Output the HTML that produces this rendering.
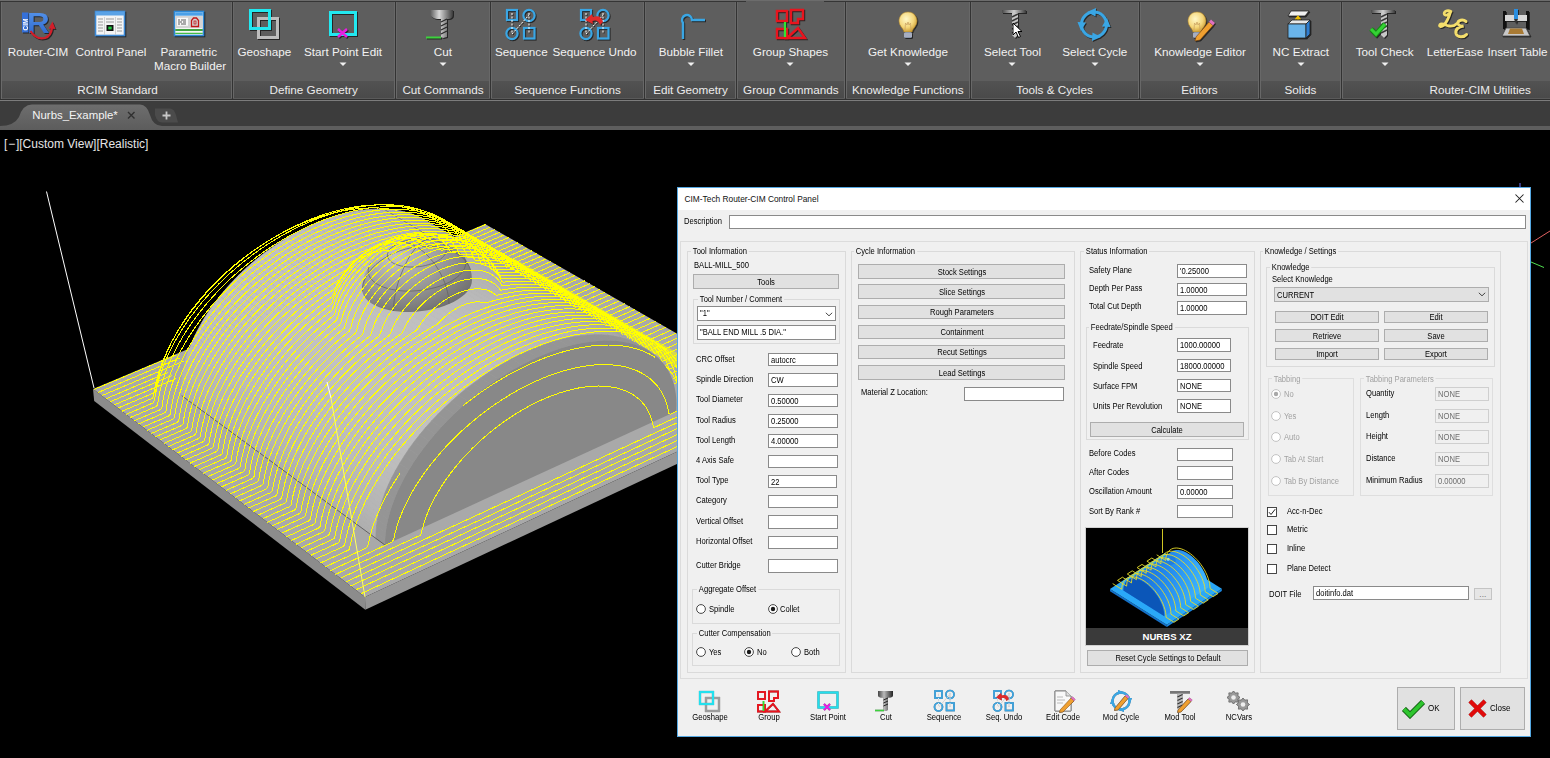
<!DOCTYPE html>
<html><head><meta charset="utf-8"><title>Router-CIM</title>
<style>
html,body{margin:0;padding:0;}
body{width:1550px;height:758px;overflow:hidden;position:relative;background:#000;font-family:"Liberation Sans", sans-serif;}
.a{position:absolute;}
.t{position:absolute;white-space:pre;line-height:1;font-family:"Liberation Sans", sans-serif;}
svg.a{overflow:visible;}
</style></head><body>
<div class="a" style="left:0px;top:0px;width:1550px;height:101px;background:#5e5e5e;"></div>
<div class="a" style="left:0px;top:0px;width:1550px;height:1px;background:#6c6c6c;"></div>
<div class="a" style="left:0px;top:1px;width:746px;height:1px;background:#353535;"></div>
<div class="a" style="left:824px;top:1px;width:726px;height:1px;background:#353535;"></div>
<div class="a" style="left:0px;top:81px;width:1550px;height:17px;background:#4e4e4e;background:linear-gradient(#525252,#4a4a4a);"></div>
<div class="a" style="left:0px;top:98px;width:1550px;height:1px;background:#5a5a5a;"></div>
<div class="a" style="left:0px;top:99px;width:1550px;height:1px;background:#303030;"></div>
<div class="a" style="left:0px;top:100px;width:1550px;height:1px;background:#7c7c7c;"></div>
<div class="a" style="left:0px;top:2px;width:1px;height:97px;background:#3a3a3a;"></div>
<div class="a" style="left:1px;top:2px;width:1px;height:97px;background:#6a6a6a;"></div>
<div class="a" style="left:231px;top:2px;width:1px;height:96px;background:#686868;"></div>
<div class="a" style="left:232px;top:2px;width:1px;height:97px;background:#333333;"></div>
<div class="a" style="left:233px;top:2px;width:1px;height:96px;background:#686868;"></div>
<div class="a" style="left:394px;top:2px;width:1px;height:96px;background:#686868;"></div>
<div class="a" style="left:395px;top:2px;width:1px;height:97px;background:#333333;"></div>
<div class="a" style="left:396px;top:2px;width:1px;height:96px;background:#686868;"></div>
<div class="a" style="left:489px;top:2px;width:1px;height:96px;background:#686868;"></div>
<div class="a" style="left:490px;top:2px;width:1px;height:97px;background:#333333;"></div>
<div class="a" style="left:491px;top:2px;width:1px;height:96px;background:#686868;"></div>
<div class="a" style="left:643px;top:2px;width:1px;height:96px;background:#686868;"></div>
<div class="a" style="left:644px;top:2px;width:1px;height:97px;background:#333333;"></div>
<div class="a" style="left:645px;top:2px;width:1px;height:96px;background:#686868;"></div>
<div class="a" style="left:735px;top:2px;width:1px;height:96px;background:#686868;"></div>
<div class="a" style="left:736px;top:2px;width:1px;height:97px;background:#333333;"></div>
<div class="a" style="left:737px;top:2px;width:1px;height:96px;background:#686868;"></div>
<div class="a" style="left:844px;top:2px;width:1px;height:96px;background:#686868;"></div>
<div class="a" style="left:845px;top:2px;width:1px;height:97px;background:#333333;"></div>
<div class="a" style="left:846px;top:2px;width:1px;height:96px;background:#686868;"></div>
<div class="a" style="left:969px;top:2px;width:1px;height:96px;background:#686868;"></div>
<div class="a" style="left:970px;top:2px;width:1px;height:97px;background:#333333;"></div>
<div class="a" style="left:971px;top:2px;width:1px;height:96px;background:#686868;"></div>
<div class="a" style="left:1138px;top:2px;width:1px;height:96px;background:#686868;"></div>
<div class="a" style="left:1139px;top:2px;width:1px;height:97px;background:#333333;"></div>
<div class="a" style="left:1140px;top:2px;width:1px;height:96px;background:#686868;"></div>
<div class="a" style="left:1258px;top:2px;width:1px;height:96px;background:#686868;"></div>
<div class="a" style="left:1259px;top:2px;width:1px;height:97px;background:#333333;"></div>
<div class="a" style="left:1260px;top:2px;width:1px;height:96px;background:#686868;"></div>
<div class="a" style="left:1340px;top:2px;width:1px;height:96px;background:#686868;"></div>
<div class="a" style="left:1341px;top:2px;width:1px;height:97px;background:#333333;"></div>
<div class="a" style="left:1342px;top:2px;width:1px;height:96px;background:#686868;"></div>
<div class="t" style="left:-112.0px;width:300px;text-align:center;top:46.1px;font-size:11.7px;color:#f2f2f2;font-weight:400;transform-origin:150px 0;">Router-CIM</div>
<div class="t" style="left:-39.0px;width:300px;text-align:center;top:46.1px;font-size:11.7px;color:#f2f2f2;font-weight:400;transform-origin:150px 0;">Control Panel</div>
<div class="t" style="left:38.8px;width:300px;text-align:center;top:46.1px;font-size:11.7px;color:#f2f2f2;font-weight:400;transform-origin:150px 0;">Parametric</div>
<div class="t" style="left:114.4px;width:300px;text-align:center;top:46.1px;font-size:11.7px;color:#f2f2f2;font-weight:400;transform-origin:150px 0;">Geoshape</div>
<div class="t" style="left:193.0px;width:300px;text-align:center;top:46.1px;font-size:11.7px;color:#f2f2f2;font-weight:400;transform-origin:150px 0;">Start Point Edit</div>
<div class="t" style="left:292.8px;width:300px;text-align:center;top:46.1px;font-size:11.7px;color:#f2f2f2;font-weight:400;transform-origin:150px 0;">Cut</div>
<div class="t" style="left:371.4px;width:300px;text-align:center;top:46.1px;font-size:11.7px;color:#f2f2f2;font-weight:400;transform-origin:150px 0;">Sequence</div>
<div class="t" style="left:444.5px;width:300px;text-align:center;top:46.1px;font-size:11.7px;color:#f2f2f2;font-weight:400;transform-origin:150px 0;">Sequence Undo</div>
<div class="t" style="left:540.8px;width:300px;text-align:center;top:46.1px;font-size:11.7px;color:#f2f2f2;font-weight:400;transform-origin:150px 0;">Bubble Fillet</div>
<div class="t" style="left:640.5px;width:300px;text-align:center;top:46.1px;font-size:11.7px;color:#f2f2f2;font-weight:400;transform-origin:150px 0;">Group Shapes</div>
<div class="t" style="left:758.0px;width:300px;text-align:center;top:46.1px;font-size:11.7px;color:#f2f2f2;font-weight:400;transform-origin:150px 0;">Get Knowledge</div>
<div class="t" style="left:862.5px;width:300px;text-align:center;top:46.1px;font-size:11.7px;color:#f2f2f2;font-weight:400;transform-origin:150px 0;">Select Tool</div>
<div class="t" style="left:944.8px;width:300px;text-align:center;top:46.1px;font-size:11.7px;color:#f2f2f2;font-weight:400;transform-origin:150px 0;">Select Cycle</div>
<div class="t" style="left:1050.0px;width:300px;text-align:center;top:46.1px;font-size:11.7px;color:#f2f2f2;font-weight:400;transform-origin:150px 0;">Knowledge Editor</div>
<div class="t" style="left:1150.8px;width:300px;text-align:center;top:46.1px;font-size:11.7px;color:#f2f2f2;font-weight:400;transform-origin:150px 0;">NC Extract</div>
<div class="t" style="left:1234.7px;width:300px;text-align:center;top:46.1px;font-size:11.7px;color:#f2f2f2;font-weight:400;transform-origin:150px 0;">Tool Check</div>
<div class="t" style="left:1304.9px;width:300px;text-align:center;top:46.1px;font-size:11.7px;color:#f2f2f2;font-weight:400;transform-origin:150px 0;">LetterEase</div>
<div class="t" style="left:1367.5px;width:300px;text-align:center;top:46.1px;font-size:11.7px;color:#f2f2f2;font-weight:400;transform-origin:150px 0;">Insert Table</div>
<div class="t" style="left:40.0px;width:300px;text-align:center;top:60.3px;font-size:11.7px;color:#f2f2f2;font-weight:400;transform-origin:150px 0;">Macro Builder</div>
<svg class="a" style="left:339px;top:62px;" width="8" height="4" viewBox="0 0 8 4"><path d="M0.5 0.5 L7.5 0.5 L4 4 Z" fill="#f0f0f0"/></svg>
<svg class="a" style="left:439px;top:62px;" width="8" height="4" viewBox="0 0 8 4"><path d="M0.5 0.5 L7.5 0.5 L4 4 Z" fill="#f0f0f0"/></svg>
<svg class="a" style="left:687px;top:62px;" width="8" height="4" viewBox="0 0 8 4"><path d="M0.5 0.5 L7.5 0.5 L4 4 Z" fill="#f0f0f0"/></svg>
<svg class="a" style="left:786px;top:62px;" width="8" height="4" viewBox="0 0 8 4"><path d="M0.5 0.5 L7.5 0.5 L4 4 Z" fill="#f0f0f0"/></svg>
<svg class="a" style="left:904px;top:62px;" width="8" height="4" viewBox="0 0 8 4"><path d="M0.5 0.5 L7.5 0.5 L4 4 Z" fill="#f0f0f0"/></svg>
<svg class="a" style="left:1008px;top:62px;" width="8" height="4" viewBox="0 0 8 4"><path d="M0.5 0.5 L7.5 0.5 L4 4 Z" fill="#f0f0f0"/></svg>
<svg class="a" style="left:1091px;top:62px;" width="8" height="4" viewBox="0 0 8 4"><path d="M0.5 0.5 L7.5 0.5 L4 4 Z" fill="#f0f0f0"/></svg>
<svg class="a" style="left:1196px;top:62px;" width="8" height="4" viewBox="0 0 8 4"><path d="M0.5 0.5 L7.5 0.5 L4 4 Z" fill="#f0f0f0"/></svg>
<svg class="a" style="left:1297px;top:62px;" width="8" height="4" viewBox="0 0 8 4"><path d="M0.5 0.5 L7.5 0.5 L4 4 Z" fill="#f0f0f0"/></svg>
<svg class="a" style="left:1381px;top:62px;" width="8" height="4" viewBox="0 0 8 4"><path d="M0.5 0.5 L7.5 0.5 L4 4 Z" fill="#f0f0f0"/></svg>
<div class="t" style="left:-32.4px;width:300px;text-align:center;top:83.7px;font-size:11.7px;color:#ececec;font-weight:400;transform-origin:150px 0;">RCIM Standard</div>
<div class="t" style="left:163.7px;width:300px;text-align:center;top:83.7px;font-size:11.7px;color:#ececec;font-weight:400;transform-origin:150px 0;">Define Geometry</div>
<div class="t" style="left:293.0px;width:300px;text-align:center;top:83.7px;font-size:11.7px;color:#ececec;font-weight:400;transform-origin:150px 0;">Cut Commands</div>
<div class="t" style="left:417.5px;width:300px;text-align:center;top:83.7px;font-size:11.7px;color:#ececec;font-weight:400;transform-origin:150px 0;">Sequence Functions</div>
<div class="t" style="left:540.5px;width:300px;text-align:center;top:83.7px;font-size:11.7px;color:#ececec;font-weight:400;transform-origin:150px 0;">Edit Geometry</div>
<div class="t" style="left:640.8px;width:300px;text-align:center;top:83.7px;font-size:11.7px;color:#ececec;font-weight:400;transform-origin:150px 0;">Group Commands</div>
<div class="t" style="left:757.8px;width:300px;text-align:center;top:83.7px;font-size:11.7px;color:#ececec;font-weight:400;transform-origin:150px 0;">Knowledge Functions</div>
<div class="t" style="left:904.5px;width:300px;text-align:center;top:83.7px;font-size:11.7px;color:#ececec;font-weight:400;transform-origin:150px 0;">Tools &amp; Cycles</div>
<div class="t" style="left:1049.5px;width:300px;text-align:center;top:83.7px;font-size:11.7px;color:#ececec;font-weight:400;transform-origin:150px 0;">Editors</div>
<div class="t" style="left:1150.5px;width:300px;text-align:center;top:83.7px;font-size:11.7px;color:#ececec;font-weight:400;transform-origin:150px 0;">Solids</div>
<div class="t" style="left:1330.2px;width:300px;text-align:center;top:83.7px;font-size:11.7px;color:#ececec;font-weight:400;transform-origin:150px 0;">Router-CIM Utilities</div>
<svg class="a" style="left:20px;top:9px;filter:drop-shadow(1px 1px 0.6px rgba(0,0,0,0.6));" width="36" height="30" viewBox="0 0 36 30">
<defs><linearGradient id="rg" x1="0" y1="0" x2="0" y2="1"><stop offset="0" stop-color="#5a9af0"/><stop offset="1" stop-color="#2a62c8"/></linearGradient></defs>
<text x="6.5" y="23.8" font-family="Liberation Sans" font-weight="700" font-size="29" fill="url(#rg)" transform="scale(1.08,1)">R</text>
<rect x="2" y="3.5" width="6.5" height="20" fill="#3570d8"/>
<text x="0" y="0" transform="translate(7.6,21.5) rotate(-90)" font-family="Liberation Sans" font-weight="700" font-size="6.6" fill="#fff">CIM</text>
<path d="M10.5 22 Q16 31 25 29 Q31 27 32 19" stroke="#d21e2a" stroke-width="2.2" fill="none"/>
<path d="M28.5 19.5 L32.5 12.5 L35.5 20 Z" fill="#d21e2a"/>
</svg>
<svg class="a" style="left:94px;top:10px;filter:drop-shadow(1px 1px 0.6px rgba(0,0,0,0.6));" width="33" height="28" viewBox="0 0 33 28">
<rect x="1.5" y="1.5" width="29" height="24" fill="#f4f4f4" stroke="#3e8ad6" stroke-width="1.6"/>
<rect x="1.5" y="1.5" width="29" height="4" fill="#5aa2e6"/>
<g stroke="#9a9a9a" stroke-width="1">
<path d="M4 9h5M4 12h5M4 15h5M4 18h5M4 21h5M23 9h5M23 12h5M23 15h5M23 18h5M23 21h5M12 9h8M12 12h8"/></g>
<path d="M10.5 7v18M21.5 7v18" stroke="#c8c8c8" stroke-width="0.8"/>
<rect x="12.5" y="15" width="7" height="6" fill="#111"/><rect x="14.3" y="16.6" width="3.4" height="2.8" fill="#1ec83c"/>
</svg>
<svg class="a" style="left:173px;top:10px;filter:drop-shadow(1px 1px 0.6px rgba(0,0,0,0.6));" width="33" height="28" viewBox="0 0 33 28">
<rect x="1.5" y="1.5" width="29" height="24" fill="#f6f6f6" stroke="#2e8ad8" stroke-width="1.6"/>
<rect x="2.3" y="2.3" width="27.4" height="3.4" fill="#4aa0e8"/>
<rect x="2.3" y="6" width="27.4" height="12" fill="#d4d4d4"/>
<rect x="4" y="7.8" width="11" height="8" fill="#fafafa"/>
<path d="M5 10h2M8 10h5M5 12h4M10 12h3M5 14h2M8 14h5" stroke="#333" stroke-width="0.8"/>
<path d="M18.5 16.5 V10.5 L20.5 8 H23.5 L25.5 10.5 V16.5 Z" fill="none" stroke="#c01818" stroke-width="1.3"/><rect x="21" y="11" width="2" height="3" fill="none" stroke="#c01818" stroke-width="0.8"/>
<path d="M2.3 20 h27.4" stroke="#138c13" stroke-width="1.6"/><path d="M2.3 23.3 h27.4" stroke="#18b018" stroke-width="1"/>
</svg>
<svg class="a" style="left:247px;top:7px;filter:drop-shadow(1px 1px 0.6px rgba(0,0,0,0.6));" width="34" height="34" viewBox="0 0 34 34">
<rect x="11.5" y="11.5" width="19" height="19" fill="none" stroke="#bdbdbd" stroke-width="3"/>
<rect x="3.5" y="3.5" width="19" height="18" fill="none" stroke="#22e8f0" stroke-width="3"/>
</svg>
<svg class="a" style="left:327px;top:9px;filter:drop-shadow(1px 1px 0.6px rgba(0,0,0,0.6));" width="33" height="32" viewBox="0 0 33 32">
<rect x="3.5" y="3.5" width="25" height="22" fill="none" stroke="#22e8f0" stroke-width="3"/>
<path d="M11 20 L20 28 M20 20 L11 28" stroke="#e81ee0" stroke-width="2.6"/>
</svg>
<svg class="a" style="left:424px;top:7px;filter:drop-shadow(1px 1px 0.6px rgba(0,0,0,0.6));" width="34" height="34" viewBox="0 0 34 34">
<defs><linearGradient id="cg" x1="0" x2="1"><stop offset="0" stop-color="#5a5a5a"/><stop offset="0.4" stop-color="#d8d8d8"/><stop offset="1" stop-color="#3a3a3a"/></linearGradient></defs>
<path d="M6 3 H29 V8 Q29 11 25 12 H23 V30 L19 31 L17 30 V12 H13 Q8 11 6 8 Z" fill="url(#cg)"/>
<path d="M17 15 L23 12 M17 19 L23 16 M17 23 L23 20 M17 27 L23 24" stroke="#2a2a2a" stroke-width="1.3"/>
<path d="M2 30.5 H17" stroke="#3cd23c" stroke-width="2"/>
</svg>
<svg class="a" style="left:505px;top:8px;filter:drop-shadow(1px 1px 0.6px rgba(0,0,0,0.6));" width="32" height="33" viewBox="0 0 32 33"><g fill="none" stroke="#3aa6e4" stroke-width="2.2">
<rect x="2" y="2" width="10" height="10"/><circle cx="24" cy="7.5" r="5.6"/><circle cx="7" cy="25.5" r="5.6"/><rect x="19" y="20" width="10.5" height="10.5"/></g>
<g stroke="#fff" stroke-width="1" stroke-dasharray="2 1.5"><path d="M7 5 V26 M24 5 V26 M7 26 L24 7"/></g></svg>
<svg class="a" style="left:579px;top:8px;filter:drop-shadow(1px 1px 0.6px rgba(0,0,0,0.6));" width="32" height="33" viewBox="0 0 32 33"><g fill="none" stroke="#3aa6e4" stroke-width="2.2">
<rect x="2" y="2" width="10" height="10"/><circle cx="24" cy="7.5" r="5.6"/><circle cx="7" cy="25.5" r="5.6"/><rect x="19" y="20" width="10.5" height="10.5"/></g>
<g stroke="#fff" stroke-width="1" stroke-dasharray="2 1.5"><path d="M7 5 V26 M24 5 V26 M7 26 L24 7"/></g><path d="M24 14 Q22 6 14 9 L13 6 L6 12 L14 16 L13.5 13 Q19 11 21 17 Z" fill="#e02a2a"/></svg>
<svg class="a" style="left:676px;top:12px;filter:drop-shadow(1px 1px 0.6px rgba(0,0,0,0.6));" width="32" height="30" viewBox="0 0 32 30"><path d="M7 27 V11 A5 5 0 1 1 16 8 H29" fill="none" stroke="#3aa6e4" stroke-width="2.4"/></svg>
<svg class="a" style="left:773px;top:7px;filter:drop-shadow(1px 1px 0.6px rgba(0,0,0,0.6));" width="34" height="34" viewBox="0 0 34 34"><g fill="none" stroke="#e8141e" stroke-width="2.4">
<rect x="4" y="4" width="10" height="10"/><path d="M18 3 H30 V12 H25 V16 H18 Z"/><path d="M4 22 H14 V31 H4 Z"/><path d="M14 31 L25 21 L32 31 Z M14 31 L32 31"/></g>
<path d="M12 15 V30" stroke="#2ee82e" stroke-width="2.2"/></svg>
<svg class="a" style="left:898px;top:10px;filter:drop-shadow(1px 1px 0.6px rgba(0,0,0,0.6));" width="30" height="33" viewBox="0 0 30 33"><defs><radialGradient id="bg898" cx="0.4" cy="0.35" r="0.7"><stop offset="0" stop-color="#fff8c8"/><stop offset="0.6" stop-color="#f4d67a"/><stop offset="1" stop-color="#c8962c"/></radialGradient></defs>
<path d="M10 2 C3 2 1 8 1 11 C1 16 5 18 6 22 H14 C15 18 19 16 19 11 C19 8 17 2 10 2 Z" fill="url(#bg898)" stroke="#b48a30" stroke-width="0.6"/>
<path d="M7 20 L7.5 13 L9 15 L10 12 L11 15 L12.5 13 L13 20" fill="none" stroke="#c8a060" stroke-width="0.7"/>
<rect x="6" y="22" width="8" height="6" rx="1.5" fill="#8a96aa"/><path d="M6 24h8M6 26h8" stroke="#dde" stroke-width="0.7"/></svg>
<svg class="a" style="left:1001px;top:8px;filter:drop-shadow(1px 1px 0.6px rgba(0,0,0,0.6));" width="28" height="33" viewBox="0 0 28 33"><defs><linearGradient id="tg1001" x1="0" x2="1"><stop offset="0" stop-color="#4a4a4a"/><stop offset="0.5" stop-color="#cfcfcf"/><stop offset="1" stop-color="#3a3a3a"/></linearGradient></defs>
<path d="M1 2 H25 V5 H1 Z" fill="url(#tg1001)"/>
<path d="M11 5 H17 V27 L14 30 L11 27 Z" fill="#c8c8c8"/>
<path d="M11 9 L17 6 M11 13 L17 10 M11 17 L17 14 M11 21 L17 18 M11 25 L17 22" stroke="#3a3a3a" stroke-width="1.5"/></svg>
<svg class="a" style="left:1012px;top:22px;" width="12" height="18" viewBox="0 0 12 18"><path d="M1 1 L1 13 L4 10 L6.5 15.5 L8.5 14.5 L6 9.5 L10 9.5 Z" fill="#fff" stroke="#000" stroke-width="1"/></svg>
<svg class="a" style="left:1076px;top:7px;filter:drop-shadow(1px 1px 0.6px rgba(0,0,0,0.6));" width="36" height="35" viewBox="0 0 36 35"><circle cx="18" cy="17.5" r="12.5" fill="none" stroke="#3aa6e4" stroke-width="3"/>
<path d="M11 5 L20 1 L19.5 9.5 Z M31 11 L34.5 20 L26 19.5 Z M25 30 L16 34 L16.5 25.5 Z M5 24 L1.5 15 L10 15.5 Z" fill="#3aa6e4"/></svg>
<svg class="a" style="left:1187px;top:10px;filter:drop-shadow(1px 1px 0.6px rgba(0,0,0,0.6));" width="30" height="33" viewBox="0 0 30 33"><defs><radialGradient id="bg1187" cx="0.4" cy="0.35" r="0.7"><stop offset="0" stop-color="#fff8c8"/><stop offset="0.6" stop-color="#f4d67a"/><stop offset="1" stop-color="#c8962c"/></radialGradient></defs>
<path d="M10 2 C3 2 1 8 1 11 C1 16 5 18 6 22 H14 C15 18 19 16 19 11 C19 8 17 2 10 2 Z" fill="url(#bg1187)" stroke="#b48a30" stroke-width="0.6"/>
<path d="M7 20 L7.5 13 L9 15 L10 12 L11 15 L12.5 13 L13 20" fill="none" stroke="#c8a060" stroke-width="0.7"/>
<rect x="6" y="22" width="8" height="6" rx="1.5" fill="#8a96aa"/><path d="M6 24h8M6 26h8" stroke="#dde" stroke-width="0.7"/><path d="M9 27 L22 12 L26 15.5 L13 30 L8 31 Z" fill="#f0a030" stroke="#704010" stroke-width="0.6"/><path d="M22 12 L24 9.5 L28 13 L26 15.5 Z" fill="#e070c0"/></svg>
<svg class="a" style="left:1286px;top:7px;filter:drop-shadow(1px 1px 0.6px rgba(0,0,0,0.6));" width="28" height="34" viewBox="0 0 28 34"><path d="M5 4 H23 L19 9 H2 Z" fill="#f0f0f0" stroke="#222" stroke-width="0.8"/>
<path d="M12 17 V10 M9.5 12.5 L12 9.5 L14.5 12.5" stroke="#f0c000" stroke-width="1.6" fill="none"/>
<path d="M2 17 L6 13 H24 L20 17 Z" fill="#e8e8e8" stroke="#222" stroke-width="0.8"/>
<rect x="2" y="17" width="18" height="14" fill="#6ab4ea" stroke="#222" stroke-width="0.8"/>
<path d="M20 17 L24 13 V27 L20 31 Z" fill="#2f7ed0" stroke="#222" stroke-width="0.8"/></svg>
<svg class="a" style="left:1370px;top:8px;filter:drop-shadow(1px 1px 0.6px rgba(0,0,0,0.6));" width="28" height="33" viewBox="0 0 28 33"><defs><linearGradient id="tg1370" x1="0" x2="1"><stop offset="0" stop-color="#4a4a4a"/><stop offset="0.5" stop-color="#cfcfcf"/><stop offset="1" stop-color="#3a3a3a"/></linearGradient></defs>
<path d="M1 2 H25 V5 H1 Z" fill="url(#tg1370)"/>
<path d="M11 5 H17 V27 L14 30 L11 27 Z" fill="#c8c8c8"/>
<path d="M11 9 L17 6 M11 13 L17 10 M11 17 L17 14 M11 21 L17 18 M11 25 L17 22" stroke="#3a3a3a" stroke-width="1.5"/><path d="M1 21 L6 26 L15 16" fill="none" stroke="#168a16" stroke-width="5"/><path d="M1 21 L6 26 L15 16" fill="none" stroke="#34d234" stroke-width="3"/></svg>
<svg class="a" style="left:1437px;top:8px;filter:drop-shadow(1px 1px 0.6px rgba(0,0,0,0.6));" width="34" height="34" viewBox="0 0 34 34"><g fill="none" stroke="#f4de6c" stroke-linecap="round">
<path d="M14 3.5 C10 1.5 6 4 7.5 6.5 C9 8.5 12 6 13.5 4 C12 9 10 14 6.5 17.5 C4 19.5 1.5 18.5 3 16.5 C5 14.5 9 17.5 12 18 C15 18.5 18 17.5 20 15.5" stroke-width="2.8"/>
<path d="M29 13.5 C26 11 20.5 12 21 15.5 C21.5 18 25 18.5 26.5 18 C22 18.5 18 21 19 25.5 C20 29.5 26.5 30 29.5 26.5" stroke-width="3"/>
</g></svg>
<svg class="a" style="left:1499px;top:8px;filter:drop-shadow(1px 1px 0.6px rgba(0,0,0,0.6));" width="36" height="32" viewBox="0 0 36 32"><rect x="4" y="3" width="3" height="18" fill="#111"/><rect x="27" y="3" width="3" height="18" fill="#111"/>
<rect x="6" y="7" width="22" height="6" fill="#d8d8d8"/>
<rect x="15" y="1" width="4" height="10" fill="#2a8ee0"/><path d="M15 11 L17 16 L19 11 Z" fill="#333"/>
<path d="M7 20 H27 L31 28 H3 Z" fill="#c8c8c8" stroke="#444" stroke-width="0.8"/>
<path d="M9 26 L11 20.5 H23 L25 26 Z" fill="#a87a34"/></svg>
<div class="a" style="left:0px;top:101px;width:1550px;height:29px;background:#3c3c3c;"></div>
<div class="a" style="left:0px;top:126px;width:1550px;height:4px;background:#5e5e5e;"></div>
<svg class="a" style="left:0px;top:103px;" width="200" height="27" viewBox="0 0 200 27"><defs><linearGradient id="tabg" x1="0" y1="0" x2="0" y2="1"><stop offset="0" stop-color="#6e6e6e"/><stop offset="1" stop-color="#5c5c5c"/></linearGradient></defs>
<path d="M0 23 Q14 23 19 14 Q23 1.5 32 1.5 H140 Q147 1.5 150 12 Q153 23 162 23 V27 H0 Z" fill="url(#tabg)"/>
<path d="M155 5.5 H170 Q174 5.5 176 12 L178 19.5 H162 Q157 19.5 155 12 Z" fill="#4b4b4b"/>
<path d="M166.5 8.5 V16.5 M162.5 12.5 H170.5" stroke="#c8c8c8" stroke-width="1.8"/>
<path d="M128 9 L134.5 15.5 M134.5 9 L128 15.5" stroke="#303030" stroke-width="1.4"/></svg>
<div class="t" style="left:32.3px;top:110.3px;font-size:11.4px;color:#f4f4f4;font-weight:400;transform-origin:0 0;">Nurbs_Example*</div>
<div class="a" style="left:0px;top:130px;width:1550px;height:628px;background:#000;"></div>
<svg class="a" style="left:0;top:0" width="1550" height="758" viewBox="0 0 1550 758"><defs><clipPath id="vpc"><rect x="0" y="130" width="1550" height="628"/></clipPath></defs><g clip-path="url(#vpc)"><polygon points="93.0,389.0 365.0,597.0 365.3,609.8 94.2,401.0" fill="#8c8c8c" />
<polygon points="365.0,597.0 791.0,398.6 789.6,411.3 365.3,609.8" fill="#979797" />
<polygon points="93.0,389.0 365.0,597.0 791.0,398.6 485.0,224.0" fill="#a9a9a9" />
<polygon points="181.8,395.7 385.0,545.1 385.1,541.1 181.6,391.8" fill="rgb(175,175,175)" stroke="rgb(175,175,175)" stroke-width="0.8"/>
<polygon points="181.6,391.8 385.1,541.1 385.3,536.9 181.6,387.9" fill="rgb(176,176,176)" stroke="rgb(176,176,176)" stroke-width="0.8"/>
<polygon points="181.6,387.9 385.3,536.9 385.7,532.7 181.7,383.8" fill="rgb(177,177,177)" stroke="rgb(177,177,177)" stroke-width="0.8"/>
<polygon points="181.7,383.8 385.7,532.7 386.3,528.3 182.1,379.7" fill="rgb(178,178,178)" stroke="rgb(178,178,178)" stroke-width="0.8"/>
<polygon points="182.1,379.7 386.3,528.3 387.0,523.9 182.5,375.6" fill="rgb(180,180,180)" stroke="rgb(180,180,180)" stroke-width="0.8"/>
<polygon points="182.5,375.6 387.0,523.9 388.0,519.5 183.2,371.4" fill="rgb(181,181,181)" stroke="rgb(181,181,181)" stroke-width="0.8"/>
<polygon points="183.2,371.4 388.0,519.5 389.1,514.9 184.1,367.1" fill="rgb(182,182,182)" stroke="rgb(182,182,182)" stroke-width="0.8"/>
<polygon points="184.1,367.1 389.1,514.9 390.5,510.4 185.1,362.8" fill="rgb(182,182,182)" stroke="rgb(182,182,182)" stroke-width="0.8"/>
<polygon points="185.1,362.8 390.5,510.4 392.0,505.7 186.2,358.4" fill="rgb(183,183,183)" stroke="rgb(183,183,183)" stroke-width="0.8"/>
<polygon points="186.2,358.4 392.0,505.7 393.7,501.0 187.6,354.0" fill="rgb(184,184,184)" stroke="rgb(184,184,184)" stroke-width="0.8"/>
<polygon points="187.6,354.0 393.7,501.0 395.5,496.3 189.1,349.6" fill="rgb(185,185,185)" stroke="rgb(185,185,185)" stroke-width="0.8"/>
<polygon points="189.1,349.6 395.5,496.3 397.6,491.5 190.8,345.1" fill="rgb(186,186,186)" stroke="rgb(186,186,186)" stroke-width="0.8"/>
<polygon points="190.8,345.1 397.6,491.5 399.8,486.8 192.7,340.7" fill="rgb(187,187,187)" stroke="rgb(187,187,187)" stroke-width="0.8"/>
<polygon points="192.7,340.7 399.8,486.8 402.2,482.0 194.7,336.2" fill="rgb(187,187,187)" stroke="rgb(187,187,187)" stroke-width="0.8"/>
<polygon points="194.7,336.2 402.2,482.0 404.8,477.1 196.9,331.7" fill="rgb(188,188,188)" stroke="rgb(188,188,188)" stroke-width="0.8"/>
<polygon points="196.9,331.7 404.8,477.1 407.5,472.3 199.3,327.2" fill="rgb(189,189,189)" stroke="rgb(189,189,189)" stroke-width="0.8"/>
<polygon points="199.3,327.2 407.5,472.3 410.4,467.5 201.8,322.7" fill="rgb(189,189,189)" stroke="rgb(189,189,189)" stroke-width="0.8"/>
<polygon points="201.8,322.7 410.4,467.5 413.5,462.6 204.4,318.2" fill="rgb(190,190,190)" stroke="rgb(190,190,190)" stroke-width="0.8"/>
<polygon points="204.4,318.2 413.5,462.6 416.7,457.8 207.2,313.8" fill="rgb(190,190,190)" stroke="rgb(190,190,190)" stroke-width="0.8"/>
<polygon points="207.2,313.8 416.7,457.8 420.0,453.0 210.2,309.3" fill="rgb(191,191,191)" stroke="rgb(191,191,191)" stroke-width="0.8"/>
<polygon points="210.2,309.3 420.0,453.0 423.6,448.3 213.3,304.9" fill="rgb(191,191,191)" stroke="rgb(191,191,191)" stroke-width="0.8"/>
<polygon points="213.3,304.9 423.6,448.3 427.2,443.5 216.5,300.6" fill="rgb(192,192,192)" stroke="rgb(192,192,192)" stroke-width="0.8"/>
<polygon points="216.5,300.6 427.2,443.5 431.0,438.8 219.9,296.2" fill="rgb(192,192,192)" stroke="rgb(192,192,192)" stroke-width="0.8"/>
<polygon points="219.9,296.2 431.0,438.8 434.9,434.2 223.4,292.0" fill="rgb(192,192,192)" stroke="rgb(192,192,192)" stroke-width="0.8"/>
<polygon points="223.4,292.0 434.9,434.2 439.0,429.6 227.0,287.7" fill="rgb(193,193,193)" stroke="rgb(193,193,193)" stroke-width="0.8"/>
<polygon points="227.0,287.7 439.0,429.6 443.2,425.0 230.8,283.6" fill="rgb(193,193,193)" stroke="rgb(193,193,193)" stroke-width="0.8"/>
<polygon points="230.8,283.6 443.2,425.0 447.5,420.6 234.7,279.5" fill="rgb(193,193,193)" stroke="rgb(193,193,193)" stroke-width="0.8"/>
<polygon points="234.7,279.5 447.5,420.6 451.9,416.1 238.6,275.4" fill="rgb(193,193,193)" stroke="rgb(193,193,193)" stroke-width="0.8"/>
<polygon points="238.6,275.4 451.9,416.1 456.4,411.8 242.7,271.5" fill="rgb(193,193,193)" stroke="rgb(193,193,193)" stroke-width="0.8"/>
<polygon points="242.7,271.5 456.4,411.8 461.0,407.6 246.9,267.6" fill="rgb(193,193,193)" stroke="rgb(193,193,193)" stroke-width="0.8"/>
<polygon points="246.9,267.6 461.0,407.6 465.7,403.4 251.2,263.8" fill="rgb(193,193,193)" stroke="rgb(193,193,193)" stroke-width="0.8"/>
<polygon points="251.2,263.8 465.7,403.4 470.5,399.3 255.6,260.1" fill="rgb(193,193,193)" stroke="rgb(193,193,193)" stroke-width="0.8"/>
<polygon points="255.6,260.1 470.5,399.3 475.3,395.3 260.0,256.5" fill="rgb(193,193,193)" stroke="rgb(193,193,193)" stroke-width="0.8"/>
<polygon points="260.0,256.5 475.3,395.3 480.3,391.5 264.6,253.0" fill="rgb(193,193,193)" stroke="rgb(193,193,193)" stroke-width="0.8"/>
<polygon points="264.6,253.0 480.3,391.5 485.3,387.7 269.2,249.7" fill="rgb(193,193,193)" stroke="rgb(193,193,193)" stroke-width="0.8"/>
<polygon points="269.2,249.7 485.3,387.7 490.3,384.1 273.8,246.4" fill="rgb(193,193,193)" stroke="rgb(193,193,193)" stroke-width="0.8"/>
<polygon points="273.8,246.4 490.3,384.1 495.5,380.6 278.5,243.2" fill="rgb(192,192,192)" stroke="rgb(192,192,192)" stroke-width="0.8"/>
<polygon points="278.5,243.2 495.5,380.6 500.6,377.2 283.3,240.2" fill="rgb(192,192,192)" stroke="rgb(192,192,192)" stroke-width="0.8"/>
<polygon points="283.3,240.2 500.6,377.2 505.8,373.9 288.1,237.3" fill="rgb(192,192,192)" stroke="rgb(192,192,192)" stroke-width="0.8"/>
<polygon points="288.1,237.3 505.8,373.9 511.0,370.8 293.0,234.5" fill="rgb(191,191,191)" stroke="rgb(191,191,191)" stroke-width="0.8"/>
<polygon points="293.0,234.5 511.0,370.8 516.3,367.8 297.9,231.8" fill="rgb(191,191,191)" stroke="rgb(191,191,191)" stroke-width="0.8"/>
<polygon points="297.9,231.8 516.3,367.8 521.6,364.9 302.8,229.3" fill="rgb(190,190,190)" stroke="rgb(190,190,190)" stroke-width="0.8"/>
<polygon points="302.8,229.3 521.6,364.9 526.8,362.2 307.7,226.9" fill="rgb(190,190,190)" stroke="rgb(190,190,190)" stroke-width="0.8"/>
<polygon points="307.7,226.9 526.8,362.2 532.1,359.6 312.6,224.6" fill="rgb(189,189,189)" stroke="rgb(189,189,189)" stroke-width="0.8"/>
<polygon points="312.6,224.6 532.1,359.6 537.4,357.2 317.6,222.5" fill="rgb(188,188,188)" stroke="rgb(188,188,188)" stroke-width="0.8"/>
<polygon points="317.6,222.5 537.4,357.2 542.6,355.0 322.5,220.6" fill="rgb(188,188,188)" stroke="rgb(188,188,188)" stroke-width="0.8"/>
<polygon points="322.5,220.6 542.6,355.0 547.9,352.9 327.5,218.8" fill="rgb(187,187,187)" stroke="rgb(187,187,187)" stroke-width="0.8"/>
<polygon points="327.5,218.8 547.9,352.9 553.1,350.9 332.4,217.1" fill="rgb(186,186,186)" stroke="rgb(186,186,186)" stroke-width="0.8"/>
<polygon points="332.4,217.1 553.1,350.9 558.3,349.2 337.3,215.6" fill="rgb(186,186,186)" stroke="rgb(186,186,186)" stroke-width="0.8"/>
<polygon points="337.3,215.6 558.3,349.2 563.4,347.5 342.1,214.3" fill="rgb(185,185,185)" stroke="rgb(185,185,185)" stroke-width="0.8"/>
<polygon points="342.1,214.3 563.4,347.5 568.5,346.1 347.0,213.1" fill="rgb(184,184,184)" stroke="rgb(184,184,184)" stroke-width="0.8"/>
<polygon points="347.0,213.1 568.5,346.1 573.5,344.8 351.8,212.0" fill="rgb(183,183,183)" stroke="rgb(183,183,183)" stroke-width="0.8"/>
<polygon points="351.8,212.0 573.5,344.8 578.5,343.7 356.5,211.1" fill="rgb(182,182,182)" stroke="rgb(182,182,182)" stroke-width="0.8"/>
<polygon points="356.5,211.1 578.5,343.7 583.4,342.8 361.2,210.4" fill="rgb(181,181,181)" stroke="rgb(181,181,181)" stroke-width="0.8"/>
<polygon points="361.2,210.4 583.4,342.8 588.3,342.0 365.8,209.8" fill="rgb(180,180,180)" stroke="rgb(180,180,180)" stroke-width="0.8"/>
<polygon points="365.8,209.8 588.3,342.0 593.0,341.4 370.4,209.4" fill="rgb(179,179,179)" stroke="rgb(179,179,179)" stroke-width="0.8"/>
<polygon points="370.4,209.4 593.0,341.4 597.7,340.9 374.9,209.2" fill="rgb(178,178,178)" stroke="rgb(178,178,178)" stroke-width="0.8"/>
<polygon points="374.9,209.2 597.7,340.9 602.3,340.7 379.3,209.1" fill="rgb(177,177,177)" stroke="rgb(177,177,177)" stroke-width="0.8"/>
<polygon points="379.3,209.1 602.3,340.7 606.8,340.6 383.7,209.1" fill="rgb(176,176,176)" stroke="rgb(176,176,176)" stroke-width="0.8"/>
<polygon points="383.7,209.1 606.8,340.6 611.1,340.7 387.9,209.4" fill="rgb(175,175,175)" stroke="rgb(175,175,175)" stroke-width="0.8"/>
<polygon points="387.9,209.4 611.1,340.7 615.4,340.9 392.1,209.7" fill="rgb(174,174,174)" stroke="rgb(174,174,174)" stroke-width="0.8"/>
<polygon points="392.1,209.7 615.4,340.9 619.6,341.3 396.1,210.3" fill="rgb(172,172,172)" stroke="rgb(172,172,172)" stroke-width="0.8"/>
<polygon points="396.1,210.3 619.6,341.3 623.6,341.9 400.1,211.0" fill="rgb(171,171,171)" stroke="rgb(171,171,171)" stroke-width="0.8"/>
<polygon points="400.1,211.0 623.6,341.9 627.5,342.7 403.9,211.8" fill="rgb(170,170,170)" stroke="rgb(170,170,170)" stroke-width="0.8"/>
<polygon points="403.9,211.8 627.5,342.7 631.3,343.6 407.7,212.8" fill="rgb(169,169,169)" stroke="rgb(169,169,169)" stroke-width="0.8"/>
<polygon points="407.7,212.8 631.3,343.6 635.0,344.7 411.3,214.0" fill="rgb(168,168,168)" stroke="rgb(168,168,168)" stroke-width="0.8"/>
<polygon points="411.3,214.0 635.0,344.7 638.5,345.9 414.8,215.3" fill="rgb(166,166,166)" stroke="rgb(166,166,166)" stroke-width="0.8"/>
<polygon points="414.8,215.3 638.5,345.9 641.9,347.3 418.2,216.7" fill="rgb(165,165,165)" stroke="rgb(165,165,165)" stroke-width="0.8"/>
<polygon points="418.2,216.7 641.9,347.3 645.2,348.8 421.4,218.3" fill="rgb(164,164,164)" stroke="rgb(164,164,164)" stroke-width="0.8"/>
<polygon points="421.4,218.3 645.2,348.8 648.3,350.5 424.6,220.0" fill="rgb(162,162,162)" stroke="rgb(162,162,162)" stroke-width="0.8"/>
<polygon points="375.9,538.4 385.0,545.1 385.1,539.0 376.0,532.3" fill="#959595" stroke="#959595" stroke-width="0.6"/>
<polygon points="376.0,532.3 385.1,539.0 385.7,532.7 376.5,526.0" fill="#959595" stroke="#959595" stroke-width="0.6"/>
<polygon points="376.5,526.0 385.7,532.7 386.6,526.2 377.5,519.5" fill="#959595" stroke="#959595" stroke-width="0.6"/>
<polygon points="377.5,519.5 386.6,526.2 388.0,519.5 378.8,512.8" fill="#959595" stroke="#959595" stroke-width="0.6"/>
<polygon points="378.8,512.8 388.0,519.5 389.8,512.7 380.6,506.0" fill="#959595" stroke="#959595" stroke-width="0.6"/>
<polygon points="380.6,506.0 389.8,512.7 392.0,505.7 382.8,499.1" fill="#959595" stroke="#959595" stroke-width="0.6"/>
<polygon points="382.8,499.1 392.0,505.7 394.6,498.7 385.3,492.1" fill="#959595" stroke="#959595" stroke-width="0.6"/>
<polygon points="385.3,492.1 394.6,498.7 397.6,491.5 388.3,485.0" fill="#959595" stroke="#959595" stroke-width="0.6"/>
<polygon points="388.3,485.0 397.6,491.5 401.0,484.4 391.7,477.8" fill="#959595" stroke="#959595" stroke-width="0.6"/>
<polygon points="391.7,477.8 401.0,484.4 404.8,477.1 395.5,470.6" fill="#959595" stroke="#959595" stroke-width="0.6"/>
<polygon points="395.5,470.6 404.8,477.1 408.9,469.9 399.6,463.4" fill="#959595" stroke="#959595" stroke-width="0.6"/>
<polygon points="399.6,463.4 408.9,469.9 413.5,462.6 404.1,456.2" fill="#959595" stroke="#959595" stroke-width="0.6"/>
<polygon points="404.1,456.2 413.5,462.6 418.3,455.4 408.9,449.0" fill="#959595" stroke="#959595" stroke-width="0.6"/>
<polygon points="408.9,449.0 418.3,455.4 423.6,448.3 414.1,441.8" fill="#959595" stroke="#959595" stroke-width="0.6"/>
<polygon points="414.1,441.8 423.6,448.3 429.1,441.2 419.6,434.8" fill="#959595" stroke="#959595" stroke-width="0.6"/>
<polygon points="419.6,434.8 429.1,441.2 434.9,434.2 425.4,427.8" fill="#959595" stroke="#959595" stroke-width="0.6"/>
<polygon points="425.4,427.8 434.9,434.2 441.1,427.3 431.5,420.9" fill="#959595" stroke="#959595" stroke-width="0.6"/>
<polygon points="431.5,420.9 441.1,427.3 447.5,420.6 437.9,414.2" fill="#959595" stroke="#959595" stroke-width="0.6"/>
<polygon points="437.9,414.2 447.5,420.6 454.1,414.0 444.5,407.7" fill="#959595" stroke="#959595" stroke-width="0.6"/>
<polygon points="444.5,407.7 454.1,414.0 461.0,407.6 451.4,401.3" fill="#959595" stroke="#959595" stroke-width="0.6"/>
<polygon points="451.4,401.3 461.0,407.6 468.1,401.3 458.4,395.1" fill="#959595" stroke="#959595" stroke-width="0.6"/>
<polygon points="458.4,395.1 468.1,401.3 475.3,395.3 465.7,389.1" fill="#959595" stroke="#959595" stroke-width="0.6"/>
<polygon points="465.7,389.1 475.3,395.3 482.8,389.6 473.1,383.4" fill="#959595" stroke="#959595" stroke-width="0.6"/>
<polygon points="473.1,383.4 482.8,389.6 490.3,384.1 480.6,377.9" fill="#959595" stroke="#959595" stroke-width="0.6"/>
<polygon points="480.6,377.9 490.3,384.1 498.0,378.8 488.3,372.7" fill="#959595" stroke="#959595" stroke-width="0.6"/>
<polygon points="488.3,372.7 498.0,378.8 505.8,373.9 496.0,367.8" fill="#959595" stroke="#959595" stroke-width="0.6"/>
<polygon points="496.0,367.8 505.8,373.9 513.7,369.2 503.9,363.1" fill="#959595" stroke="#959595" stroke-width="0.6"/>
<polygon points="503.9,363.1 513.7,369.2 521.6,364.9 511.7,358.8" fill="#959595" stroke="#959595" stroke-width="0.6"/>
<polygon points="511.7,358.8 521.6,364.9 529.5,360.9 519.6,354.8" fill="#959595" stroke="#959595" stroke-width="0.6"/>
<polygon points="519.6,354.8 529.5,360.9 537.4,357.2 527.5,351.2" fill="#959595" stroke="#959595" stroke-width="0.6"/>
<polygon points="527.5,351.2 537.4,357.2 545.3,353.9 535.4,347.9" fill="#959595" stroke="#959595" stroke-width="0.6"/>
<polygon points="535.4,347.9 545.3,353.9 553.1,350.9 543.2,344.9" fill="#959595" stroke="#959595" stroke-width="0.6"/>
<polygon points="543.2,344.9 553.1,350.9 560.9,348.3 550.9,342.3" fill="#959595" stroke="#959595" stroke-width="0.6"/>
<polygon points="550.9,342.3 560.9,348.3 568.5,346.1 558.6,340.1" fill="#959595" stroke="#959595" stroke-width="0.6"/>
<polygon points="558.6,340.1 568.5,346.1 576.0,344.2 566.1,338.3" fill="#959595" stroke="#959595" stroke-width="0.6"/>
<polygon points="566.1,338.3 576.0,344.2 583.4,342.8 573.5,336.8" fill="#959595" stroke="#959595" stroke-width="0.6"/>
<polygon points="573.5,336.8 583.4,342.8 590.7,341.7 580.7,335.7" fill="#959595" stroke="#959595" stroke-width="0.6"/>
<polygon points="580.7,335.7 590.7,341.7 597.7,340.9 587.7,335.0" fill="#959595" stroke="#959595" stroke-width="0.6"/>
<polygon points="587.7,335.0 597.7,340.9 604.5,340.6 594.5,334.7" fill="#959595" stroke="#959595" stroke-width="0.6"/>
<polygon points="594.5,334.7 604.5,340.6 611.1,340.7 601.1,334.8" fill="#959595" stroke="#959595" stroke-width="0.6"/>
<polygon points="601.1,334.8 611.1,340.7 617.5,341.1 607.5,335.2" fill="#959595" stroke="#959595" stroke-width="0.6"/>
<polygon points="607.5,335.2 617.5,341.1 623.6,341.9 613.6,336.1" fill="#959595" stroke="#959595" stroke-width="0.6"/>
<polygon points="613.6,336.1 623.6,341.9 629.5,343.1 619.4,337.2" fill="#959595" stroke="#959595" stroke-width="0.6"/>
<polygon points="619.4,337.2 629.5,343.1 635.0,344.7 625.0,338.8" fill="#959595" stroke="#959595" stroke-width="0.6"/>
<polygon points="625.0,338.8 635.0,344.7 640.2,346.6 630.2,340.7" fill="#959595" stroke="#959595" stroke-width="0.6"/>
<polygon points="630.2,340.7 640.2,346.6 645.2,348.8 635.1,343.0" fill="#959595" stroke="#959595" stroke-width="0.6"/>
<polygon points="635.1,343.0 645.2,348.8 649.8,351.4 639.7,345.6" fill="#959595" stroke="#959595" stroke-width="0.6"/>
<polygon points="385.0,545.1 385.1,539.0 385.7,532.7 386.6,526.2 388.0,519.5 389.8,512.7 392.0,505.7 394.6,498.7 397.6,491.5 401.0,484.4 404.8,477.1 408.9,469.9 413.5,462.6 418.3,455.4 423.6,448.3 429.1,441.2 434.9,434.2 441.1,427.3 447.5,420.6 454.1,414.0 461.0,407.6 468.1,401.3 475.3,395.3 482.8,389.6 490.3,384.1 498.0,378.8 505.8,373.9 513.7,369.2 521.6,364.9 529.5,360.9 537.4,357.2 545.3,353.9 553.1,350.9 560.9,348.3 568.5,346.1 576.0,344.2 583.4,342.8 590.7,341.7 597.7,340.9 604.5,340.6 611.1,340.7 617.5,341.1 623.6,341.9 629.5,343.1 635.0,344.7 640.2,346.6 645.2,348.8 649.8,351.4 654.0,354.4 657.9,357.6 661.5,361.2 664.6,365.1 667.5,369.2 669.9,373.7 671.9,378.4 673.6,383.3 674.9,388.5 675.8,393.9 676.3,399.5 676.4,405.3 676.2,411.2" fill="#888888" />
<path d="M181.8 395.7 385.0 545.1" stroke="#505050" stroke-width="0.8" fill="none"/>
<path d="M383.7 209.1 457.0 252.4" stroke="#6a6a6a" stroke-width="0.7" fill="none"/>
<defs><radialGradient id="dg" cx="0.3" cy="0.25" r="0.85"><stop offset="0" stop-color="#c4c4c4"/><stop offset="0.5" stop-color="#9c9c9c"/><stop offset="1" stop-color="#6c6c6c"/></radialGradient></defs>
<polygon points="472.0,280.3 471.7,283.1 470.8,286.0 469.3,288.9 467.2,291.7 464.5,294.4 461.3,297.0 457.7,299.5 453.5,301.9 449.0,304.0 444.0,306.0 438.8,307.7 433.3,309.1 427.7,310.3 421.9,311.1 416.1,311.7 410.2,312.0 404.5,311.9 398.9,311.6 393.5,311.0 388.4,310.0 383.6,308.8 379.2,307.3 375.2,305.6 371.7,303.6 368.7,301.5 366.2,299.1 364.3,296.6 363.0,294.0 362.3,291.3 362.2,288.5 362.4,284.6 362.9,281.8 363.7,277.9 365.1,274.1 366.1,271.4 368.0,267.9 369.5,265.3 371.9,262.0 373.8,259.6 376.5,256.8 378.8,254.6 381.8,252.2 384.2,250.3 387.0,248.5 389.9,246.8 392.6,245.3 395.7,243.9 398.9,242.6 401.1,241.9 404.1,240.9 407.3,240.1 410.6,239.4 413.9,238.9 417.3,238.5 420.7,238.4 424.0,238.4 427.3,238.5 430.4,238.9 433.4,239.4 435.7,239.8 438.9,240.6 441.9,241.5 444.6,242.6 447.6,243.9 450.3,245.3 453.2,247.1 455.7,248.7 458.5,251.1 460.7,253.1 463.1,255.9 464.9,258.1 466.9,261.3 468.3,263.7 469.7,267.3 470.6,269.9 471.5,273.7 471.7,276.4" fill="url(#dg)"/>
<path d="M445.2 284.1 449.3 282.2 452.9 280.1 456.2 277.9 459.0 275.6 461.4 273.2 463.3 270.7 464.6 268.2 465.4 265.7 465.7 263.2 465.5 260.8 464.7 258.4 463.4 256.1 M371.0 263.1 369.6 265.6 368.6 268.1 368.2 270.5 368.3 273.0 369.0 275.4 370.2 277.7 371.9 279.9 374.1 281.9 376.7 283.8 379.9 285.6 383.4 287.1 387.3 288.4 391.6 289.4 396.1 290.2 400.9 290.8 405.8 291.1 410.9 291.1 416.1 290.8 421.2 290.3 426.4 289.6 431.4 288.5 436.2 287.3 440.9 285.8 445.2 284.1 M433.8 262.8 436.2 261.7 438.4 260.5 440.4 259.2 442.1 257.8 443.5 256.4 444.7 254.9 445.5 253.4 446.0 251.9 446.2 250.4 446.1 248.9 445.6 247.5 444.8 246.1 443.8 244.8 442.4 243.6 440.7 242.5 438.8 241.6 436.7 240.7 434.3 239.9 431.8 239.3 429.1 238.9 426.2 238.6 423.3 238.4 420.3 238.4 417.2 238.6 414.2 238.9 411.2 239.4 408.2 240.0 405.3 240.7 402.6 241.6 400.0 242.6 397.6 243.7 395.4 244.9 393.4 246.2 391.7 247.5 390.3 248.9 389.1 250.4 388.2 251.9 387.7 253.4 387.4 254.9 387.5 256.3 387.9 257.7 388.7 259.1 389.7 260.4 391.0 261.7 392.7 262.8 394.5 263.8 396.7 264.7 399.0 265.4 401.6 266.1 404.3 266.5 407.2 266.9 410.2 267.0 413.2 267.0 416.3 266.9 419.4 266.6 422.5 266.1 425.5 265.5 428.4 264.7 431.2 263.8 433.8 262.8 M449.0 304.0 448.8 300.0 448.3 295.8 447.4 291.5 446.2 287.0 444.7 282.6 442.8 278.1 440.7 273.8 438.3 269.5 435.7 265.4 432.8 261.6 429.8 258.0 426.7 254.6 423.4 251.7 420.1 249.1 416.8 246.9 M470.6 269.9 469.1 266.3 467.1 262.9 464.5 259.7 461.4 256.8 457.8 254.2 453.7 251.9 449.3 250.0 444.4 248.5 439.3 247.3 433.8 246.6 428.3 246.2 422.5 246.3 416.8 246.9 M430.4 238.9 428.4 239.0 426.2 239.6 424.0 240.7 421.6 242.3 419.2 244.4 416.8 246.9 M398.2 242.9 400.9 242.5 403.9 242.4 406.9 242.9 410.1 243.7 413.4 245.1 416.8 246.9 M362.3 291.3 362.5 287.3 363.3 283.4 364.7 279.4 366.7 275.5 369.3 271.7 372.3 268.1 375.9 264.5 379.9 261.2 384.4 258.2 389.2 255.4 394.3 253.0 399.7 250.9 405.3 249.2 411.0 247.8 416.8 246.9 M393.5 311.0 393.6 306.9 393.9 302.6 394.5 298.1 395.4 293.4 396.5 288.6 397.8 283.8 399.3 279.0 401.1 274.2 403.0 269.6 405.0 265.1 407.2 260.8 409.5 256.8 411.9 253.1 414.3 249.8 416.8 246.9" stroke="#5e5e5e" stroke-width="0.7" fill="none"/>
<path d="M93.7 389.5 114.4 380.9 134.9 372.2 155.3 363.6 175.6 355.1 M467.2 232.3 485.8 224.5 M97.7 392.6 118.4 383.9 138.9 375.2 159.4 366.6 179.7 358.0 M471.7 234.9 490.3 227.1 M101.7 395.7 122.4 386.9 143.0 378.2 163.5 369.6 183.8 361.0 M476.2 237.5 494.9 229.6 M105.8 398.8 126.5 390.0 147.1 381.3 167.6 372.6 M480.8 240.2 499.5 232.3 M109.8 401.9 130.6 393.1 151.2 384.3 171.7 375.6 M485.3 242.8 504.1 234.9 M113.9 405.0 134.7 396.2 155.3 387.4 175.9 378.7 M489.9 245.4 508.7 237.5 M118.0 408.1 119.6 407.4 121.2 406.7 122.8 406.0 124.4 405.4 126.0 404.7 127.6 404.0 129.2 403.3 130.8 402.6 132.4 402.0 134.0 401.3 135.6 400.6 137.2 399.9 138.8 399.2 140.4 398.6 142.0 397.9 143.6 397.2 145.2 396.5 146.8 395.9 148.4 395.2 149.9 394.5 151.5 393.8 153.1 393.2 154.7 392.5 156.1 388.8 157.2 382.5 158.4 377.1 159.6 372.4 160.9 368.1 162.3 364.1 163.6 360.3 165.0 356.8 166.4 353.5 167.8 350.3 169.2 347.2 170.6 344.2 172.0 341.4 173.5 338.6 174.9 336.0 176.4 333.4 177.8 330.9 179.3 328.4 180.8 326.0 182.2 323.7 183.7 321.4 185.2 319.2 186.7 317.0 188.2 314.9 189.7 312.8 191.2 310.7 192.7 308.7 194.2 306.8 195.7 304.8 197.3 302.9 198.8 301.1 200.3 299.2 201.8 297.4 203.4 295.7 204.9 293.9 206.4 292.2 208.0 290.5 209.5 288.8 211.0 287.2 212.6 285.6 214.1 284.0 215.7 282.4 217.2 280.9 218.7 279.4 220.3 277.9 221.8 276.4 223.4 275.0 224.9 273.5 226.5 272.1 228.1 270.7 229.6 269.3 231.2 268.0 232.7 266.7 234.3 265.3 235.8 264.0 237.4 262.8 239.0 261.5 240.5 260.3 242.1 259.0 243.7 257.8 245.2 256.6 246.8 255.5 248.4 254.3 249.9 253.2 251.5 252.0 253.1 250.9 254.6 249.8 256.2 248.7 257.8 247.7 259.3 246.6 260.9 245.6 262.5 244.6 264.1 243.6 265.6 242.6 267.2 241.6 268.8 240.6 270.3 239.7 271.9 238.7 273.5 237.8 275.1 236.9 276.6 236.0 278.2 235.2 279.8 234.3 281.4 233.4 282.9 232.6 284.5 231.8 286.1 231.0 287.7 230.2 289.2 229.4 290.8 228.6 292.4 227.9 294.0 227.2 295.5 226.4 297.1 225.7 298.7 225.0 300.2 224.3 301.8 223.7 303.4 223.0 305.0 222.4 306.5 221.7 308.1 221.1 309.7 220.5 311.3 219.9 312.8 219.3 314.4 218.8 316.0 218.2 317.5 217.7 319.1 217.2 320.7 216.6 322.3 216.1 323.8 215.7 325.4 215.2 327.0 214.7 328.5 214.3 330.1 213.9 331.7 213.5 333.2 213.1 334.8 212.7 336.4 212.3 337.9 211.9 339.5 211.6 341.1 211.3 342.6 210.9 344.2 210.6 345.8 210.4 347.3 210.1 348.9 209.8 350.4 209.6 352.0 209.4 353.6 209.2 355.1 209.0 356.7 208.8 358.2 208.6 359.8 208.5 361.3 208.3 362.9 208.2 364.5 208.1 366.0 208.0 367.6 208.0 369.1 207.9 370.7 207.9 372.2 207.9 373.8 207.9 375.3 207.9 376.9 208.0 378.4 208.0 379.9 208.1 381.5 208.2 383.0 208.3 384.6 208.5 386.1 208.6 387.7 208.8 389.2 209.0 390.7 209.2 392.3 209.5 393.8 209.7 395.3 210.0 396.9 210.3 M482.9 253.0 484.4 252.4 485.8 251.8 487.3 251.2 488.7 250.6 490.2 249.9 491.6 249.3 493.1 248.7 494.5 248.1 496.0 247.5 497.4 246.9 498.8 246.3 500.3 245.6 501.7 245.0 503.2 244.4 504.6 243.8 506.1 243.2 507.5 242.6 509.0 242.0 510.4 241.4 511.8 240.7 513.3 240.1 M122.1 411.2 123.7 410.5 125.3 409.9 126.9 409.2 128.5 408.5 130.1 407.8 131.7 407.1 133.3 406.4 134.9 405.8 136.5 405.1 138.1 404.4 139.7 403.7 141.3 403.0 142.9 402.4 144.5 401.7 146.1 401.0 147.7 400.3 149.3 399.6 150.9 399.0 152.5 398.3 153.8 394.1 154.9 387.6 156.1 382.2 157.4 377.4 158.6 373.0 160.0 368.9 161.3 365.1 162.7 361.5 164.1 358.1 165.5 354.8 166.9 351.7 168.3 348.6 169.7 345.7 171.2 342.9 172.6 340.2 174.1 337.6 175.5 335.0 177.0 332.5 178.5 330.0 179.9 327.6 181.4 325.3 182.9 323.0 184.4 320.8 185.9 318.6 187.4 316.5 188.9 314.4 190.4 312.3 191.9 310.3 193.5 308.3 195.0 306.4 196.5 304.5 198.0 302.6 199.6 300.7 201.1 298.9 202.6 297.1 204.2 295.4 205.7 293.6 207.2 291.9 208.8 290.2 210.3 288.6 211.9 286.9 213.4 285.3 215.0 283.7 216.5 282.2 218.1 280.6 219.6 279.1 221.2 277.6 222.7 276.1 224.3 274.7 225.8 273.3 227.4 271.8 229.0 270.4 230.5 269.1 232.1 267.7 233.6 266.4 235.2 265.0 236.8 263.7 238.3 262.4 239.9 261.2 241.5 259.9 243.0 258.7 244.6 257.5 246.2 256.2 247.8 255.1 249.3 253.9 250.9 252.7 252.5 251.6 254.0 250.5 255.6 249.3 257.2 248.3 258.8 247.2 260.3 246.1 261.9 245.1 263.5 244.0 265.1 243.0 266.7 242.0 268.2 241.0 269.8 240.0 271.4 239.0 273.0 238.1 274.5 237.2 276.1 236.2 277.7 235.3 279.3 234.4 280.9 233.5 282.4 232.7 284.0 231.8 285.6 231.0 287.2 230.1 288.8 229.3 290.3 228.5 291.9 227.7 293.5 227.0 295.1 226.2 296.7 225.4 298.2 224.7 299.8 224.0 301.4 223.3 303.0 222.6 304.5 221.9 306.1 221.2 307.7 220.5 309.3 219.9 310.9 219.3 312.4 218.6 314.0 218.0 315.6 217.4 317.2 216.9 318.7 216.3 320.3 215.7 321.9 215.2 323.5 214.7 325.0 214.1 326.6 213.6 328.2 213.2 329.8 212.7 331.3 212.2 332.9 211.8 334.5 211.3 336.1 210.9 337.6 210.5 339.2 210.1 340.8 209.7 342.3 209.3 343.9 209.0 345.5 208.6 347.0 208.3 348.6 208.0 350.2 207.7 351.7 207.4 353.3 207.1 354.9 206.9 356.4 206.6 358.0 206.4 359.6 206.2 361.1 206.0 362.7 205.8 364.2 205.6 365.8 205.5 367.4 205.3 368.9 205.2 370.5 205.1 372.0 205.0 373.6 205.0 375.1 204.9 376.7 204.9 378.2 204.8 379.8 204.8 381.3 204.8 382.9 204.9 384.4 204.9 386.0 205.0 387.5 205.1 389.1 205.2 390.6 205.3 392.2 205.4 393.7 205.6 395.2 205.7 396.8 205.9 398.3 206.2 399.9 206.4 401.4 206.7 402.9 207.0 404.5 207.3 406.0 207.6 407.5 208.0 409.1 208.4 410.6 208.8 412.1 209.2 413.6 209.7 415.2 210.2 416.7 210.7 418.2 211.2 419.7 211.8 421.2 212.4 422.8 213.1 424.3 213.7 425.8 214.5 427.3 215.2 428.8 216.0 430.3 216.9 431.8 217.7 433.3 218.7 434.8 219.6 436.3 220.7 437.8 221.7 439.3 222.9 440.8 224.1 442.3 225.4 443.8 226.7 445.3 228.1 446.7 229.6 448.2 231.2 449.7 233.0 451.2 234.8 M487.5 255.7 489.0 255.1 490.4 254.5 491.9 253.9 493.3 253.2 494.8 252.6 496.2 252.0 497.7 251.4 499.1 250.8 500.6 250.2 502.0 249.5 503.5 248.9 504.9 248.3 506.4 247.7 507.8 247.1 509.3 246.5 510.7 245.8 512.1 245.2 513.6 244.6 515.0 244.0 516.5 243.4 517.9 242.8 M126.2 414.4 127.8 413.7 129.4 413.0 131.0 412.3 132.6 411.6 134.2 410.9 135.8 410.3 137.4 409.6 139.0 408.9 140.7 408.2 142.3 407.5 143.9 406.8 145.5 406.2 147.1 405.5 148.7 404.8 150.3 404.1 151.9 403.4 153.5 402.7 154.8 398.7 155.9 392.1 157.1 386.6 158.3 381.7 159.6 377.2 160.9 373.1 162.3 369.2 163.6 365.6 165.0 362.1 166.4 358.8 167.8 355.6 169.3 352.6 170.7 349.6 172.1 346.8 173.6 344.0 175.0 341.3 176.5 338.7 178.0 336.2 179.5 333.7 180.9 331.3 182.4 328.9 183.9 326.6 185.4 324.3 186.9 322.1 188.4 320.0 189.9 317.8 191.4 315.8 193.0 313.7 194.5 311.7 196.0 309.7 197.5 307.8 199.0 305.9 200.6 304.0 202.1 302.2 203.6 300.3 205.2 298.6 206.7 296.8 208.3 295.1 209.8 293.4 211.4 291.7 212.9 290.0 214.5 288.4 216.0 286.8 217.6 285.2 219.1 283.6 220.7 282.1 222.2 280.5 223.8 279.0 225.3 277.6 226.9 276.1 228.5 274.7 230.0 273.2 231.6 271.8 233.2 270.5 234.7 269.1 236.3 267.7 237.9 266.4 239.4 265.1 241.0 263.8 242.6 262.5 244.2 261.3 245.7 260.0 247.3 258.8 248.9 257.6 250.5 256.4 252.0 255.2 253.6 254.0 255.2 252.9 256.8 251.7 258.3 250.6 259.9 249.5 261.5 248.4 263.1 247.4 264.7 246.3 266.2 245.3 267.8 244.2 269.4 243.2 271.0 242.2 272.6 241.2 274.2 240.2 275.7 239.3 277.3 238.3 278.9 237.4 280.5 236.5 282.1 235.6 283.6 234.7 285.2 233.8 286.8 232.9 288.4 232.1 290.0 231.2 291.6 230.4 293.1 229.6 294.7 228.8 296.3 228.0 297.9 227.2 299.5 226.4 301.1 225.7 302.6 224.9 304.2 224.2 305.8 223.5 307.4 222.8 309.0 222.1 310.6 221.4 312.1 220.8 313.7 220.1 315.3 219.5 316.9 218.9 318.5 218.3 320.0 217.7 321.6 217.1 323.2 216.5 324.8 216.0 326.4 215.4 327.9 214.9 329.5 214.4 331.1 213.8 332.7 213.3 334.2 212.9 335.8 212.4 337.4 211.9 339.0 211.5 340.5 211.1 342.1 210.7 343.7 210.2 345.3 209.9 346.8 209.5 348.4 209.1 350.0 208.8 351.6 208.4 353.1 208.1 354.7 207.8 356.3 207.5 357.8 207.2 359.4 207.0 361.0 206.7 362.5 206.5 364.1 206.3 365.7 206.0 367.2 205.8 368.8 205.7 370.3 205.5 371.9 205.4 373.5 205.2 375.0 205.1 376.6 205.0 378.1 204.9 379.7 204.8 381.2 204.8 382.8 204.8 384.4 204.7 385.9 204.7 387.5 204.7 389.0 204.8 390.6 204.8 392.1 204.9 393.7 205.0 395.2 205.1 396.7 205.2 398.3 205.3 399.8 205.5 401.4 205.7 402.9 205.9 404.5 206.1 406.0 206.3 407.5 206.6 409.1 206.9 410.6 207.2 412.1 207.5 413.7 207.9 415.2 208.2 416.7 208.7 418.2 209.1 419.8 209.5 421.3 210.0 422.8 210.5 424.3 211.1 425.9 211.7 427.4 212.3 428.9 212.9 430.4 213.6 431.9 214.3 433.4 215.0 434.9 215.8 436.4 216.6 438.0 217.5 439.5 218.4 441.0 219.3 442.5 220.3 444.0 221.4 445.4 222.5 446.9 223.7 448.4 224.9 449.9 226.2 451.4 227.6 452.9 229.0 454.4 230.6 455.8 232.2 457.3 233.9 458.8 235.8 460.2 237.8 461.7 240.0 463.1 242.3 M492.1 258.4 493.6 257.8 495.0 257.2 496.5 256.5 497.9 255.9 499.4 255.3 500.9 254.7 502.3 254.1 503.8 253.4 505.2 252.8 506.7 252.2 508.1 251.6 509.6 251.0 511.0 250.4 512.5 249.7 513.9 249.1 515.3 248.5 516.8 247.9 518.2 247.3 519.7 246.7 521.1 246.0 522.6 245.4 M130.3 417.5 131.9 416.8 133.5 416.2 135.2 415.5 136.8 414.8 138.4 414.1 140.0 413.4 141.6 412.7 143.2 412.0 144.8 411.4 146.4 410.7 148.0 410.0 149.6 409.3 151.2 408.6 152.8 407.9 154.4 407.2 156.0 406.6 157.6 405.1 158.6 397.9 159.8 392.0 161.0 386.9 162.3 382.2 163.6 378.0 165.0 374.0 166.3 370.2 167.7 366.7 169.1 363.3 170.5 360.1 171.9 357.0 173.4 354.0 174.8 351.1 176.3 348.3 177.7 345.5 179.2 342.9 180.7 340.3 182.1 337.8 183.6 335.4 185.1 333.0 186.6 330.6 188.1 328.3 189.6 326.1 191.1 323.9 192.6 321.8 194.1 319.6 195.7 317.6 197.2 315.5 198.7 313.5 200.2 311.6 201.8 309.6 203.3 307.8 204.8 305.9 206.4 304.0 207.9 302.2 209.5 300.5 211.0 298.7 212.6 297.0 214.1 295.3 215.7 293.6 217.2 291.9 218.8 290.3 220.3 288.7 221.9 287.1 223.4 285.6 225.0 284.0 226.6 282.5 228.1 281.0 229.7 279.5 231.2 278.1 232.8 276.6 234.4 275.2 236.0 273.8 237.5 272.4 239.1 271.1 240.7 269.7 242.2 268.4 243.8 267.1 245.4 265.8 247.0 264.5 248.5 263.3 250.1 262.0 251.7 260.8 253.3 259.6 254.9 258.4 256.4 257.2 258.0 256.0 259.6 254.9 261.2 253.7 262.8 252.6 264.3 251.5 265.9 250.4 267.5 249.4 269.1 248.3 270.7 247.2 272.3 246.2 273.8 245.2 275.4 244.2 277.0 243.2 278.6 242.2 280.2 241.3 281.8 240.3 283.4 239.4 284.9 238.5 286.5 237.5 288.1 236.7 289.7 235.8 291.3 234.9 292.9 234.0 294.5 233.2 296.0 232.4 297.6 231.6 299.2 230.7 300.8 230.0 302.4 229.2 304.0 228.4 305.6 227.7 307.1 226.9 308.7 226.2 310.3 225.5 311.9 224.8 313.5 224.1 315.1 223.4 316.7 222.8 318.2 222.1 319.8 221.5 321.4 220.8 323.0 220.2 324.6 219.6 326.2 219.0 327.7 218.5 329.3 217.9 330.9 217.4 332.5 216.8 334.1 216.3 335.6 215.8 337.2 215.3 338.8 214.8 340.4 214.3 342.0 213.9 343.5 213.4 345.1 213.0 346.7 212.6 348.3 212.2 349.8 211.8 351.4 211.4 353.0 211.0 354.6 210.7 356.1 210.3 357.7 210.0 359.3 209.7 360.8 209.4 362.4 209.1 364.0 208.9 365.5 208.6 367.1 208.4 368.7 208.1 370.2 207.9 371.8 207.7 373.4 207.5 374.9 207.4 376.5 207.2 378.1 207.1 379.6 207.0 381.2 206.8 382.7 206.8 384.3 206.7 385.9 206.6 387.4 206.6 389.0 206.5 390.5 206.5 392.1 206.5 393.6 206.6 395.2 206.6 396.7 206.7 398.3 206.7 399.8 206.8 401.4 207.0 402.9 207.1 404.5 207.2 406.0 207.4 407.5 207.6 409.1 207.8 410.6 208.1 412.2 208.3 413.7 208.6 415.2 208.9 416.8 209.2 418.3 209.6 419.8 209.9 421.4 210.3 422.9 210.7 424.4 211.2 425.9 211.7 427.5 212.2 429.0 212.7 430.5 213.2 432.0 213.8 433.5 214.5 435.1 215.1 436.6 215.8 438.1 216.5 439.6 217.3 441.1 218.1 442.6 218.9 444.1 219.8 445.6 220.7 447.1 221.7 448.6 222.8 450.1 223.8 451.6 225.0 453.1 226.2 454.6 227.4 456.1 228.8 457.5 230.2 459.0 231.7 460.5 233.3 462.0 235.0 463.4 236.8 464.9 238.7 466.4 240.7 467.8 243.0 469.3 245.4 M496.8 261.1 498.2 260.5 499.7 259.9 501.1 259.2 502.6 258.6 504.0 258.0 505.5 257.4 507.0 256.8 508.4 256.1 509.9 255.5 511.3 254.9 512.8 254.3 514.2 253.7 515.7 253.0 517.1 252.4 518.6 251.8 520.0 251.2 521.5 250.6 522.9 249.9 524.4 249.3 525.8 248.7 527.2 248.1 M134.5 420.7 136.1 420.0 137.7 419.3 139.3 418.6 140.9 418.0 142.5 417.3 144.1 416.6 145.8 415.9 147.4 415.2 149.0 414.5 150.6 413.8 152.2 413.1 153.8 412.4 155.4 411.8 157.0 411.1 158.6 410.4 160.2 409.7 161.8 408.2 162.8 401.0 164.0 395.1 165.3 390.0 166.5 385.3 167.9 381.1 169.2 377.1 170.6 373.3 172.0 369.8 173.4 366.4 174.8 363.2 176.2 360.0 177.6 357.0 179.1 354.1 180.5 351.3 182.0 348.6 183.5 345.9 185.0 343.4 186.4 340.8 187.9 338.4 189.4 336.0 190.9 333.7 192.4 331.4 193.9 329.1 195.4 326.9 197.0 324.8 198.5 322.7 200.0 320.6 201.5 318.5 203.1 316.5 204.6 314.6 206.1 312.6 207.7 310.7 209.2 308.9 210.7 307.0 212.3 305.2 213.8 303.4 215.4 301.7 216.9 299.9 218.5 298.2 220.0 296.6 221.6 294.9 223.1 293.3 224.7 291.7 226.3 290.1 227.8 288.5 229.4 287.0 231.0 285.4 232.5 283.9 234.1 282.5 235.7 281.0 237.2 279.6 238.8 278.1 240.4 276.7 242.0 275.4 243.5 274.0 245.1 272.6 246.7 271.3 248.3 270.0 249.8 268.7 251.4 267.4 253.0 266.2 254.6 264.9 256.2 263.7 257.7 262.5 259.3 261.3 260.9 260.1 262.5 258.9 264.1 257.8 265.6 256.6 267.2 255.5 268.8 254.4 270.4 253.3 272.0 252.2 273.6 251.2 275.2 250.1 276.8 249.1 278.3 248.1 279.9 247.0 281.5 246.1 283.1 245.1 284.7 244.1 286.3 243.2 287.9 242.2 289.5 241.3 291.0 240.4 292.6 239.5 294.2 238.6 295.8 237.7 297.4 236.9 299.0 236.0 300.6 235.2 302.2 234.4 303.8 233.6 305.3 232.8 306.9 232.0 308.5 231.2 310.1 230.5 311.7 229.7 313.3 229.0 314.9 228.3 316.5 227.6 318.0 226.9 319.6 226.2 321.2 225.5 322.8 224.9 324.4 224.3 326.0 223.6 327.6 223.0 329.1 222.4 330.7 221.8 332.3 221.2 333.9 220.7 335.5 220.1 337.1 219.6 338.6 219.1 340.2 218.6 341.8 218.1 343.4 217.6 345.0 217.1 346.5 216.6 348.1 216.2 349.7 215.8 351.3 215.3 352.9 214.9 354.4 214.5 356.0 214.2 357.6 213.8 359.2 213.4 360.7 213.1 362.3 212.8 363.9 212.5 365.5 212.2 367.0 211.9 368.6 211.6 370.2 211.3 371.7 211.1 373.3 210.9 374.9 210.7 376.4 210.5 378.0 210.3 379.6 210.1 381.1 209.9 382.7 209.8 384.3 209.7 385.8 209.6 387.4 209.5 388.9 209.4 390.5 209.3 392.1 209.3 393.6 209.3 395.2 209.3 396.7 209.3 398.3 209.3 399.8 209.3 401.4 209.4 402.9 209.5 404.5 209.6 406.0 209.7 407.6 209.8 409.1 210.0 410.7 210.1 412.2 210.3 413.8 210.5 415.3 210.8 416.8 211.0 418.4 211.3 419.9 211.6 421.4 211.9 423.0 212.3 424.5 212.6 426.0 213.0 427.6 213.4 429.1 213.9 430.6 214.4 432.1 214.9 433.7 215.4 435.2 215.9 436.7 216.5 438.2 217.2 439.7 217.8 441.2 218.5 442.8 219.2 444.3 220.0 445.8 220.8 447.3 221.6 448.8 222.5 450.3 223.4 451.8 224.4 453.3 225.5 454.8 226.5 456.3 227.7 457.8 228.9 459.2 230.1 460.7 231.5 462.2 232.9 463.7 234.4 465.2 236.0 466.6 237.7 468.1 239.5 469.6 241.4 471.0 243.5 472.5 245.7 473.9 248.1 M501.4 263.8 502.9 263.2 504.3 262.6 505.8 261.9 507.3 261.3 508.7 260.7 510.2 260.1 511.6 259.5 513.1 258.8 514.5 258.2 516.0 257.6 517.4 257.0 518.9 256.3 520.3 255.7 521.8 255.1 523.2 254.5 524.7 253.9 526.1 253.2 527.6 252.6 529.0 252.0 530.5 251.4 531.9 250.8 M138.6 423.9 140.3 423.2 141.9 422.5 143.5 421.8 145.1 421.1 146.7 420.4 148.3 419.7 149.9 419.1 151.6 418.4 153.2 417.7 154.8 417.0 156.4 416.3 158.0 415.6 159.6 414.9 161.2 414.2 162.8 413.5 164.4 412.9 166.0 411.4 167.0 404.2 168.2 398.3 169.5 393.1 170.8 388.5 172.1 384.2 173.5 380.2 174.8 376.4 176.2 372.9 177.6 369.5 179.1 366.2 180.5 363.1 181.9 360.1 183.4 357.2 184.8 354.4 186.3 351.7 187.8 349.0 189.3 346.4 190.8 343.9 192.2 341.4 193.7 339.0 195.2 336.7 196.8 334.4 198.3 332.2 199.8 329.9 201.3 327.8 202.8 325.7 204.4 323.6 205.9 321.6 207.4 319.5 208.9 317.6 210.5 315.6 212.0 313.7 213.6 311.9 215.1 310.0 216.7 308.2 218.2 306.4 219.8 304.7 221.3 302.9 222.9 301.2 224.4 299.5 226.0 297.9 227.6 296.2 229.1 294.6 230.7 293.0 232.2 291.5 233.8 289.9 235.4 288.4 237.0 286.9 238.5 285.4 240.1 283.9 241.7 282.5 243.2 281.1 244.8 279.7 246.4 278.3 248.0 276.9 249.6 275.6 251.1 274.2 252.7 272.9 254.3 271.6 255.9 270.3 257.5 269.1 259.0 267.8 260.6 266.6 262.2 265.4 263.8 264.2 265.4 263.0 267.0 261.8 268.6 260.7 270.1 259.5 271.7 258.4 273.3 257.3 274.9 256.2 276.5 255.1 278.1 254.0 279.7 253.0 281.3 251.9 282.9 250.9 284.4 249.9 286.0 248.9 287.6 247.9 289.2 247.0 290.8 246.0 292.4 245.1 294.0 244.1 295.6 243.2 297.2 242.3 298.8 241.4 300.4 240.6 301.9 239.7 303.5 238.9 305.1 238.0 306.7 237.2 308.3 236.4 309.9 235.6 311.5 234.8 313.1 234.1 314.7 233.3 316.3 232.6 317.9 231.8 319.4 231.1 321.0 230.4 322.6 229.7 324.2 229.0 325.8 228.4 327.4 227.7 329.0 227.1 330.6 226.4 332.1 225.8 333.7 225.2 335.3 224.6 336.9 224.0 338.5 223.5 340.1 222.9 341.7 222.4 343.2 221.9 344.8 221.3 346.4 220.8 348.0 220.4 349.6 219.9 351.2 219.4 352.7 219.0 354.3 218.5 355.9 218.1 357.5 217.7 359.1 217.3 360.6 216.9 362.2 216.6 363.8 216.2 365.4 215.9 366.9 215.5 368.5 215.2 370.1 214.9 371.7 214.6 373.2 214.4 374.8 214.1 376.4 213.9 378.0 213.6 379.5 213.4 381.1 213.2 382.7 213.0 384.2 212.8 385.8 212.7 387.4 212.6 388.9 212.4 390.5 212.3 392.0 212.2 393.6 212.1 395.2 212.1 396.7 212.0 398.3 212.0 399.8 212.0 401.4 212.0 403.0 212.0 404.5 212.1 406.1 212.1 407.6 212.2 409.2 212.3 410.7 212.4 412.3 212.5 413.8 212.7 415.3 212.9 416.9 213.0 418.4 213.3 420.0 213.5 421.5 213.7 423.0 214.0 424.6 214.3 426.1 214.6 427.7 215.0 429.2 215.3 430.7 215.7 432.2 216.2 433.8 216.6 435.3 217.1 436.8 217.6 438.3 218.1 439.9 218.7 441.4 219.3 442.9 219.9 444.4 220.5 445.9 221.2 447.4 221.9 449.0 222.7 450.5 223.5 452.0 224.3 453.5 225.2 455.0 226.2 456.5 227.1 458.0 228.2 459.5 229.3 461.0 230.4 462.4 231.6 463.9 232.9 465.4 234.2 466.9 235.6 468.4 237.1 469.8 238.7 471.3 240.4 472.8 242.2 474.2 244.1 475.7 246.2 477.1 248.4 478.6 250.9 M506.1 266.5 507.6 265.9 509.0 265.3 510.5 264.7 511.9 264.0 513.4 263.4 514.8 262.8 516.3 262.2 517.8 261.5 519.2 260.9 520.7 260.3 522.1 259.7 523.6 259.1 525.0 258.4 526.5 257.8 527.9 257.2 529.4 256.6 530.8 255.9 532.3 255.3 533.7 254.7 535.2 254.1 536.6 253.5 M142.8 427.1 144.4 426.4 146.1 425.7 147.7 425.0 149.3 424.3 150.9 423.6 152.5 422.9 154.1 422.2 155.8 421.5 157.4 420.9 159.0 420.2 160.6 419.5 162.2 418.8 163.8 418.1 165.4 417.4 167.0 416.7 168.6 416.0 170.2 414.5 171.3 407.3 172.5 401.4 173.7 396.3 175.0 391.6 176.4 387.3 177.7 383.3 179.1 379.6 180.5 376.0 181.9 372.6 183.3 369.3 184.8 366.2 186.2 363.2 187.7 360.3 189.2 357.5 190.6 354.7 192.1 352.1 193.6 349.5 195.1 347.0 196.6 344.5 198.1 342.1 199.6 339.7 201.1 337.4 202.6 335.2 204.1 333.0 205.7 330.8 207.2 328.7 208.7 326.6 210.3 324.6 211.8 322.6 213.3 320.6 214.9 318.7 216.4 316.7 218.0 314.9 219.5 313.0 221.1 311.2 222.6 309.4 224.2 307.6 225.7 305.9 227.3 304.2 228.9 302.5 230.4 300.9 232.0 299.2 233.5 297.6 235.1 296.0 236.7 294.4 238.3 292.9 239.8 291.4 241.4 289.9 243.0 288.4 244.5 286.9 246.1 285.5 247.7 284.0 249.3 282.6 250.9 281.2 252.4 279.9 254.0 278.5 255.6 277.2 257.2 275.8 258.8 274.5 260.4 273.3 261.9 272.0 263.5 270.7 265.1 269.5 266.7 268.3 268.3 267.1 269.9 265.9 271.5 264.7 273.1 263.6 274.7 262.4 276.2 261.3 277.8 260.2 279.4 259.1 281.0 258.0 282.6 256.9 284.2 255.9 285.8 254.8 287.4 253.8 289.0 252.8 290.6 251.8 292.2 250.8 293.8 249.8 295.4 248.9 296.9 247.9 298.5 247.0 300.1 246.1 301.7 245.2 303.3 244.3 304.9 243.4 306.5 242.6 308.1 241.7 309.7 240.9 311.3 240.1 312.9 239.2 314.5 238.4 316.1 237.7 317.7 236.9 319.3 236.1 320.8 235.4 322.4 234.7 324.0 233.9 325.6 233.2 327.2 232.5 328.8 231.8 330.4 231.2 332.0 230.5 333.6 229.9 335.2 229.2 336.8 228.6 338.3 228.0 339.9 227.4 341.5 226.9 343.1 226.3 344.7 225.7 346.3 225.2 347.9 224.7 349.5 224.1 351.0 223.6 352.6 223.2 354.2 222.7 355.8 222.2 357.4 221.8 359.0 221.3 360.5 220.9 362.1 220.5 363.7 220.1 365.3 219.7 366.9 219.3 368.4 219.0 370.0 218.6 371.6 218.3 373.2 218.0 374.8 217.7 376.3 217.4 377.9 217.1 379.5 216.9 381.0 216.6 382.6 216.4 384.2 216.2 385.8 216.0 387.3 215.8 388.9 215.6 390.5 215.4 392.0 215.3 393.6 215.2 395.2 215.1 396.7 215.0 398.3 214.9 399.8 214.8 401.4 214.8 403.0 214.8 404.5 214.7 406.1 214.7 407.6 214.8 409.2 214.8 410.7 214.9 412.3 214.9 413.9 215.0 415.4 215.1 416.9 215.3 418.5 215.4 420.0 215.6 421.6 215.8 423.1 216.0 424.7 216.2 426.2 216.5 427.8 216.7 429.3 217.0 430.8 217.4 432.4 217.7 433.9 218.1 435.4 218.5 437.0 218.9 438.5 219.3 440.0 219.8 441.5 220.3 443.1 220.8 444.6 221.4 446.1 222.0 447.6 222.6 449.1 223.3 450.6 223.9 452.2 224.7 453.7 225.4 455.2 226.2 456.7 227.1 458.2 228.0 459.7 228.9 461.2 229.9 462.7 230.9 464.2 232.0 465.7 233.1 467.1 234.3 468.6 235.6 470.1 236.9 471.6 238.3 473.1 239.8 474.5 241.4 476.0 243.1 477.5 244.9 478.9 246.8 480.4 248.9 481.8 251.2 483.3 253.6 M510.8 269.3 512.2 268.6 513.7 268.0 515.2 267.4 516.6 266.8 518.1 266.1 519.5 265.5 521.0 264.9 522.5 264.3 523.9 263.6 525.4 263.0 526.8 262.4 528.3 261.8 529.7 261.1 531.2 260.5 532.7 259.9 534.1 259.3 535.6 258.6 537.0 258.0 538.5 257.4 539.9 256.8 541.4 256.2 M147.0 430.3 148.6 429.6 150.3 428.9 151.9 428.2 153.5 427.5 155.1 426.8 156.7 426.1 158.4 425.4 160.0 424.7 161.6 424.0 163.2 423.4 164.8 422.7 166.4 422.0 168.1 421.3 169.7 420.6 171.3 419.9 172.9 419.2 174.4 417.7 175.5 410.5 176.7 404.6 178.0 399.4 179.3 394.7 180.7 390.4 182.0 386.4 183.4 382.7 184.8 379.1 186.2 375.7 187.7 372.5 189.1 369.3 190.6 366.3 192.0 363.4 193.5 360.6 195.0 357.8 196.4 355.2 197.9 352.6 199.4 350.0 200.9 347.6 202.4 345.2 204.0 342.8 205.5 340.5 207.0 338.3 208.5 336.0 210.0 333.9 211.6 331.8 213.1 329.7 214.6 327.6 216.2 325.6 217.7 323.6 219.3 321.7 220.8 319.8 222.4 317.9 223.9 316.0 225.5 314.2 227.0 312.4 228.6 310.7 230.2 308.9 231.7 307.2 233.3 305.5 234.9 303.8 236.4 302.2 238.0 300.6 239.6 299.0 241.1 297.4 242.7 295.9 244.3 294.3 245.9 292.8 247.4 291.3 249.0 289.9 250.6 288.4 252.2 287.0 253.8 285.6 255.3 284.2 256.9 282.8 258.5 281.4 260.1 280.1 261.7 278.8 263.3 277.5 264.9 276.2 266.5 274.9 268.0 273.7 269.6 272.4 271.2 271.2 272.8 270.0 274.4 268.8 276.0 267.6 277.6 266.5 279.2 265.3 280.8 264.2 282.4 263.1 284.0 262.0 285.6 260.9 287.2 259.8 288.7 258.8 290.3 257.7 291.9 256.7 293.5 255.7 295.1 254.7 296.7 253.7 298.3 252.7 299.9 251.8 301.5 250.8 303.1 249.9 304.7 249.0 306.3 248.1 307.9 247.2 309.5 246.3 311.1 245.4 312.7 244.6 314.3 243.7 315.9 242.9 317.5 242.1 319.1 241.3 320.7 240.5 322.3 239.7 323.9 239.0 325.5 238.2 327.0 237.5 328.6 236.8 330.2 236.1 331.8 235.4 333.4 234.7 335.0 234.0 336.6 233.4 338.2 232.7 339.8 232.1 341.4 231.5 343.0 230.8 344.6 230.3 346.2 229.7 347.8 229.1 349.3 228.5 350.9 228.0 352.5 227.5 354.1 227.0 355.7 226.4 357.3 226.0 358.9 225.5 360.5 225.0 362.0 224.6 363.6 224.1 365.2 223.7 366.8 223.3 368.4 222.9 370.0 222.5 371.5 222.1 373.1 221.8 374.7 221.4 376.3 221.1 377.9 220.8 379.4 220.5 381.0 220.2 382.6 219.9 384.2 219.6 385.7 219.4 387.3 219.2 388.9 218.9 390.4 218.7 392.0 218.6 393.6 218.4 395.2 218.2 396.7 218.1 398.3 217.9 399.9 217.8 401.4 217.7 403.0 217.7 404.5 217.6 406.1 217.5 407.7 217.5 409.2 217.5 410.8 217.5 412.3 217.5 413.9 217.6 415.5 217.6 417.0 217.7 418.6 217.8 420.1 217.9 421.7 218.0 423.2 218.2 424.8 218.3 426.3 218.5 427.8 218.7 429.4 219.0 430.9 219.2 432.5 219.5 434.0 219.8 435.5 220.1 437.1 220.5 438.6 220.8 440.1 221.2 441.7 221.6 443.2 222.1 444.7 222.5 446.3 223.0 447.8 223.6 449.3 224.1 450.8 224.7 452.3 225.3 453.9 226.0 455.4 226.7 456.9 227.4 458.4 228.2 459.9 229.0 461.4 229.8 462.9 230.7 464.4 231.6 465.9 232.6 467.4 233.6 468.9 234.7 470.4 235.9 471.9 237.1 473.4 238.3 474.8 239.7 476.3 241.1 477.8 242.6 479.3 244.2 480.7 245.8 482.2 247.7 483.6 249.6 485.1 251.7 486.5 253.9 488.0 256.3 M515.5 272.0 517.0 271.4 518.4 270.8 519.9 270.1 521.3 269.5 522.8 268.9 524.3 268.3 525.7 267.6 527.2 267.0 528.6 266.4 530.1 265.7 531.6 265.1 533.0 264.5 534.5 263.9 535.9 263.2 537.4 262.6 538.8 262.0 540.3 261.4 541.8 260.7 543.2 260.1 544.7 259.5 546.1 258.9 M151.2 433.5 152.9 432.8 154.5 432.1 156.1 431.4 157.7 430.7 159.4 430.0 161.0 429.3 162.6 428.6 164.2 427.9 165.8 427.3 167.4 426.6 169.1 425.9 170.7 425.2 172.3 424.5 173.9 423.8 175.5 423.1 177.1 422.4 178.7 420.9 179.8 413.7 181.0 407.7 182.3 402.6 183.6 397.9 184.9 393.6 186.3 389.6 187.7 385.8 189.1 382.2 190.5 378.8 192.0 375.6 193.4 372.4 194.9 369.4 196.4 366.5 197.8 363.7 199.3 360.9 200.8 358.3 202.3 355.7 203.8 353.1 205.3 350.7 206.8 348.2 208.3 345.9 209.9 343.6 211.4 341.3 212.9 339.1 214.4 336.9 216.0 334.8 217.5 332.7 219.1 330.7 220.6 328.6 222.1 326.7 223.7 324.7 225.2 322.8 226.8 320.9 228.4 319.1 229.9 317.2 231.5 315.4 233.0 313.7 234.6 311.9 236.2 310.2 237.7 308.5 239.3 306.8 240.9 305.2 242.5 303.6 244.0 302.0 245.6 300.4 247.2 298.9 248.8 297.3 250.3 295.8 251.9 294.3 253.5 292.8 255.1 291.4 256.7 290.0 258.3 288.5 259.8 287.1 261.4 285.8 263.0 284.4 264.6 283.1 266.2 281.7 267.8 280.4 269.4 279.1 271.0 277.9 272.6 276.6 274.2 275.4 275.8 274.1 277.3 272.9 278.9 271.7 280.5 270.6 282.1 269.4 283.7 268.2 285.3 267.1 286.9 266.0 288.5 264.9 290.1 263.8 291.7 262.7 293.3 261.7 294.9 260.6 296.5 259.6 298.1 258.6 299.7 257.6 301.3 256.6 302.9 255.6 304.5 254.7 306.1 253.7 307.7 252.8 309.3 251.9 310.9 250.9 312.5 250.1 314.1 249.2 315.7 248.3 317.3 247.4 318.9 246.6 320.5 245.8 322.1 245.0 323.7 244.2 325.3 243.4 326.9 242.6 328.5 241.8 330.1 241.1 331.7 240.3 333.3 239.6 334.9 238.9 336.5 238.2 338.1 237.5 339.7 236.9 341.3 236.2 342.8 235.5 344.4 234.9 346.0 234.3 347.6 233.7 349.2 233.1 350.8 232.5 352.4 231.9 354.0 231.4 355.6 230.8 357.2 230.3 358.8 229.8 360.4 229.3 361.9 228.8 363.5 228.3 365.1 227.8 366.7 227.4 368.3 226.9 369.9 226.5 371.5 226.1 373.1 225.7 374.6 225.3 376.2 224.9 377.8 224.6 379.4 224.2 381.0 223.9 382.5 223.6 384.1 223.3 385.7 223.0 387.3 222.7 388.9 222.4 390.4 222.2 392.0 221.9 393.6 221.7 395.2 221.5 396.7 221.3 398.3 221.2 399.9 221.0 401.4 220.9 403.0 220.7 404.6 220.6 406.1 220.5 407.7 220.4 409.3 220.4 410.8 220.3 412.4 220.3 414.0 220.3 415.5 220.3 417.1 220.3 418.6 220.3 420.2 220.4 421.7 220.5 423.3 220.5 424.8 220.7 426.4 220.8 427.9 220.9 429.5 221.1 431.0 221.3 432.6 221.5 434.1 221.7 435.7 222.0 437.2 222.2 438.7 222.5 440.3 222.9 441.8 223.2 443.4 223.6 444.9 224.0 446.4 224.4 448.0 224.8 449.5 225.3 451.0 225.8 452.5 226.3 454.1 226.9 455.6 227.5 457.1 228.1 458.6 228.7 460.1 229.4 461.6 230.2 463.1 230.9 464.6 231.7 466.2 232.6 467.7 233.4 469.2 234.4 470.7 235.3 472.2 236.4 473.6 237.5 475.1 238.6 476.6 239.8 478.1 241.1 479.6 242.4 481.1 243.8 482.5 245.3 484.0 246.9 485.5 248.6 486.9 250.4 488.4 252.3 489.8 254.4 491.3 256.7 492.7 259.1 M520.2 274.8 521.7 274.1 523.1 273.5 524.6 272.9 526.1 272.3 527.5 271.6 529.0 271.0 530.5 270.4 531.9 269.7 533.4 269.1 534.9 268.5 536.3 267.9 537.8 267.2 539.2 266.6 540.7 266.0 542.1 265.3 543.6 264.7 545.1 264.1 546.5 263.5 548.0 262.8 549.4 262.2 550.9 261.6 M155.5 436.8 157.1 436.1 158.7 435.4 160.3 434.7 162.0 434.0 163.6 433.3 165.2 432.6 166.8 431.9 168.5 431.2 170.1 430.5 171.7 429.8 173.3 429.1 174.9 428.4 176.6 427.7 178.2 427.0 179.8 426.3 181.4 425.6 183.0 424.1 184.1 416.9 185.3 410.9 186.6 405.7 187.9 401.1 189.3 396.8 190.6 392.8 192.0 389.0 193.5 385.4 194.9 382.0 196.3 378.7 197.8 375.6 199.2 372.6 200.7 369.6 202.2 366.8 203.7 364.0 205.2 361.4 206.7 358.8 208.2 356.2 209.7 353.8 211.2 351.3 212.7 349.0 214.3 346.7 215.8 344.4 217.3 342.2 218.9 340.0 220.4 337.9 221.9 335.8 223.5 333.7 225.0 331.7 226.6 329.7 228.1 327.8 229.7 325.9 231.2 324.0 232.8 322.1 234.4 320.3 235.9 318.5 237.5 316.7 239.1 315.0 240.6 313.2 242.2 311.5 243.8 309.9 245.4 308.2 246.9 306.6 248.5 305.0 250.1 303.4 251.7 301.9 253.3 300.3 254.8 298.8 256.4 297.3 258.0 295.8 259.6 294.4 261.2 292.9 262.8 291.5 264.4 290.1 266.0 288.7 267.5 287.4 269.1 286.0 270.7 284.7 272.3 283.4 273.9 282.1 275.5 280.8 277.1 279.6 278.7 278.3 280.3 277.1 281.9 275.9 283.5 274.7 285.1 273.5 286.7 272.3 288.3 271.2 289.9 270.0 291.5 268.9 293.1 267.8 294.7 266.7 296.3 265.7 297.9 264.6 299.5 263.5 301.1 262.5 302.7 261.5 304.3 260.5 305.9 259.5 307.5 258.5 309.1 257.6 310.7 256.6 312.3 255.7 313.9 254.7 315.5 253.8 317.1 252.9 318.7 252.1 320.3 251.2 321.9 250.3 323.5 249.5 325.1 248.7 326.7 247.8 328.3 247.0 329.9 246.2 331.5 245.5 333.1 244.7 334.7 244.0 336.3 243.2 337.9 242.5 339.5 241.8 341.1 241.1 342.7 240.4 344.3 239.7 345.9 239.0 347.5 238.4 349.1 237.8 350.7 237.1 352.3 236.5 353.9 235.9 355.5 235.3 357.1 234.8 358.7 234.2 360.3 233.7 361.9 233.1 363.5 232.6 365.0 232.1 366.6 231.6 368.2 231.1 369.8 230.7 371.4 230.2 373.0 229.8 374.6 229.3 376.2 228.9 377.8 228.5 379.3 228.1 380.9 227.7 382.5 227.4 384.1 227.0 385.7 226.7 387.3 226.4 388.8 226.1 390.4 225.8 392.0 225.5 393.6 225.2 395.2 225.0 396.7 224.7 398.3 224.5 399.9 224.3 401.5 224.1 403.0 224.0 404.6 223.8 406.2 223.6 407.7 223.5 409.3 223.4 410.9 223.3 412.4 223.2 414.0 223.2 415.6 223.1 417.1 223.1 418.7 223.1 420.3 223.1 421.8 223.1 423.4 223.1 424.9 223.2 426.5 223.2 428.0 223.3 429.6 223.4 431.1 223.6 432.7 223.7 434.2 223.9 435.8 224.1 437.3 224.3 438.9 224.5 440.4 224.7 442.0 225.0 443.5 225.3 445.0 225.6 446.6 226.0 448.1 226.3 449.7 226.7 451.2 227.1 452.7 227.6 454.2 228.1 455.8 228.6 457.3 229.1 458.8 229.6 460.3 230.2 461.9 230.8 463.4 231.5 464.9 232.2 466.4 232.9 467.9 233.7 469.4 234.5 470.9 235.3 472.4 236.2 473.9 237.1 475.4 238.1 476.9 239.1 478.4 240.2 479.9 241.4 481.4 242.6 482.9 243.8 484.3 245.2 485.8 246.6 487.3 248.1 488.8 249.7 490.2 251.4 491.7 253.2 493.1 255.1 494.6 257.2 496.0 259.4 497.5 261.9 M525.0 277.5 526.4 276.9 527.9 276.3 529.4 275.6 530.8 275.0 532.3 274.4 533.8 273.8 535.2 273.1 536.7 272.5 538.2 271.9 539.6 271.2 541.1 270.6 542.5 270.0 544.0 269.3 545.5 268.7 546.9 268.1 548.4 267.5 549.8 266.8 551.3 266.2 552.8 265.6 554.2 264.9 555.7 264.3 M159.7 440.0 161.4 439.3 163.0 438.6 164.6 437.9 166.2 437.2 167.9 436.5 169.5 435.8 171.1 435.1 172.7 434.4 174.4 433.7 176.0 433.0 177.6 432.3 179.2 431.6 180.8 430.9 182.5 430.2 184.1 429.5 185.7 428.8 187.3 427.3 188.4 420.1 189.6 414.1 190.9 408.9 192.2 404.3 193.6 399.9 195.0 395.9 196.4 392.1 197.8 388.6 199.2 385.1 200.7 381.9 202.2 378.7 203.6 375.7 205.1 372.8 206.6 369.9 208.1 367.2 209.6 364.5 211.1 361.9 212.6 359.3 214.1 356.9 215.6 354.4 217.1 352.1 218.7 349.8 220.2 347.5 221.7 345.3 223.3 343.1 224.8 341.0 226.4 338.9 227.9 336.8 229.5 334.8 231.0 332.8 232.6 330.8 234.1 328.9 235.7 327.0 237.3 325.2 238.8 323.3 240.4 321.5 242.0 319.7 243.6 318.0 245.1 316.3 246.7 314.6 248.3 312.9 249.9 311.2 251.4 309.6 253.0 308.0 254.6 306.4 256.2 304.9 257.8 303.3 259.4 301.8 261.0 300.3 262.5 298.8 264.1 297.4 265.7 295.9 267.3 294.5 268.9 293.1 270.5 291.7 272.1 290.4 273.7 289.0 275.3 287.7 276.9 286.4 278.5 285.1 280.1 283.8 281.7 282.5 283.3 281.3 284.9 280.1 286.5 278.8 288.1 277.6 289.7 276.5 291.3 275.3 292.9 274.1 294.5 273.0 296.1 271.9 297.7 270.8 299.3 269.7 300.9 268.6 302.5 267.5 304.1 266.5 305.7 265.4 307.3 264.4 308.9 263.4 310.5 262.4 312.1 261.4 313.7 260.5 315.3 259.5 316.9 258.6 318.5 257.7 320.1 256.7 321.7 255.8 323.4 255.0 325.0 254.1 326.6 253.2 328.2 252.4 329.8 251.6 331.4 250.7 333.0 249.9 334.6 249.1 336.2 248.4 337.8 247.6 339.4 246.8 341.0 246.1 342.6 245.4 344.2 244.6 345.8 243.9 347.4 243.3 349.0 242.6 350.6 241.9 352.2 241.3 353.8 240.6 355.4 240.0 357.0 239.4 358.6 238.8 360.2 238.2 361.8 237.6 363.4 237.1 365.0 236.5 366.6 236.0 368.2 235.5 369.8 234.9 371.3 234.4 372.9 234.0 374.5 233.5 376.1 233.0 377.7 232.6 379.3 232.2 380.9 231.7 382.5 231.3 384.1 230.9 385.7 230.6 387.2 230.2 388.8 229.9 390.4 229.5 392.0 229.2 393.6 228.9 395.2 228.6 396.7 228.3 398.3 228.0 399.9 227.8 401.5 227.6 403.1 227.3 404.6 227.1 406.2 226.9 407.8 226.8 409.3 226.6 410.9 226.4 412.5 226.3 414.1 226.2 415.6 226.1 417.2 226.0 418.8 225.9 420.3 225.9 421.9 225.9 423.5 225.8 425.0 225.8 426.6 225.9 428.1 225.9 429.7 225.9 431.3 226.0 432.8 226.1 434.4 226.2 435.9 226.3 437.5 226.5 439.0 226.6 440.6 226.8 442.1 227.0 443.7 227.3 445.2 227.5 446.7 227.8 448.3 228.1 449.8 228.4 451.4 228.7 452.9 229.1 454.4 229.5 456.0 229.9 457.5 230.4 459.0 230.8 460.6 231.3 462.1 231.9 463.6 232.4 465.1 233.0 466.6 233.6 468.2 234.3 469.7 235.0 471.2 235.7 472.7 236.4 474.2 237.2 475.7 238.1 477.2 239.0 478.7 239.9 480.2 240.9 481.7 241.9 483.2 243.0 484.7 244.1 486.2 245.3 487.6 246.6 489.1 247.9 490.6 249.4 492.1 250.9 493.5 252.4 495.0 254.1 496.5 255.9 497.9 257.9 499.4 260.0 500.8 262.2 502.2 264.6 M529.7 280.3 531.2 279.7 532.7 279.1 534.1 278.4 535.6 277.8 537.1 277.1 538.5 276.5 540.0 275.9 541.5 275.3 542.9 274.6 544.4 274.0 545.9 273.4 547.3 272.7 548.8 272.1 550.2 271.5 551.7 270.8 553.2 270.2 554.6 269.6 556.1 268.9 557.6 268.3 559.0 267.7 560.5 267.0 M164.0 443.3 165.6 442.6 167.3 441.9 168.9 441.2 170.5 440.5 172.1 439.8 173.8 439.1 175.4 438.4 177.0 437.7 178.7 437.0 180.3 436.2 181.9 435.5 183.5 434.8 185.2 434.1 186.8 433.4 188.4 432.7 190.0 432.0 191.6 430.5 192.7 423.3 194.0 417.3 195.2 412.1 196.6 407.4 198.0 403.1 199.3 399.1 200.8 395.3 202.2 391.7 203.6 388.3 205.1 385.0 206.5 381.9 208.0 378.8 209.5 375.9 211.0 373.1 212.5 370.3 214.0 367.6 215.5 365.0 217.0 362.5 218.5 360.0 220.1 357.6 221.6 355.2 223.1 352.9 224.7 350.6 226.2 348.4 227.7 346.2 229.3 344.1 230.8 342.0 232.4 339.9 233.9 337.9 235.5 335.9 237.1 333.9 238.6 332.0 240.2 330.1 241.8 328.2 243.3 326.4 244.9 324.6 246.5 322.8 248.1 321.1 249.6 319.3 251.2 317.6 252.8 315.9 254.4 314.3 256.0 312.7 257.5 311.0 259.1 309.5 260.7 307.9 262.3 306.4 263.9 304.8 265.5 303.3 267.1 301.8 268.7 300.4 270.3 298.9 271.9 297.5 273.5 296.1 275.1 294.7 276.7 293.4 278.3 292.0 279.9 290.7 281.5 289.4 283.1 288.1 284.7 286.8 286.3 285.5 287.9 284.3 289.5 283.0 291.1 281.8 292.7 280.6 294.3 279.4 295.9 278.2 297.5 277.1 299.1 276.0 300.7 274.8 302.3 273.7 303.9 272.6 305.5 271.5 307.1 270.5 308.7 269.4 310.3 268.4 311.9 267.4 313.5 266.3 315.2 265.4 316.8 264.4 318.4 263.4 320.0 262.4 321.6 261.5 323.2 260.6 324.8 259.7 326.4 258.8 328.0 257.9 329.6 257.0 331.2 256.1 332.8 255.3 334.4 254.5 336.0 253.6 337.6 252.8 339.3 252.0 340.9 251.3 342.5 250.5 344.1 249.7 345.7 249.0 347.3 248.3 348.9 247.5 350.5 246.8 352.1 246.1 353.7 245.5 355.3 244.8 356.9 244.1 358.5 243.5 360.1 242.9 361.7 242.3 363.3 241.6 364.9 241.1 366.5 240.5 368.1 239.9 369.7 239.4 371.3 238.8 372.9 238.3 374.5 237.8 376.1 237.3 377.7 236.8 379.3 236.3 380.9 235.9 382.4 235.4 384.0 235.0 385.6 234.6 387.2 234.2 388.8 233.8 390.4 233.4 392.0 233.0 393.6 232.7 395.2 232.3 396.7 232.0 398.3 231.7 399.9 231.4 401.5 231.1 403.1 230.9 404.7 230.6 406.2 230.4 407.8 230.2 409.4 229.9 411.0 229.8 412.5 229.6 414.1 229.4 415.7 229.3 417.3 229.1 418.8 229.0 420.4 228.9 422.0 228.8 423.5 228.8 425.1 228.7 426.7 228.7 428.2 228.6 429.8 228.6 431.4 228.7 432.9 228.7 434.5 228.7 436.0 228.8 437.6 228.9 439.2 229.0 440.7 229.1 442.3 229.3 443.8 229.4 445.4 229.6 446.9 229.8 448.5 230.1 450.0 230.3 451.5 230.6 453.1 230.9 454.6 231.2 456.2 231.5 457.7 231.9 459.2 232.3 460.8 232.7 462.3 233.1 463.8 233.6 465.4 234.1 466.9 234.6 468.4 235.2 469.9 235.8 471.4 236.4 473.0 237.0 474.5 237.7 476.0 238.5 477.5 239.2 479.0 240.0 480.5 240.9 482.0 241.7 483.5 242.7 485.0 243.7 486.5 244.7 488.0 245.8 489.5 246.9 491.0 248.1 492.5 249.4 493.9 250.7 495.4 252.1 496.9 253.6 498.3 255.2 499.8 256.9 501.3 258.7 502.7 260.7 504.2 262.7 505.6 265.0 507.0 267.4 M534.5 283.1 536.0 282.5 537.4 281.8 538.9 281.2 540.4 280.6 541.9 279.9 543.3 279.3 544.8 278.7 546.3 278.0 547.7 277.4 549.2 276.8 550.7 276.1 552.1 275.5 553.6 274.9 555.1 274.2 556.5 273.6 558.0 273.0 559.4 272.3 560.9 271.7 562.4 271.1 563.8 270.4 565.3 269.8 M168.3 446.6 169.9 445.9 171.5 445.2 173.2 444.4 174.8 443.7 176.4 443.0 178.1 442.3 179.7 441.6 181.3 440.9 183.0 440.2 184.6 439.5 186.2 438.8 187.8 438.1 189.5 437.4 191.1 436.7 192.7 436.0 194.3 435.3 195.9 433.8 197.1 426.5 198.3 420.6 199.6 415.4 200.9 410.7 202.3 406.3 203.7 402.3 205.1 398.5 206.6 394.9 208.0 391.5 209.5 388.2 210.9 385.1 212.4 382.0 213.9 379.1 215.4 376.2 216.9 373.5 218.4 370.8 219.9 368.2 221.4 365.6 223.0 363.1 224.5 360.7 226.0 358.3 227.6 356.0 229.1 353.7 230.7 351.5 232.2 349.3 233.8 347.2 235.3 345.1 236.9 343.0 238.4 341.0 240.0 339.0 241.6 337.0 243.1 335.1 244.7 333.2 246.3 331.3 247.8 329.5 249.4 327.7 251.0 325.9 252.6 324.1 254.2 322.4 255.7 320.7 257.3 319.0 258.9 317.3 260.5 315.7 262.1 314.1 263.7 312.5 265.3 310.9 266.9 309.4 268.5 307.9 270.1 306.4 271.6 304.9 273.2 303.4 274.8 302.0 276.4 300.5 278.0 299.1 279.6 297.7 281.2 296.4 282.8 295.0 284.4 293.7 286.1 292.4 287.7 291.1 289.3 289.8 290.9 288.5 292.5 287.2 294.1 286.0 295.7 284.8 297.3 283.6 298.9 282.4 300.5 281.2 302.1 280.1 303.7 278.9 305.3 277.8 306.9 276.7 308.5 275.6 310.2 274.5 311.8 273.4 313.4 272.4 315.0 271.3 316.6 270.3 318.2 269.3 319.8 268.3 321.4 267.3 323.0 266.3 324.6 265.4 326.2 264.4 327.9 263.5 329.5 262.6 331.1 261.7 332.7 260.8 334.3 259.9 335.9 259.1 337.5 258.2 339.1 257.4 340.7 256.6 342.3 255.7 343.9 254.9 345.6 254.2 347.2 253.4 348.8 252.6 350.4 251.9 352.0 251.2 353.6 250.4 355.2 249.7 356.8 249.0 358.4 248.3 360.0 247.7 361.6 247.0 363.2 246.4 364.8 245.8 366.4 245.1 368.0 244.5 369.6 243.9 371.2 243.4 372.8 242.8 374.4 242.2 376.0 241.7 377.6 241.2 379.2 240.7 380.8 240.2 382.4 239.7 384.0 239.2 385.6 238.7 387.2 238.3 388.8 237.9 390.4 237.4 392.0 237.0 393.6 236.6 395.2 236.3 396.7 235.9 398.3 235.5 399.9 235.2 401.5 234.9 403.1 234.6 404.7 234.3 406.3 234.0 407.9 233.7 409.4 233.5 411.0 233.2 412.6 233.0 414.2 232.8 415.8 232.6 417.3 232.4 418.9 232.2 420.5 232.1 422.1 232.0 423.6 231.8 425.2 231.7 426.8 231.6 428.3 231.6 429.9 231.5 431.5 231.5 433.0 231.5 434.6 231.5 436.2 231.5 437.7 231.5 439.3 231.6 440.9 231.6 442.4 231.7 444.0 231.8 445.5 231.9 447.1 232.1 448.6 232.2 450.2 232.4 451.7 232.6 453.3 232.9 454.8 233.1 456.4 233.4 457.9 233.7 459.4 234.0 461.0 234.3 462.5 234.7 464.1 235.1 465.6 235.5 467.1 235.9 468.7 236.4 470.2 236.9 471.7 237.4 473.2 238.0 474.7 238.6 476.3 239.2 477.8 239.8 479.3 240.5 480.8 241.2 482.3 242.0 483.8 242.8 485.3 243.7 486.8 244.5 488.3 245.5 489.8 246.4 491.3 247.5 492.8 248.6 494.3 249.7 495.8 250.9 497.3 252.2 498.7 253.5 500.2 254.9 501.7 256.4 503.2 258.0 504.6 259.7 506.1 261.5 507.5 263.5 509.0 265.5 510.4 267.8 511.8 270.2 M539.3 285.9 540.8 285.3 542.3 284.6 543.7 284.0 545.2 283.4 546.7 282.7 548.1 282.1 549.6 281.4 551.1 280.8 552.5 280.2 554.0 279.5 555.5 278.9 557.0 278.3 558.4 277.6 559.9 277.0 561.3 276.4 562.8 275.7 564.3 275.1 565.7 274.5 567.2 273.8 568.7 273.2 570.1 272.6 M172.6 449.9 174.2 449.2 175.9 448.4 177.5 447.7 179.1 447.0 180.8 446.3 182.4 445.6 184.0 444.9 185.7 444.2 187.3 443.5 188.9 442.8 190.6 442.1 192.2 441.4 193.8 440.7 195.4 440.0 197.1 439.2 198.7 438.5 200.3 437.0 201.4 429.8 202.7 423.8 204.0 418.6 205.3 413.9 206.7 409.6 208.1 405.5 209.5 401.7 211.0 398.1 212.4 394.7 213.9 391.4 215.4 388.2 216.9 385.2 218.3 382.3 219.8 379.4 221.3 376.6 222.9 373.9 224.4 371.3 225.9 368.8 227.4 366.3 229.0 363.8 230.5 361.5 232.0 359.1 233.6 356.9 235.1 354.6 236.7 352.4 238.3 350.3 239.8 348.2 241.4 346.1 242.9 344.1 244.5 342.1 246.1 340.1 247.6 338.2 249.2 336.3 250.8 334.4 252.4 332.6 254.0 330.7 255.5 329.0 257.1 327.2 258.7 325.5 260.3 323.8 261.9 322.1 263.5 320.4 265.1 318.8 266.7 317.2 268.2 315.6 269.8 314.0 271.4 312.4 273.0 310.9 274.6 309.4 276.2 307.9 277.8 306.4 279.4 305.0 281.0 303.6 282.6 302.2 284.2 300.8 285.8 299.4 287.5 298.0 289.1 296.7 290.7 295.4 292.3 294.1 293.9 292.8 295.5 291.5 297.1 290.3 298.7 289.0 300.3 287.8 301.9 286.6 303.5 285.4 305.1 284.2 306.8 283.1 308.4 281.9 310.0 280.8 311.6 279.7 313.2 278.6 314.8 277.5 316.4 276.4 318.0 275.3 319.6 274.3 321.3 273.3 322.9 272.3 324.5 271.3 326.1 270.3 327.7 269.3 329.3 268.3 330.9 267.4 332.5 266.5 334.2 265.5 335.8 264.6 337.4 263.7 339.0 262.9 340.6 262.0 342.2 261.1 343.8 260.3 345.4 259.5 347.1 258.7 348.7 257.9 350.3 257.1 351.9 256.3 353.5 255.5 355.1 254.8 356.7 254.1 358.3 253.3 359.9 252.6 361.5 251.9 363.1 251.3 364.7 250.6 366.4 249.9 368.0 249.3 369.6 248.6 371.2 248.0 372.8 247.4 374.4 246.8 376.0 246.2 377.6 245.7 379.2 245.1 380.8 244.6 382.4 244.1 384.0 243.5 385.6 243.0 387.2 242.5 388.8 242.1 390.4 241.6 392.0 241.2 393.6 240.7 395.2 240.3 396.8 239.9 398.4 239.5 399.9 239.1 401.5 238.7 403.1 238.4 404.7 238.0 406.3 237.7 407.9 237.4 409.5 237.1 411.1 236.8 412.7 236.6 414.2 236.3 415.8 236.1 417.4 235.8 419.0 235.6 420.6 235.4 422.1 235.2 423.7 235.1 425.3 234.9 426.9 234.8 428.4 234.7 430.0 234.6 431.6 234.5 433.2 234.4 434.7 234.3 436.3 234.3 437.9 234.3 439.4 234.3 441.0 234.3 442.6 234.3 444.1 234.4 445.7 234.4 447.2 234.5 448.8 234.6 450.4 234.8 451.9 234.9 453.5 235.1 455.0 235.2 456.6 235.5 458.1 235.7 459.7 235.9 461.2 236.2 462.7 236.5 464.3 236.8 465.8 237.1 467.4 237.5 468.9 237.9 470.4 238.3 472.0 238.7 473.5 239.2 475.0 239.7 476.5 240.2 478.1 240.8 479.6 241.4 481.1 242.0 482.6 242.6 484.1 243.3 485.7 244.1 487.2 244.8 488.7 245.6 490.2 246.5 491.7 247.3 493.2 248.3 494.7 249.2 496.2 250.3 497.7 251.4 499.1 252.5 500.6 253.7 502.1 255.0 503.6 256.3 505.1 257.7 506.5 259.2 508.0 260.8 509.4 262.5 510.9 264.3 512.3 266.3 513.8 268.4 515.2 270.6 516.6 273.1 M544.1 288.7 545.6 288.1 547.1 287.4 548.5 286.8 550.0 286.2 551.5 285.5 553.0 284.9 554.4 284.2 555.9 283.6 557.4 283.0 558.9 282.3 560.3 281.7 561.8 281.1 563.3 280.4 564.7 279.8 566.2 279.1 567.7 278.5 569.1 277.9 570.6 277.2 572.1 276.6 573.5 276.0 575.0 275.3 M176.9 453.2 178.5 452.5 180.2 451.7 181.8 451.0 183.5 450.3 185.1 449.6 186.7 448.9 188.4 448.2 190.0 447.5 191.6 446.8 193.3 446.1 194.9 445.4 196.5 444.6 198.2 443.9 199.8 443.2 201.4 442.5 203.0 441.8 204.6 440.3 205.8 433.0 207.0 427.1 208.4 421.8 209.7 417.1 211.1 412.8 212.5 408.7 214.0 404.9 215.4 401.3 216.9 397.9 218.3 394.6 219.8 391.4 221.3 388.4 222.8 385.4 224.3 382.6 225.8 379.8 227.3 377.1 228.9 374.5 230.4 371.9 231.9 369.4 233.5 367.0 235.0 364.6 236.5 362.3 238.1 360.0 239.6 357.8 241.2 355.6 242.8 353.4 244.3 351.3 245.9 349.2 247.5 347.2 249.0 345.2 250.6 343.2 252.2 341.3 253.8 339.4 255.3 337.5 256.9 335.7 258.5 333.8 260.1 332.1 261.7 330.3 263.3 328.6 264.9 326.8 266.4 325.2 268.0 323.5 269.6 321.8 271.2 320.2 272.8 318.6 274.4 317.1 276.0 315.5 277.6 314.0 279.2 312.5 280.8 311.0 282.4 309.5 284.0 308.0 285.6 306.6 287.3 305.2 288.9 303.8 290.5 302.4 292.1 301.1 293.7 299.7 295.3 298.4 296.9 297.1 298.5 295.8 300.1 294.5 301.7 293.3 303.4 292.0 305.0 290.8 306.6 289.6 308.2 288.4 309.8 287.2 311.4 286.1 313.0 284.9 314.6 283.8 316.3 282.7 317.9 281.5 319.5 280.5 321.1 279.4 322.7 278.3 324.3 277.3 326.0 276.2 327.6 275.2 329.2 274.2 330.8 273.2 332.4 272.3 334.0 271.3 335.6 270.4 337.3 269.4 338.9 268.5 340.5 267.6 342.1 266.7 343.7 265.8 345.3 264.9 346.9 264.1 348.6 263.2 350.2 262.4 351.8 261.6 353.4 260.8 355.0 260.0 356.6 259.2 358.2 258.5 359.8 257.7 361.5 257.0 363.1 256.3 364.7 255.6 366.3 254.9 367.9 254.2 369.5 253.5 371.1 252.8 372.7 252.2 374.3 251.6 375.9 250.9 377.5 250.3 379.1 249.7 380.8 249.1 382.4 248.6 384.0 248.0 385.6 247.5 387.2 246.9 388.8 246.4 390.4 245.9 392.0 245.4 393.6 245.0 395.2 244.5 396.8 244.0 398.4 243.6 400.0 243.2 401.6 242.8 403.2 242.4 404.7 242.0 406.3 241.6 407.9 241.3 409.5 240.9 411.1 240.6 412.7 240.3 414.3 240.0 415.9 239.7 417.5 239.4 419.1 239.2 420.6 238.9 422.2 238.7 423.8 238.5 425.4 238.3 427.0 238.1 428.5 237.9 430.1 237.8 431.7 237.6 433.3 237.5 434.9 237.4 436.4 237.3 438.0 237.2 439.6 237.2 441.1 237.1 442.7 237.1 444.3 237.1 445.8 237.1 447.4 237.2 449.0 237.2 450.5 237.3 452.1 237.4 453.6 237.5 455.2 237.6 456.8 237.7 458.3 237.9 459.9 238.1 461.4 238.3 463.0 238.5 464.5 238.7 466.1 239.0 467.6 239.3 469.1 239.6 470.7 240.0 472.2 240.3 473.8 240.7 475.3 241.1 476.8 241.6 478.4 242.0 479.9 242.5 481.4 243.0 482.9 243.6 484.5 244.2 486.0 244.8 487.5 245.5 489.0 246.1 490.5 246.9 492.0 247.6 493.5 248.4 495.0 249.3 496.5 250.2 498.0 251.1 499.5 252.1 501.0 253.1 502.5 254.2 504.0 255.3 505.5 256.5 507.0 257.8 508.4 259.1 509.9 260.5 511.4 262.1 512.8 263.6 514.3 265.3 515.8 267.2 517.2 269.1 518.6 271.2 520.1 273.4 521.5 275.9 M549.0 291.5 550.4 290.9 551.9 290.3 553.4 289.6 554.9 289.0 556.3 288.3 557.8 287.7 559.3 287.1 560.8 286.4 562.2 285.8 563.7 285.1 565.2 284.5 566.7 283.9 568.1 283.2 569.6 282.6 571.1 281.9 572.5 281.3 574.0 280.7 575.5 280.0 576.9 279.4 578.4 278.8 579.9 278.1 M181.3 456.5 182.9 455.8 184.5 455.1 186.2 454.3 187.8 453.6 189.5 452.9 191.1 452.2 192.7 451.5 194.4 450.8 196.0 450.1 197.6 449.4 199.3 448.6 200.9 447.9 202.5 447.2 204.2 446.5 205.8 445.8 207.4 445.1 209.0 443.6 210.2 436.3 211.5 430.3 212.8 425.1 214.1 420.4 215.5 416.0 217.0 412.0 218.4 408.2 219.8 404.6 221.3 401.1 222.8 397.8 224.3 394.7 225.8 391.6 227.3 388.6 228.8 385.8 230.3 383.0 231.8 380.3 233.3 377.7 234.9 375.1 236.4 372.6 238.0 370.2 239.5 367.8 241.1 365.5 242.6 363.2 244.2 360.9 245.7 358.7 247.3 356.6 248.9 354.5 250.4 352.4 252.0 350.3 253.6 348.3 255.2 346.4 256.7 344.4 258.3 342.5 259.9 340.6 261.5 338.8 263.1 337.0 264.7 335.2 266.3 333.4 267.8 331.7 269.4 329.9 271.0 328.2 272.6 326.6 274.2 324.9 275.8 323.3 277.4 321.7 279.0 320.1 280.6 318.6 282.2 317.0 283.9 315.5 285.5 314.0 287.1 312.6 288.7 311.1 290.3 309.7 291.9 308.3 293.5 306.9 295.1 305.5 296.7 304.1 298.3 302.8 299.9 301.4 301.6 300.1 303.2 298.8 304.8 297.6 306.4 296.3 308.0 295.1 309.6 293.8 311.3 292.6 312.9 291.4 314.5 290.2 316.1 289.1 317.7 287.9 319.3 286.8 321.0 285.7 322.6 284.5 324.2 283.5 325.8 282.4 327.4 281.3 329.0 280.3 330.7 279.2 332.3 278.2 333.9 277.2 335.5 276.2 337.1 275.2 338.7 274.3 340.4 273.3 342.0 272.4 343.6 271.5 345.2 270.6 346.8 269.7 348.5 268.8 350.1 267.9 351.7 267.0 353.3 266.2 354.9 265.0 356.5 263.5 358.1 262.1 359.7 260.8 361.3 259.5 362.9 258.4 364.5 257.3 366.2 256.3 367.8 255.4 369.4 254.6 371.0 253.8 372.6 253.1 374.2 252.5 375.8 251.9 377.4 251.4 379.1 251.0 380.7 250.7 382.3 250.4 383.9 250.2 385.5 250.1 387.1 250.1 388.8 250.2 390.4 250.4 392.0 249.9 393.6 249.3 395.2 248.8 396.8 248.3 398.4 247.9 400.0 247.4 401.6 246.9 403.2 246.5 404.8 246.1 406.4 245.7 408.0 245.3 409.6 244.9 411.2 244.5 412.8 244.1 414.4 243.8 415.9 243.5 417.5 243.2 419.1 242.8 420.7 242.6 422.3 242.3 423.9 242.0 425.5 241.8 427.1 241.6 428.6 241.3 430.2 241.1 431.8 241.0 433.4 240.8 435.0 240.6 436.6 240.5 438.1 240.4 439.7 240.3 441.3 240.2 442.9 240.1 444.4 240.0 446.0 240.0 447.6 240.0 449.1 240.0 450.7 240.0 452.3 240.0 453.8 240.1 455.4 240.1 457.0 240.2 458.5 240.3 460.1 240.4 461.6 240.6 463.2 240.7 464.7 240.9 466.3 241.1 467.8 241.3 469.4 241.6 470.9 241.9 472.5 242.1 474.0 242.5 475.6 242.8 477.1 243.2 478.6 243.5 480.2 244.0 481.7 244.4 483.2 244.9 484.8 245.4 486.3 245.9 487.8 246.4 489.3 247.0 490.9 247.6 492.4 248.3 493.9 249.0 495.4 249.7 496.9 250.5 498.4 251.3 499.9 252.1 501.4 253.0 502.9 253.9 504.4 254.9 505.9 255.9 507.4 257.0 508.9 258.1 510.4 259.3 511.8 260.6 513.3 262.0 514.8 263.4 516.3 264.9 517.7 266.5 519.2 268.2 520.6 270.0 522.1 271.9 523.5 274.0 524.9 276.3 526.4 278.7 M553.8 294.4 555.3 293.7 556.8 293.1 558.3 292.4 559.7 291.8 561.2 291.2 562.7 290.5 564.2 289.9 565.6 289.2 567.1 288.6 568.6 287.9 570.1 287.3 571.5 286.7 573.0 286.0 574.5 285.4 575.9 284.7 577.4 284.1 578.9 283.5 580.4 282.8 581.8 282.2 583.3 281.5 584.8 280.9 M185.6 459.8 187.3 459.1 188.9 458.4 190.5 457.7 192.2 457.0 193.8 456.2 195.5 455.5 197.1 454.8 198.7 454.1 200.4 453.4 202.0 452.7 203.7 452.0 205.3 451.2 206.9 450.5 208.6 449.8 210.2 449.1 211.8 448.4 213.4 446.9 214.6 439.6 215.9 433.6 217.2 428.4 218.6 423.6 220.0 419.3 221.4 415.2 222.9 411.4 224.3 407.8 225.8 404.4 227.3 401.1 228.7 397.9 230.2 394.8 231.8 391.9 233.3 389.0 234.8 386.2 236.3 383.5 237.9 380.9 239.4 378.3 240.9 375.8 242.5 373.4 244.0 371.0 245.6 368.6 247.1 366.3 248.7 364.1 250.3 361.9 251.8 359.7 253.4 357.6 255.0 355.5 256.6 353.5 258.1 351.5 259.7 349.5 261.3 347.6 262.9 345.6 264.5 343.8 266.1 341.9 267.7 340.1 269.3 338.3 270.9 336.5 272.5 334.8 274.0 333.0 275.6 331.4 277.2 329.7 278.9 328.0 280.5 326.4 282.1 324.8 283.7 323.2 285.3 321.7 286.9 320.1 288.5 318.6 290.1 317.1 291.7 315.6 293.3 314.2 294.9 312.7 296.5 311.3 298.2 309.9 299.8 308.5 301.4 307.2 303.0 305.8 304.6 304.5 306.2 303.2 307.9 301.9 309.5 300.6 311.1 299.3 312.7 298.1 314.3 296.9 315.9 295.6 317.6 294.4 319.2 293.3 320.8 292.1 322.4 290.9 324.0 289.8 325.7 288.7 327.3 287.6 328.9 286.5 330.5 285.4 332.1 284.3 333.8 283.3 335.4 282.2 337.0 281.2 338.6 280.2 340.3 279.2 341.8 277.1 343.4 274.6 345.0 272.3 346.6 270.2 348.2 268.2 349.8 266.3 351.4 264.6 353.0 263.0 354.6 261.4 356.2 259.9 357.8 258.6 359.5 257.2 361.1 256.0 362.7 254.8 364.3 253.7 365.9 252.6 367.5 251.6 369.2 250.6 370.8 249.7 372.4 248.9 374.0 248.1 375.6 247.3 377.3 246.6 378.9 246.0 380.5 245.4 382.1 244.8 383.7 244.3 385.4 243.9 387.0 243.5 388.6 243.2 390.2 242.9 391.8 242.7 393.4 242.5 395.1 242.5 396.7 242.4 398.3 242.5 399.9 242.6 401.5 242.8 403.1 243.1 404.8 243.5 406.4 244.1 408.0 244.7 409.6 245.5 411.2 246.5 412.8 247.7 414.4 247.8 416.0 247.4 417.6 247.0 419.2 246.7 420.8 246.4 422.4 246.0 424.0 245.7 425.6 245.4 427.2 245.2 428.8 244.9 430.3 244.7 431.9 244.4 433.5 244.2 435.1 244.0 436.7 243.8 438.3 243.7 439.8 243.5 441.4 243.4 443.0 243.2 444.6 243.1 446.2 243.0 447.7 243.0 449.3 242.9 450.9 242.9 452.4 242.8 454.0 242.8 455.6 242.8 457.2 242.9 458.7 242.9 460.3 243.0 461.8 243.1 463.4 243.2 465.0 243.3 466.5 243.4 468.1 243.6 469.6 243.8 471.2 244.0 472.7 244.2 474.3 244.4 475.8 244.7 477.4 245.0 478.9 245.3 480.5 245.6 482.0 246.0 483.5 246.4 485.1 246.8 486.6 247.2 488.1 247.7 489.7 248.2 491.2 248.7 492.7 249.3 494.2 249.9 495.8 250.5 497.3 251.1 498.8 251.8 500.3 252.5 501.8 253.3 503.3 254.1 504.8 254.9 506.3 255.8 507.8 256.7 509.3 257.7 510.8 258.8 512.3 259.8 513.8 261.0 515.3 262.2 516.7 263.5 518.2 264.8 519.7 266.2 521.2 267.7 522.6 269.3 524.1 271.0 525.5 272.8 527.0 274.8 528.4 276.9 529.8 279.1 531.2 281.6 M558.7 297.2 560.2 296.6 561.7 295.9 563.1 295.3 564.6 294.6 566.1 294.0 567.6 293.3 569.1 292.7 570.5 292.1 572.0 291.4 573.5 290.8 575.0 290.1 576.4 289.5 577.9 288.8 579.4 288.2 580.9 287.6 582.3 286.9 583.8 286.3 585.3 285.6 586.7 285.0 588.2 284.4 589.7 283.7 M190.0 463.2 191.6 462.4 193.3 461.7 194.9 461.0 196.6 460.3 198.2 459.6 199.9 458.9 201.5 458.1 203.1 457.4 204.8 456.7 206.4 456.0 208.1 455.3 209.7 454.6 211.3 453.8 213.0 453.1 214.6 452.4 216.2 451.7 217.8 450.2 219.0 442.9 220.3 436.9 221.7 431.6 223.0 426.9 224.4 422.6 225.9 418.5 227.3 414.7 228.8 411.1 230.3 407.6 231.8 404.3 233.2 401.1 234.8 398.1 236.3 395.1 237.8 392.2 239.3 389.4 240.8 386.7 242.4 384.1 243.9 381.5 245.5 379.0 247.0 376.6 248.6 374.2 250.1 371.8 251.7 369.5 253.3 367.3 254.8 365.1 256.4 362.9 258.0 360.8 259.6 358.7 261.1 356.7 262.7 354.6 264.3 352.7 265.9 350.7 267.5 348.8 269.1 346.9 270.7 345.0 272.3 343.2 273.9 341.4 275.5 339.6 277.1 337.9 278.7 336.2 280.3 334.5 281.9 332.8 283.5 331.2 285.1 329.5 286.7 327.9 288.3 326.3 289.9 324.8 291.5 323.2 293.1 321.7 294.8 320.2 296.4 318.7 298.0 317.3 299.6 315.8 301.2 314.4 302.8 313.0 304.5 311.6 306.1 310.2 307.7 308.9 309.3 307.6 310.9 306.2 312.6 304.9 314.2 303.7 315.8 302.4 317.4 301.1 319.0 299.9 320.7 298.7 322.3 297.5 323.9 296.3 325.5 295.1 327.1 294.0 328.8 292.8 330.4 291.7 332.0 290.6 333.6 289.5 335.3 288.4 336.8 284.8 338.4 281.8 340.0 279.0 341.6 276.5 343.1 274.1 344.7 271.9 346.3 269.9 347.9 267.9 349.6 266.1 351.2 264.4 352.8 262.7 354.4 261.1 356.0 259.6 357.6 258.2 359.2 256.8 360.9 255.5 362.5 254.2 364.1 253.0 365.7 251.9 367.4 250.7 369.0 249.7 370.6 248.7 372.2 247.7 373.9 246.8 375.5 245.9 377.1 245.1 378.7 244.3 380.4 243.6 382.0 242.9 383.6 242.2 385.2 241.6 386.9 241.1 388.5 240.5 390.1 240.1 391.7 239.6 393.4 239.2 395.0 238.9 396.6 238.6 398.2 238.4 399.9 238.2 401.5 238.0 403.1 238.0 404.7 237.9 406.3 238.0 407.9 238.1 409.6 238.2 411.2 238.5 412.8 238.8 414.4 239.2 416.0 239.7 417.6 240.3 419.2 241.0 420.8 241.8 422.5 242.9 424.1 244.1 425.7 245.5 427.3 247.3 428.9 248.6 430.5 248.3 432.0 248.1 433.6 247.8 435.2 247.6 436.8 247.3 438.4 247.1 440.0 246.9 441.6 246.7 443.2 246.5 444.7 246.4 446.3 246.2 447.9 246.1 449.5 246.0 451.1 245.9 452.6 245.8 454.2 245.8 455.8 245.7 457.3 245.7 458.9 245.7 460.5 245.7 462.1 245.7 463.6 245.8 465.2 245.8 466.8 245.9 468.3 246.0 469.9 246.1 471.4 246.3 473.0 246.4 474.5 246.6 476.1 246.8 477.6 247.0 479.2 247.3 480.7 247.6 482.3 247.8 483.8 248.2 485.4 248.5 486.9 248.9 488.5 249.2 490.0 249.6 491.5 250.1 493.1 250.6 494.6 251.0 496.1 251.6 497.6 252.1 499.2 252.7 500.7 253.3 502.2 254.0 503.7 254.7 505.2 255.4 506.7 256.1 508.2 256.9 509.8 257.8 511.3 258.7 512.8 259.6 514.2 260.6 515.7 261.6 517.2 262.7 518.7 263.8 520.2 265.0 521.7 266.3 523.1 267.6 524.6 269.1 526.1 270.6 527.5 272.2 529.0 273.9 530.4 275.7 531.9 277.6 533.3 279.7 534.7 282.0 536.1 284.4 M563.6 300.1 565.1 299.4 566.6 298.8 568.0 298.1 569.5 297.5 571.0 296.8 572.5 296.2 574.0 295.5 575.4 294.9 576.9 294.3 578.4 293.6 579.9 293.0 581.4 292.3 582.8 291.7 584.3 291.0 585.8 290.4 587.3 289.7 588.7 289.1 590.2 288.5 591.7 287.8 593.1 287.2 594.6 286.5 M194.4 466.5 196.0 465.8 197.7 465.1 199.3 464.4 201.0 463.6 202.6 462.9 204.3 462.2 205.9 461.5 207.6 460.8 209.2 460.1 210.8 459.3 212.5 458.6 214.1 457.9 215.8 457.2 217.4 456.5 219.0 455.7 220.7 455.0 222.3 453.5 223.5 446.2 224.8 440.2 226.1 434.9 227.5 430.2 228.9 425.8 230.4 421.8 231.8 418.0 233.3 414.3 234.8 410.9 236.3 407.6 237.8 404.4 239.3 401.3 240.8 398.3 242.3 395.5 243.8 392.7 245.4 390.0 246.9 387.3 248.5 384.7 250.0 382.2 251.6 379.8 253.1 377.4 254.7 375.0 256.3 372.7 257.9 370.5 259.4 368.3 261.0 366.1 262.6 364.0 264.2 361.9 265.8 359.8 267.3 357.8 268.9 355.8 270.5 353.9 272.1 352.0 273.7 350.1 275.3 348.2 276.9 346.4 278.5 344.6 280.1 342.8 281.7 341.0 283.3 339.3 284.9 337.6 286.5 335.9 288.1 334.3 289.8 332.6 291.4 331.0 293.0 329.5 294.6 327.9 296.2 326.3 297.8 324.8 299.4 323.3 301.1 321.8 302.7 320.4 304.3 318.9 305.9 317.5 307.5 316.1 309.2 314.7 310.8 313.3 312.4 312.0 314.0 310.6 315.6 309.3 317.3 308.0 318.9 306.7 320.5 305.5 322.1 304.2 323.8 303.0 325.4 301.7 327.0 300.5 328.6 299.3 330.3 298.2 331.9 297.0 333.5 294.1 335.0 290.2 336.6 286.9 338.2 283.9 339.7 281.1 341.3 278.6 342.9 276.2 344.5 274.0 346.1 271.9 347.8 269.9 349.4 268.0 351.0 266.2 352.6 264.5 354.2 262.8 355.8 261.2 357.5 259.7 359.1 258.3 360.7 256.9 362.3 255.5 364.0 254.2 365.6 253.0 367.2 251.8 368.8 250.6 370.5 249.5 372.1 248.5 373.7 247.4 375.4 246.5 377.0 245.5 378.6 244.6 380.3 243.8 381.9 243.0 383.5 242.2 385.2 241.5 386.8 240.8 388.4 240.1 390.0 239.5 391.7 238.9 393.3 238.4 394.9 237.9 396.6 237.4 398.2 237.0 399.8 236.6 401.4 236.3 403.1 236.0 404.7 235.7 406.3 235.5 407.9 235.4 409.6 235.3 411.2 235.2 412.8 235.2 414.4 235.3 416.0 235.4 417.7 235.5 419.3 235.8 420.9 236.1 422.5 236.5 424.1 236.9 425.7 237.5 427.3 238.1 428.9 238.9 430.6 239.8 432.2 240.8 433.8 242.0 435.4 243.4 436.9 245.1 438.5 247.2 440.1 249.9 441.7 250.2 443.3 250.0 444.9 249.8 446.5 249.6 448.1 249.4 449.6 249.3 451.2 249.1 452.8 249.0 454.4 248.9 456.0 248.8 457.5 248.7 459.1 248.7 460.7 248.6 462.3 248.6 463.8 248.6 465.4 248.6 467.0 248.6 468.5 248.7 470.1 248.7 471.7 248.8 473.2 248.9 474.8 249.0 476.4 249.2 477.9 249.3 479.5 249.5 481.0 249.7 482.6 249.9 484.1 250.2 485.7 250.4 487.2 250.7 488.8 251.0 490.3 251.4 491.9 251.7 493.4 252.1 494.9 252.5 496.5 253.0 498.0 253.4 499.5 253.9 501.1 254.4 502.6 255.0 504.1 255.6 505.6 256.2 507.1 256.8 508.7 257.5 510.2 258.2 511.7 259.0 513.2 259.8 514.7 260.6 516.2 261.5 517.7 262.5 519.2 263.4 520.7 264.5 522.2 265.5 523.7 266.7 525.1 267.9 526.6 269.2 528.1 270.5 529.5 271.9 531.0 273.4 532.5 275.0 533.9 276.7 535.4 278.5 536.8 280.5 538.2 282.6 539.6 284.8 541.1 287.3 M568.5 302.9 570.0 302.3 571.5 301.6 573.0 301.0 574.4 300.3 575.9 299.7 577.4 299.0 578.9 298.4 580.4 297.7 581.9 297.1 583.3 296.5 584.8 295.8 586.3 295.2 587.8 294.5 589.2 293.9 590.7 293.2 592.2 292.6 593.7 291.9 595.1 291.3 596.6 290.6 598.1 290.0 599.6 289.4 M198.8 469.9 200.5 469.2 202.1 468.5 203.8 467.7 205.4 467.0 207.1 466.3 208.7 465.6 210.3 464.8 212.0 464.1 213.6 463.4 215.3 462.7 216.9 462.0 218.6 461.2 220.2 460.5 221.9 459.8 223.5 459.1 225.1 458.4 226.7 456.9 227.9 449.5 229.2 443.5 230.6 438.3 232.0 433.5 233.4 429.1 234.9 425.1 236.3 421.2 237.8 417.6 239.3 414.1 240.8 410.8 242.3 407.6 243.8 404.6 245.3 401.6 246.9 398.7 248.4 395.9 249.9 393.2 251.5 390.6 253.0 388.0 254.6 385.5 256.2 383.0 257.7 380.6 259.3 378.2 260.9 375.9 262.5 373.7 264.0 371.5 265.6 369.3 267.2 367.2 268.8 365.1 270.4 363.0 272.0 361.0 273.6 359.0 275.2 357.1 276.8 355.1 278.4 353.2 280.0 351.4 281.6 349.5 283.2 347.7 284.8 345.9 286.4 344.2 288.0 342.5 289.6 340.8 291.2 339.1 292.8 337.4 294.4 335.8 296.1 334.2 297.7 332.6 299.3 331.0 300.9 329.5 302.5 327.9 304.1 326.4 305.8 324.9 307.4 323.5 309.0 322.0 310.6 320.6 312.3 319.2 313.9 317.8 315.5 316.4 317.1 315.1 318.8 313.7 320.4 312.4 322.0 311.1 323.6 309.8 325.3 308.5 326.9 307.3 328.5 306.0 330.1 304.8 331.8 303.6 333.3 299.0 334.8 294.9 336.4 291.4 338.0 288.2 339.6 285.3 341.2 282.6 342.8 280.1 344.4 277.8 346.0 275.6 347.6 273.5 349.2 271.5 350.8 269.6 352.4 267.8 354.1 266.0 355.7 264.3 357.3 262.7 358.9 261.2 360.6 259.7 362.2 258.2 363.8 256.8 365.5 255.5 367.1 254.2 368.7 253.0 370.4 251.8 372.0 250.6 373.6 249.5 375.3 248.4 376.9 247.4 378.5 246.4 380.2 245.4 381.8 244.5 383.5 243.6 385.1 242.8 386.7 242.0 388.4 241.2 390.0 240.5 391.6 239.8 393.3 239.1 394.9 238.5 396.5 237.9 398.2 237.4 399.8 236.9 401.4 236.4 403.1 235.9 404.7 235.5 406.3 235.2 408.0 234.8 409.6 234.6 411.2 234.3 412.8 234.1 414.5 234.0 416.1 233.8 417.7 233.8 419.3 233.8 421.0 233.8 422.6 233.9 424.2 234.0 425.8 234.2 427.4 234.5 429.0 234.8 430.7 235.2 432.3 235.7 433.9 236.2 435.5 236.9 437.1 237.6 438.7 238.5 440.3 239.5 441.9 240.6 443.5 242.0 445.1 243.5 446.7 245.4 448.3 247.7 449.8 250.6 451.4 252.5 453.0 252.4 454.6 252.2 456.2 252.0 457.7 251.9 459.3 251.8 460.9 251.7 462.5 251.6 464.1 251.6 465.6 251.5 467.2 251.5 468.8 251.5 470.4 251.5 471.9 251.5 473.5 251.6 475.1 251.6 476.6 251.7 478.2 251.8 479.8 251.9 481.3 252.0 482.9 252.2 484.4 252.4 486.0 252.6 487.5 252.8 489.1 253.0 490.6 253.3 492.2 253.6 493.7 253.9 495.3 254.2 496.8 254.6 498.4 255.0 499.9 255.4 501.4 255.8 503.0 256.3 504.5 256.8 506.0 257.3 507.5 257.9 509.1 258.4 510.6 259.1 512.1 259.7 513.6 260.4 515.1 261.1 516.6 261.9 518.2 262.7 519.7 263.5 521.2 264.4 522.7 265.3 524.2 266.3 525.6 267.3 527.1 268.4 528.6 269.6 530.1 270.8 531.6 272.0 533.0 273.4 534.5 274.8 536.0 276.3 537.4 277.9 538.9 279.6 540.3 281.4 541.7 283.4 543.2 285.5 544.6 287.7 546.0 290.2 M573.4 305.8 574.9 305.2 576.4 304.5 577.9 303.9 579.4 303.2 580.9 302.6 582.4 301.9 583.8 301.3 585.3 300.6 586.8 300.0 588.3 299.3 589.8 298.7 591.2 298.0 592.7 297.4 594.2 296.7 595.7 296.1 597.2 295.4 598.6 294.8 600.1 294.1 601.6 293.5 603.1 292.8 604.5 292.2 M203.2 473.3 204.9 472.6 206.5 471.8 208.2 471.1 209.8 470.4 211.5 469.7 213.1 468.9 214.8 468.2 216.4 467.5 218.1 466.8 219.7 466.1 221.4 465.3 223.0 464.6 224.7 463.9 226.3 463.2 228.0 462.4 229.6 461.7 231.2 460.2 232.4 452.9 233.7 446.8 235.1 441.6 236.5 436.8 237.9 432.5 239.4 428.4 240.9 424.5 242.3 420.9 243.8 417.4 245.3 414.1 246.9 410.9 248.4 407.8 249.9 404.9 251.4 402.0 253.0 399.2 254.5 396.5 256.1 393.8 257.6 391.2 259.2 388.7 260.8 386.2 262.3 383.8 263.9 381.5 265.5 379.2 267.1 376.9 268.7 374.7 270.2 372.5 271.8 370.4 273.4 368.3 275.0 366.2 276.6 364.2 278.2 362.2 279.8 360.2 281.4 358.3 283.0 356.4 284.6 354.6 286.2 352.7 287.8 350.9 289.4 349.1 291.1 347.4 292.7 345.6 294.3 343.9 295.9 342.2 297.5 340.6 299.1 338.9 300.8 337.3 302.4 335.7 304.0 334.2 305.6 332.6 307.2 331.1 308.9 329.6 310.5 328.1 312.1 326.6 313.7 325.2 315.4 323.7 317.0 322.3 318.6 320.9 320.2 319.5 321.9 318.2 323.5 316.8 325.1 315.5 326.8 314.2 328.4 312.9 330.0 311.6 331.7 310.4 333.2 307.2 334.8 302.2 336.3 298.1 337.9 294.5 339.5 291.3 341.0 288.4 342.6 285.7 344.2 283.2 345.9 280.8 347.5 278.5 349.1 276.4 350.7 274.4 352.3 272.4 354.0 270.5 355.6 268.7 357.2 267.0 358.8 265.3 360.5 263.7 362.1 262.2 363.7 260.7 365.4 259.2 367.0 257.8 368.6 256.5 370.3 255.2 371.9 253.9 373.6 252.7 375.2 251.6 376.8 250.4 378.5 249.3 380.1 248.3 381.8 247.3 383.4 246.3 385.0 245.3 386.7 244.4 388.3 243.6 390.0 242.7 391.6 241.9 393.2 241.2 394.9 240.4 396.5 239.7 398.2 239.1 399.8 238.4 401.4 237.8 403.1 237.3 404.7 236.8 406.3 236.3 408.0 235.8 409.6 235.4 411.2 235.0 412.9 234.7 414.5 234.4 416.1 234.1 417.8 233.8 419.4 233.7 421.0 233.5 422.7 233.4 424.3 233.3 425.9 233.3 427.5 233.4 429.1 233.4 430.8 233.6 432.4 233.8 434.0 234.0 435.6 234.3 437.2 234.7 438.8 235.1 440.5 235.6 442.1 236.2 443.7 236.9 445.3 237.7 446.9 238.6 448.5 239.7 450.1 240.9 451.7 242.2 453.2 243.8 454.8 245.7 456.4 248.0 458.0 250.9 459.5 254.8 461.1 255.0 462.7 254.8 464.3 254.7 465.9 254.6 467.4 254.5 469.0 254.5 470.6 254.4 472.2 254.4 473.8 254.4 475.3 254.4 476.9 254.4 478.5 254.5 480.0 254.5 481.6 254.6 483.2 254.7 484.7 254.8 486.3 254.9 487.8 255.1 489.4 255.3 491.0 255.5 492.5 255.7 494.1 255.9 495.6 256.2 497.2 256.5 498.7 256.8 500.3 257.1 501.8 257.5 503.3 257.9 504.9 258.3 506.4 258.7 507.9 259.2 509.5 259.7 511.0 260.2 512.5 260.7 514.1 261.3 515.6 261.9 517.1 262.6 518.6 263.3 520.1 264.0 521.6 264.8 523.1 265.6 524.6 266.4 526.1 267.3 527.6 268.2 529.1 269.2 530.6 270.2 532.1 271.3 533.6 272.4 535.1 273.6 536.5 274.9 538.0 276.3 539.5 277.7 540.9 279.2 542.4 280.8 543.8 282.5 545.3 284.3 546.7 286.3 548.1 288.3 549.6 290.6 551.0 293.1 M578.4 308.7 579.9 308.0 581.4 307.4 582.9 306.7 584.4 306.1 585.8 305.4 587.3 304.8 588.8 304.1 590.3 303.5 591.8 302.8 593.3 302.2 594.7 301.5 596.2 300.9 597.7 300.2 599.2 299.6 600.7 298.9 602.1 298.3 603.6 297.6 605.1 297.0 606.6 296.3 608.1 295.7 609.5 295.0 M207.7 476.7 209.3 476.0 211.0 475.2 212.7 474.5 214.3 473.8 216.0 473.1 217.6 472.3 219.3 471.6 220.9 470.9 222.6 470.2 224.2 469.4 225.9 468.7 227.5 468.0 229.2 467.3 230.8 466.5 232.5 465.8 234.1 465.1 235.7 463.6 236.9 456.2 238.3 450.2 239.6 444.9 241.0 440.2 242.5 435.8 243.9 431.7 245.4 427.9 246.9 424.2 248.4 420.7 249.9 417.4 251.4 414.2 253.0 411.1 254.5 408.2 256.0 405.3 257.6 402.5 259.1 399.7 260.7 397.1 262.3 394.5 263.8 392.0 265.4 389.5 267.0 387.1 268.5 384.7 270.1 382.4 271.7 380.1 273.3 377.9 274.9 375.7 276.5 373.6 278.1 371.5 279.7 369.4 281.3 367.4 282.9 365.4 284.5 363.5 286.1 361.5 287.7 359.6 289.3 357.8 290.9 355.9 292.5 354.1 294.1 352.3 295.8 350.5 297.4 348.8 299.0 347.1 300.6 345.4 302.2 343.7 303.9 342.1 305.5 340.5 307.1 338.9 308.7 337.3 310.4 335.8 312.0 334.2 313.6 332.7 315.2 331.2 316.9 329.7 318.5 328.3 320.1 326.9 321.8 325.4 323.4 324.0 325.0 322.7 326.6 321.3 328.3 319.9 329.9 318.6 331.5 317.3 333.2 316.0 334.8 313.4 336.3 307.7 337.8 303.3 339.4 299.5 341.0 296.1 342.6 293.0 344.2 290.2 345.8 287.5 347.4 285.0 349.0 282.7 350.6 280.5 352.2 278.3 353.9 276.3 355.5 274.3 357.1 272.5 358.8 270.7 360.4 268.9 362.0 267.3 363.7 265.6 365.3 264.1 366.9 262.6 368.6 261.1 370.2 259.7 371.9 258.4 373.5 257.0 375.1 255.8 376.8 254.5 378.4 253.3 380.1 252.2 381.7 251.1 383.4 250.0 385.0 248.9 386.6 247.9 388.3 247.0 389.9 246.0 391.6 245.1 393.2 244.3 394.9 243.4 396.5 242.6 398.2 241.9 399.8 241.1 401.4 240.4 403.1 239.8 404.7 239.1 406.4 238.5 408.0 238.0 409.6 237.4 411.3 236.9 412.9 236.5 414.6 236.0 416.2 235.6 417.8 235.3 419.5 234.9 421.1 234.7 422.7 234.4 424.4 234.2 426.0 234.0 427.6 233.9 429.3 233.8 430.9 233.7 432.5 233.7 434.1 233.8 435.8 233.9 437.4 234.0 439.0 234.2 440.6 234.5 442.2 234.8 443.8 235.1 445.5 235.6 447.1 236.1 448.7 236.7 450.3 237.4 451.9 238.1 453.5 239.0 455.1 240.0 456.7 241.2 458.3 242.5 459.8 244.0 461.4 245.7 463.0 247.8 464.6 250.3 466.1 253.6 467.7 257.8 469.3 257.7 470.8 257.6 472.4 257.5 474.0 257.4 475.6 257.4 477.2 257.3 478.7 257.3 480.3 257.3 481.9 257.3 483.5 257.4 485.0 257.4 486.6 257.5 488.2 257.6 489.7 257.7 491.3 257.9 492.8 258.0 494.4 258.2 496.0 258.4 497.5 258.6 499.1 258.8 500.6 259.1 502.2 259.4 503.7 259.7 505.3 260.0 506.8 260.4 508.3 260.8 509.9 261.2 511.4 261.6 512.9 262.1 514.5 262.6 516.0 263.1 517.5 263.6 519.1 264.2 520.6 264.8 522.1 265.5 523.6 266.2 525.1 266.9 526.6 267.7 528.1 268.4 529.6 269.3 531.1 270.2 532.6 271.1 534.1 272.1 535.6 273.1 537.1 274.2 538.6 275.3 540.1 276.5 541.5 277.8 543.0 279.2 544.5 280.6 545.9 282.1 547.4 283.7 548.8 285.4 550.3 287.2 551.7 289.2 553.1 291.2 554.5 293.5 555.9 296.0 M583.4 311.6 584.9 310.9 586.4 310.3 587.8 309.6 589.3 309.0 590.8 308.3 592.3 307.7 593.8 307.0 595.3 306.4 596.8 305.7 598.3 305.1 599.7 304.4 601.2 303.8 602.7 303.1 604.2 302.5 605.7 301.8 607.2 301.2 608.6 300.5 610.1 299.9 611.6 299.2 613.1 298.6 614.6 297.9 M212.2 480.1 213.8 479.4 215.5 478.7 217.1 477.9 218.8 477.2 220.4 476.5 222.1 475.7 223.8 475.0 225.4 474.3 227.1 473.6 228.7 472.8 230.4 472.1 232.0 471.4 233.7 470.7 235.3 469.9 237.0 469.2 238.6 468.5 240.2 467.0 241.5 459.6 242.8 453.6 244.2 448.3 245.6 443.5 247.0 439.1 248.5 435.0 250.0 431.2 251.5 427.5 253.0 424.1 254.5 420.7 256.0 417.5 257.6 414.4 259.1 411.5 260.6 408.6 262.2 405.7 263.8 403.0 265.3 400.4 266.9 397.8 268.5 395.2 270.0 392.8 271.6 390.4 273.2 388.0 274.8 385.7 276.4 383.4 278.0 381.2 279.6 379.0 281.2 376.8 282.8 374.7 284.4 372.7 286.0 370.6 287.6 368.6 289.2 366.7 290.8 364.7 292.4 362.8 294.0 361.0 295.6 359.1 297.2 357.3 298.9 355.5 300.5 353.7 302.1 352.0 303.7 350.3 305.3 348.6 307.0 346.9 308.6 345.3 310.2 343.7 311.8 342.1 313.5 340.5 315.1 338.9 316.7 337.4 318.4 335.9 320.0 334.4 321.6 332.9 323.3 331.4 324.9 330.0 326.5 328.6 328.2 327.2 329.8 325.8 331.4 324.4 333.1 323.1 334.7 321.7 336.3 320.4 337.9 316.2 339.4 310.7 341.0 306.3 342.5 302.5 344.1 299.1 345.7 296.0 347.3 293.2 348.9 290.5 350.6 288.0 352.2 285.6 353.8 283.4 355.4 281.2 357.1 279.2 358.7 277.2 360.3 275.3 362.0 273.5 363.6 271.7 365.2 270.0 366.9 268.4 368.5 266.8 370.2 265.3 371.8 263.8 373.5 262.4 375.1 261.0 376.7 259.6 378.4 258.3 380.0 257.1 381.7 255.8 383.3 254.7 385.0 253.5 386.6 252.4 388.3 251.3 389.9 250.3 391.6 249.3 393.2 248.4 394.9 247.4 396.5 246.5 398.2 245.7 399.8 244.8 401.5 244.0 403.1 243.3 404.7 242.5 406.4 241.8 408.0 241.2 409.7 240.5 411.3 239.9 413.0 239.3 414.6 238.8 416.3 238.3 417.9 237.8 419.5 237.4 421.2 237.0 422.8 236.6 424.5 236.3 426.1 236.0 427.7 235.7 429.4 235.5 431.0 235.3 432.6 235.1 434.3 235.0 435.9 234.9 437.5 234.9 439.1 234.9 440.8 235.0 442.4 235.1 444.0 235.3 445.6 235.5 447.2 235.8 448.9 236.1 450.5 236.5 452.1 236.9 453.7 237.5 455.3 238.1 456.9 238.8 458.5 239.6 460.1 240.5 461.7 241.5 463.3 242.6 464.9 243.9 466.5 245.5 468.1 247.2 469.6 249.3 471.2 251.8 472.7 254.9 474.3 259.4 475.8 260.5 477.4 260.4 479.0 260.3 480.6 260.3 482.2 260.3 483.7 260.2 485.3 260.2 486.9 260.3 488.5 260.3 490.0 260.4 491.6 260.4 493.2 260.5 494.7 260.6 496.3 260.8 497.9 260.9 499.4 261.1 501.0 261.3 502.5 261.5 504.1 261.8 505.6 262.0 507.2 262.3 508.7 262.6 510.3 262.9 511.8 263.3 513.4 263.7 514.9 264.1 516.4 264.5 518.0 265.0 519.5 265.5 521.0 266.0 522.6 266.6 524.1 267.1 525.6 267.7 527.1 268.4 528.6 269.1 530.2 269.8 531.7 270.6 533.2 271.4 534.7 272.2 536.2 273.1 537.7 274.0 539.2 275.0 540.6 276.0 542.1 277.1 543.6 278.2 545.1 279.5 546.6 280.7 548.0 282.1 549.5 283.5 551.0 285.0 552.4 286.6 553.8 288.3 555.3 290.1 556.7 292.1 558.1 294.2 559.5 296.4 560.9 298.9 M588.4 314.5 589.9 313.9 591.4 313.2 592.8 312.5 594.3 311.9 595.8 311.2 597.3 310.6 598.8 309.9 600.3 309.3 601.8 308.6 603.3 308.0 604.8 307.3 606.2 306.6 607.7 306.0 609.2 305.3 610.7 304.7 612.2 304.0 613.7 303.4 615.1 302.7 616.6 302.1 618.1 301.4 619.6 300.8 M216.6 483.6 218.3 482.8 220.0 482.1 221.6 481.4 223.3 480.6 224.9 479.9 226.6 479.2 228.3 478.4 229.9 477.7 231.6 477.0 233.2 476.2 234.9 475.5 236.5 474.8 238.2 474.1 239.8 473.3 241.5 472.6 243.1 471.9 244.7 470.3 246.0 463.0 247.3 456.9 248.7 451.6 250.2 446.9 251.6 442.5 253.1 438.4 254.6 434.5 256.1 430.9 257.6 427.4 259.1 424.1 260.6 420.9 262.2 417.8 263.7 414.8 265.3 411.9 266.8 409.1 268.4 406.3 270.0 403.7 271.5 401.1 273.1 398.5 274.7 396.0 276.3 393.6 277.9 391.3 279.5 388.9 281.0 386.7 282.6 384.4 284.2 382.2 285.8 380.1 287.4 378.0 289.1 375.9 290.7 373.9 292.3 371.9 293.9 369.9 295.5 368.0 297.1 366.1 298.7 364.2 300.4 362.3 302.0 360.5 303.6 358.7 305.2 356.9 306.8 355.2 308.5 353.5 310.1 351.8 311.7 350.1 313.4 348.5 315.0 346.8 316.6 345.2 318.2 343.7 319.9 342.1 321.5 340.6 323.1 339.0 324.8 337.5 326.4 336.1 328.1 334.6 329.7 333.2 331.3 331.7 333.0 330.3 334.6 328.9 336.2 327.6 337.9 326.2 339.5 324.9 341.1 321.8 342.6 315.7 344.2 311.0 345.8 307.0 347.3 303.5 348.9 300.3 350.6 297.3 352.2 294.6 353.8 292.0 355.4 289.6 357.0 287.3 358.7 285.1 360.3 283.0 361.9 280.9 363.6 279.0 365.2 277.1 366.8 275.3 368.5 273.6 370.1 271.9 371.8 270.3 373.4 268.7 375.1 267.2 376.7 265.7 378.4 264.3 380.0 262.9 381.7 261.6 383.3 260.3 385.0 259.1 386.6 257.9 388.3 256.7 389.9 255.5 391.6 254.4 393.2 253.4 394.9 252.3 396.5 251.3 398.2 250.4 399.8 249.5 401.5 248.6 403.1 247.7 404.8 246.9 406.4 246.1 408.1 245.3 409.7 244.6 411.4 243.9 413.0 243.2 414.7 242.5 416.3 241.9 418.0 241.4 419.6 240.8 421.3 240.3 422.9 239.8 424.5 239.4 426.2 239.0 427.8 238.6 429.5 238.2 431.1 237.9 432.7 237.7 434.4 237.4 436.0 237.2 437.6 237.1 439.3 236.9 440.9 236.9 442.5 236.8 444.2 236.8 445.8 236.9 447.4 237.0 449.0 237.1 450.7 237.3 452.3 237.5 453.9 237.8 455.5 238.2 457.1 238.6 458.7 239.1 460.4 239.7 462.0 240.4 463.6 241.1 465.2 241.9 466.8 242.9 468.4 244.0 469.9 245.2 471.5 246.6 473.1 248.2 474.7 250.0 476.2 252.2 477.8 254.9 479.3 258.5 480.9 263.4 482.4 263.4 484.0 263.3 485.6 263.2 487.2 263.2 488.8 263.2 490.3 263.2 491.9 263.2 493.5 263.2 495.1 263.3 496.6 263.4 498.2 263.5 499.8 263.6 501.3 263.7 502.9 263.9 504.5 264.0 506.0 264.2 507.6 264.5 509.1 264.7 510.7 265.0 512.2 265.2 513.8 265.5 515.3 265.9 516.9 266.2 518.4 266.6 519.9 267.0 521.5 267.5 523.0 267.9 524.5 268.4 526.1 268.9 527.6 269.5 529.1 270.1 530.7 270.7 532.2 271.3 533.7 272.0 535.2 272.7 536.7 273.5 538.2 274.3 539.7 275.1 541.2 276.0 542.7 276.9 544.2 277.9 545.7 278.9 547.2 280.0 548.7 281.2 550.1 282.4 551.6 283.6 553.1 285.0 554.5 286.4 556.0 287.9 557.4 289.5 558.9 291.2 560.3 293.0 561.7 295.0 563.2 297.1 564.6 299.4 566.0 301.8 M593.4 317.4 594.9 316.8 596.4 316.1 597.9 315.5 599.4 314.8 600.9 314.1 602.3 313.5 603.8 312.8 605.3 312.2 606.8 311.5 608.3 310.9 609.8 310.2 611.3 309.5 612.8 308.9 614.3 308.2 615.7 307.6 617.2 306.9 618.7 306.3 620.2 305.6 621.7 305.0 623.2 304.3 624.6 303.7 M221.2 487.0 222.8 486.3 224.5 485.5 226.1 484.8 227.8 484.1 229.5 483.3 231.1 482.6 232.8 481.9 234.4 481.1 236.1 480.4 237.8 479.7 239.4 478.9 241.1 478.2 242.7 477.5 244.4 476.7 246.0 476.0 247.7 475.3 249.3 473.8 250.6 466.4 251.9 460.3 253.3 455.0 254.8 450.3 256.2 445.9 257.7 441.8 259.2 437.9 260.7 434.2 262.2 430.7 263.7 427.4 265.3 424.2 266.8 421.1 268.4 418.1 269.9 415.2 271.5 412.4 273.1 409.6 274.6 407.0 276.2 404.4 277.8 401.8 279.4 399.3 281.0 396.9 282.6 394.5 284.1 392.2 285.7 389.9 287.3 387.7 288.9 385.5 290.6 383.4 292.2 381.3 293.8 379.2 295.4 377.1 297.0 375.1 298.6 373.2 300.2 371.2 301.9 369.3 303.5 367.4 305.1 365.6 306.7 363.7 308.4 361.9 310.0 360.2 311.6 358.4 313.2 356.7 314.9 355.0 316.5 353.3 318.1 351.7 319.8 350.0 321.4 348.4 323.0 346.9 324.7 345.3 326.3 343.8 328.0 342.2 329.6 340.7 331.2 339.2 332.9 337.8 334.5 336.3 336.1 334.9 337.8 333.5 339.4 332.1 341.1 330.7 342.7 329.4 344.4 328.0 345.9 323.3 347.4 317.6 349.0 313.1 350.6 309.3 352.2 305.8 353.8 302.7 355.4 299.8 357.0 297.1 358.7 294.5 360.3 292.1 361.9 289.8 363.6 287.6 365.2 285.5 366.8 283.5 368.5 281.6 370.1 279.7 371.8 278.0 373.4 276.2 375.1 274.5 376.7 272.9 378.4 271.4 380.0 269.9 381.7 268.4 383.3 267.0 385.0 265.6 386.6 264.3 388.3 263.0 389.9 261.7 391.6 260.5 393.2 259.3 394.9 258.2 396.6 257.1 398.2 256.0 399.9 255.0 401.5 254.0 403.2 253.0 404.8 252.1 406.5 251.2 408.1 250.3 409.8 249.5 411.4 248.7 413.1 247.9 414.7 247.2 416.4 246.5 418.0 245.8 419.7 245.2 421.3 244.6 423.0 244.0 424.6 243.4 426.3 242.9 427.9 242.4 429.6 242.0 431.2 241.6 432.9 241.2 434.5 240.8 436.1 240.5 437.8 240.3 439.4 240.0 441.1 239.8 442.7 239.6 444.3 239.5 446.0 239.4 447.6 239.4 449.2 239.4 450.9 239.4 452.5 239.5 454.1 239.6 455.7 239.8 457.3 240.1 459.0 240.4 460.6 240.7 462.2 241.1 463.8 241.6 465.4 242.2 467.0 242.8 468.6 243.5 470.2 244.3 471.8 245.3 473.4 246.3 475.0 247.5 476.6 248.9 478.2 250.4 479.8 252.2 481.3 254.3 482.9 256.9 484.4 260.2 485.9 264.8 487.5 266.3 489.1 266.3 490.7 266.2 492.2 266.2 493.8 266.1 495.4 266.1 497.0 266.2 498.5 266.2 500.1 266.3 501.7 266.3 503.3 266.4 504.8 266.5 506.4 266.7 508.0 266.8 509.5 267.0 511.1 267.2 512.6 267.4 514.2 267.6 515.7 267.9 517.3 268.2 518.8 268.5 520.4 268.8 521.9 269.2 523.5 269.6 525.0 270.0 526.5 270.4 528.1 270.9 529.6 271.3 531.1 271.9 532.7 272.4 534.2 273.0 535.7 273.6 537.2 274.3 538.8 274.9 540.3 275.7 541.8 276.4 543.3 277.2 544.8 278.0 546.3 278.9 547.8 279.9 549.3 280.8 550.8 281.9 552.2 283.0 553.7 284.1 555.2 285.3 556.7 286.6 558.1 287.9 559.6 289.3 561.0 290.9 562.5 292.5 563.9 294.2 565.4 296.0 566.8 297.9 568.2 300.0 569.6 302.3 571.0 304.8 M598.4 320.4 599.9 319.7 601.4 319.1 602.9 318.4 604.4 317.7 605.9 317.1 607.4 316.4 608.9 315.8 610.4 315.1 611.9 314.4 613.4 313.8 614.8 313.1 616.3 312.5 617.8 311.8 619.3 311.1 620.8 310.5 622.3 309.8 623.8 309.2 625.3 308.5 626.7 307.9 628.2 307.2 629.7 306.6 M225.7 490.5 227.3 489.7 229.0 489.0 230.7 488.3 232.3 487.5 234.0 486.8 235.7 486.0 237.3 485.3 239.0 484.6 240.7 483.8 242.3 483.1 244.0 482.4 245.6 481.6 247.3 480.9 248.9 480.2 250.6 479.4 252.3 478.7 253.9 477.2 255.1 469.8 256.5 463.7 257.9 458.4 259.4 453.6 260.8 449.2 262.3 445.1 263.8 441.3 265.3 437.6 266.9 434.1 268.4 430.8 269.9 427.5 271.5 424.4 273.0 421.4 274.6 418.5 276.2 415.7 277.7 413.0 279.3 410.3 280.9 407.7 282.5 405.1 284.1 402.7 285.7 400.2 287.3 397.8 288.9 395.5 290.5 393.2 292.1 391.0 293.7 388.8 295.3 386.7 296.9 384.5 298.5 382.5 300.1 380.4 301.8 378.4 303.4 376.4 305.0 374.5 306.6 372.6 308.2 370.7 309.9 368.8 311.5 367.0 313.1 365.2 314.8 363.4 316.4 361.7 318.0 359.9 319.7 358.2 321.3 356.6 322.9 354.9 324.6 353.3 326.2 351.7 327.9 350.1 329.5 348.5 331.1 347.0 332.8 345.4 334.4 343.9 336.1 342.4 337.7 341.0 339.3 339.5 341.0 338.1 342.6 336.7 344.3 335.3 345.9 333.9 347.6 332.6 349.2 331.2 350.8 327.5 352.3 321.5 353.9 316.9 355.5 313.0 357.1 309.5 358.7 306.3 360.3 303.4 362.0 300.6 363.6 298.0 365.2 295.6 366.9 293.3 368.5 291.1 370.1 289.0 371.8 286.9 373.4 285.0 375.1 283.1 376.7 281.3 378.4 279.6 380.0 277.9 381.7 276.3 383.3 274.7 385.0 273.2 386.6 271.7 388.3 270.3 390.0 268.9 391.6 267.6 393.3 266.3 394.9 265.0 396.6 263.8 398.2 262.6 399.9 261.5 401.6 260.4 403.2 259.3 404.9 258.3 406.5 257.3 408.2 256.3 409.8 255.4 411.5 254.5 413.2 253.6 414.8 252.8 416.5 252.0 418.1 251.2 419.8 250.4 421.4 249.7 423.1 249.1 424.7 248.4 426.4 247.8 428.0 247.2 429.7 246.7 431.3 246.2 433.0 245.7 434.6 245.2 436.3 244.8 437.9 244.4 439.6 244.1 441.2 243.8 442.8 243.5 444.5 243.2 446.1 243.0 447.8 242.9 449.4 242.7 451.0 242.7 452.7 242.6 454.3 242.6 455.9 242.6 457.6 242.7 459.2 242.9 460.8 243.1 462.4 243.3 464.0 243.6 465.7 244.0 467.3 244.4 468.9 244.9 470.5 245.4 472.1 246.1 473.7 246.8 475.3 247.7 476.9 248.6 478.5 249.7 480.1 250.9 481.7 252.3 483.3 253.8 484.8 255.7 486.4 257.9 487.9 260.5 489.5 263.9 491.0 269.0 492.6 269.3 494.1 269.2 495.7 269.2 497.3 269.1 498.9 269.1 500.5 269.1 502.0 269.1 503.6 269.2 505.2 269.2 506.8 269.3 508.3 269.4 509.9 269.5 511.5 269.6 513.0 269.8 514.6 270.0 516.2 270.1 517.7 270.4 519.3 270.6 520.8 270.9 522.4 271.1 523.9 271.4 525.5 271.8 527.0 272.1 528.6 272.5 530.1 272.9 531.6 273.3 533.2 273.8 534.7 274.3 536.2 274.8 537.8 275.4 539.3 275.9 540.8 276.5 542.3 277.2 543.8 277.9 545.4 278.6 546.9 279.4 548.4 280.2 549.9 281.0 551.4 281.9 552.9 282.8 554.4 283.8 555.8 284.8 557.3 285.9 558.8 287.0 560.3 288.2 561.7 289.5 563.2 290.9 564.7 292.3 566.1 293.8 567.6 295.4 569.0 297.1 570.4 298.9 571.9 300.9 573.3 303.0 574.7 305.2 576.1 307.7 M603.5 323.3 605.0 322.7 606.5 322.0 608.0 321.3 609.5 320.7 611.0 320.0 612.5 319.3 614.0 318.7 615.4 318.0 616.9 317.4 618.4 316.7 619.9 316.0 621.4 315.4 622.9 314.7 624.4 314.1 625.9 313.4 627.4 312.7 628.9 312.1 630.4 311.4 631.8 310.8 633.3 310.1 634.8 309.5 M230.2 493.9 231.9 493.2 233.6 492.5 235.2 491.7 236.9 491.0 238.6 490.2 240.2 489.5 241.9 488.8 243.6 488.0 245.2 487.3 246.9 486.6 248.5 485.8 250.2 485.1 251.9 484.4 253.5 483.6 255.2 482.9 256.8 482.1 258.5 480.6 259.8 473.2 261.1 467.1 262.5 461.8 264.0 457.0 265.5 452.6 267.0 448.5 268.5 444.7 270.0 441.0 271.5 437.5 273.1 434.1 274.6 430.9 276.2 427.8 277.7 424.8 279.3 421.9 280.9 419.1 282.4 416.3 284.0 413.6 285.6 411.0 287.2 408.5 288.8 406.0 290.4 403.5 292.0 401.2 293.6 398.8 295.2 396.5 296.8 394.3 298.4 392.1 300.0 389.9 301.7 387.8 303.3 385.7 304.9 383.7 306.5 381.7 308.1 379.7 309.8 377.7 311.4 375.8 313.0 373.9 314.7 372.1 316.3 370.2 317.9 368.4 319.6 366.7 321.2 364.9 322.8 363.2 324.5 361.5 326.1 359.8 327.8 358.1 329.4 356.5 331.0 354.9 332.7 353.3 334.3 351.7 336.0 350.2 337.6 348.6 339.3 347.1 340.9 345.6 342.6 344.2 344.2 342.7 345.9 341.3 347.5 339.9 349.1 338.5 350.8 337.1 352.4 335.7 354.1 334.4 355.7 333.1 357.3 327.7 358.9 322.5 360.5 318.2 362.1 314.4 363.7 311.1 365.3 308.0 366.9 305.2 368.6 302.5 370.2 300.0 371.8 297.7 373.5 295.4 375.1 293.3 376.8 291.2 378.4 289.2 380.1 287.3 381.7 285.5 383.4 283.7 385.0 282.0 386.7 280.4 388.3 278.8 390.0 277.2 391.7 275.7 393.3 274.3 395.0 272.9 396.6 271.6 398.3 270.2 400.0 269.0 401.6 267.7 403.3 266.6 404.9 265.4 406.6 264.3 408.3 263.2 409.9 262.2 411.6 261.2 413.2 260.2 414.9 259.2 416.6 258.3 418.2 257.5 419.9 256.6 421.5 255.8 423.2 255.0 424.8 254.3 426.5 253.6 428.1 252.9 429.8 252.3 431.5 251.6 433.1 251.1 434.8 250.5 436.4 250.0 438.1 249.5 439.7 249.1 441.4 248.7 443.0 248.3 444.6 247.9 446.3 247.6 447.9 247.3 449.6 247.1 451.2 246.9 452.9 246.8 454.5 246.6 456.1 246.6 457.8 246.5 459.4 246.5 461.0 246.6 462.6 246.7 464.3 246.8 465.9 247.0 467.5 247.3 469.1 247.6 470.8 248.0 472.4 248.4 474.0 249.0 475.6 249.6 477.2 250.2 478.8 251.0 480.4 251.9 482.0 252.9 483.6 254.0 485.2 255.3 486.8 256.8 488.3 258.5 489.9 260.5 491.4 262.9 493.0 266.0 494.5 270.2 496.1 272.4 497.6 272.3 499.2 272.2 500.8 272.2 502.4 272.1 504.0 272.1 505.6 272.1 507.1 272.1 508.7 272.1 510.3 272.2 511.9 272.3 513.4 272.4 515.0 272.5 516.6 272.6 518.1 272.8 519.7 272.9 521.3 273.1 522.8 273.3 524.4 273.6 525.9 273.8 527.5 274.1 529.0 274.4 530.6 274.7 532.1 275.1 533.7 275.5 535.2 275.9 536.7 276.3 538.3 276.8 539.8 277.2 541.3 277.8 542.9 278.3 544.4 278.9 545.9 279.5 547.4 280.2 549.0 280.8 550.5 281.6 552.0 282.3 553.5 283.1 555.0 283.9 556.5 284.8 558.0 285.8 559.5 286.7 561.0 287.8 562.4 288.9 563.9 290.0 565.4 291.2 566.9 292.5 568.3 293.8 569.8 295.2 571.2 296.8 572.7 298.4 574.1 300.1 575.5 301.9 577.0 303.8 578.4 305.9 579.8 308.2 581.2 310.7 M608.5 326.3 610.0 325.6 611.5 325.0 613.0 324.3 614.5 323.6 616.0 323.0 617.5 322.3 619.0 321.6 620.5 321.0 622.0 320.3 623.5 319.6 625.0 319.0 626.5 318.3 628.0 317.7 629.5 317.0 631.0 316.3 632.5 315.7 634.0 315.0 635.5 314.4 637.0 313.7 638.4 313.0 639.9 312.4 M234.8 497.4 236.5 496.7 238.1 495.9 239.8 495.2 241.5 494.5 243.1 493.7 244.8 493.0 246.5 492.2 248.1 491.5 249.8 490.8 251.5 490.0 253.1 489.3 254.8 488.6 256.5 487.8 258.1 487.1 259.8 486.3 261.4 485.6 263.1 484.1 264.4 476.7 265.8 470.6 267.2 465.3 268.6 460.5 270.1 456.1 271.6 451.9 273.1 448.1 274.7 444.4 276.2 440.9 277.7 437.5 279.3 434.3 280.9 431.2 282.4 428.2 284.0 425.2 285.6 422.4 287.2 419.7 288.7 417.0 290.3 414.4 291.9 411.8 293.5 409.3 295.1 406.9 296.7 404.5 298.4 402.2 300.0 399.9 301.6 397.6 303.2 395.4 304.8 393.3 306.4 391.1 308.1 389.0 309.7 387.0 311.3 385.0 312.9 383.0 314.6 381.0 316.2 379.1 317.8 377.2 319.5 375.4 321.1 373.5 322.8 371.7 324.4 369.9 326.0 368.2 327.7 366.4 329.3 364.7 331.0 363.0 332.6 361.4 334.2 359.7 335.9 358.1 337.5 356.5 339.2 355.0 340.8 353.4 342.5 351.9 344.1 350.4 345.8 348.9 347.4 347.4 349.1 345.9 350.7 344.5 352.4 343.1 354.0 341.7 355.7 340.3 357.3 338.9 359.0 337.6 360.7 336.3 362.3 334.9 363.9 330.7 365.5 325.4 367.1 321.1 368.7 317.4 370.3 314.1 371.9 311.0 373.6 308.2 375.2 305.6 376.8 303.1 378.5 300.7 380.1 298.5 381.8 296.3 383.4 294.3 385.1 292.3 386.7 290.5 388.4 288.6 390.1 286.9 391.7 285.2 393.4 283.6 395.0 282.0 396.7 280.5 398.4 279.0 400.0 277.6 401.7 276.2 403.3 274.9 405.0 273.6 406.7 272.4 408.3 271.2 410.0 270.0 411.7 268.9 413.3 267.8 415.0 266.7 416.6 265.7 418.3 264.7 420.0 263.8 421.6 262.9 423.3 262.0 424.9 261.1 426.6 260.3 428.3 259.5 429.9 258.8 431.6 258.1 433.2 257.4 434.9 256.7 436.5 256.1 438.2 255.6 439.8 255.0 441.5 254.5 443.2 254.0 444.8 253.6 446.4 253.2 448.1 252.8 449.7 252.4 451.4 252.1 453.0 251.9 454.7 251.7 456.3 251.5 458.0 251.3 459.6 251.2 461.2 251.2 462.9 251.1 464.5 251.2 466.1 251.2 467.7 251.4 469.4 251.6 471.0 251.8 472.6 252.1 474.2 252.4 475.9 252.9 477.5 253.4 479.1 253.9 480.7 254.6 482.3 255.3 483.9 256.2 485.5 257.2 487.1 258.3 488.7 259.5 490.3 261.0 491.8 262.7 493.4 264.7 494.9 267.1 496.5 270.1 498.0 274.3 499.6 275.5 501.2 275.4 502.8 275.3 504.3 275.2 505.9 275.2 507.5 275.1 509.1 275.1 510.7 275.1 512.3 275.1 513.8 275.1 515.4 275.2 517.0 275.3 518.6 275.4 520.1 275.5 521.7 275.6 523.3 275.7 524.8 275.9 526.4 276.1 527.9 276.3 529.5 276.5 531.1 276.8 532.6 277.1 534.2 277.4 535.7 277.7 537.3 278.1 538.8 278.4 540.3 278.8 541.9 279.3 543.4 279.7 544.9 280.2 546.5 280.7 548.0 281.3 549.5 281.9 551.0 282.5 552.6 283.1 554.1 283.8 555.6 284.5 557.1 285.3 558.6 286.1 560.1 286.9 561.6 287.8 563.1 288.7 564.6 289.7 566.1 290.7 567.6 291.8 569.0 293.0 570.5 294.2 572.0 295.4 573.4 296.8 574.9 298.2 576.3 299.7 577.8 301.3 579.2 303.0 580.7 304.9 582.1 306.8 583.5 308.9 584.9 311.2 586.3 313.7 M613.6 329.3 615.1 328.6 616.7 327.9 618.2 327.3 619.7 326.6 621.2 325.9 622.7 325.3 624.2 324.6 625.6 323.9 627.1 323.3 628.6 322.6 630.1 321.9 631.6 321.3 633.1 320.6 634.6 319.9 636.1 319.3 637.6 318.6 639.1 318.0 640.6 317.3 642.1 316.6 643.6 316.0 645.1 315.3 M239.4 500.9 241.1 500.2 242.7 499.5 244.4 498.7 246.1 498.0 247.7 497.2 249.4 496.5 251.1 495.7 252.8 495.0 254.4 494.3 256.1 493.5 257.8 492.8 259.4 492.0 261.1 491.3 262.7 490.6 264.4 489.8 266.1 489.1 267.7 487.5 269.0 480.1 270.4 474.0 271.8 468.7 273.3 463.9 274.8 459.5 276.3 455.4 277.8 451.5 279.4 447.8 280.9 444.3 282.4 440.9 284.0 437.7 285.6 434.6 287.1 431.5 288.7 428.6 290.3 425.8 291.9 423.0 293.5 420.3 295.1 417.7 296.7 415.2 298.3 412.7 299.9 410.2 301.5 407.8 303.1 405.5 304.7 403.2 306.4 401.0 308.0 398.7 309.6 396.6 311.2 394.5 312.9 392.4 314.5 390.3 316.1 388.3 317.8 386.3 319.4 384.3 321.0 382.4 322.7 380.5 324.3 378.6 325.9 376.8 327.6 375.0 329.2 373.2 330.9 371.4 332.5 369.7 334.2 368.0 335.8 366.3 337.5 364.6 339.1 363.0 340.8 361.4 342.4 359.8 344.1 358.2 345.7 356.6 347.4 355.1 349.0 353.6 350.7 352.1 352.3 350.6 354.0 349.2 355.6 347.7 357.3 346.3 359.0 344.9 360.6 343.5 362.3 342.2 363.9 340.8 365.6 339.5 367.2 338.2 368.9 336.9 370.5 335.6 372.1 330.5 373.7 325.8 375.3 321.9 377.0 318.4 378.6 315.3 380.2 312.4 381.9 309.7 383.5 307.2 385.2 304.8 386.8 302.5 388.5 300.4 390.1 298.3 391.8 296.4 393.4 294.5 395.1 292.7 396.8 290.9 398.4 289.2 400.1 287.6 401.8 286.1 403.4 284.6 405.1 283.1 406.7 281.7 408.4 280.3 410.1 279.0 411.7 277.7 413.4 276.5 415.1 275.3 416.7 274.2 418.4 273.1 420.1 272.0 421.7 271.0 423.4 270.0 425.0 269.0 426.7 268.1 428.4 267.2 430.0 266.3 431.7 265.5 433.4 264.7 435.0 264.0 436.7 263.3 438.3 262.6 440.0 261.9 441.6 261.3 443.3 260.7 445.0 260.2 446.6 259.7 448.3 259.2 449.9 258.8 451.6 258.4 453.2 258.0 454.9 257.7 456.5 257.4 458.1 257.1 459.8 256.9 461.4 256.8 463.1 256.7 464.7 256.6 466.3 256.5 468.0 256.5 469.6 256.6 471.2 256.7 472.9 256.9 474.5 257.1 476.1 257.4 477.7 257.8 479.3 258.2 481.0 258.7 482.6 259.2 484.2 259.9 485.8 260.7 487.4 261.5 489.0 262.5 490.6 263.7 492.2 265.0 493.7 266.5 495.3 268.3 496.9 270.4 498.4 273.1 500.0 276.5 501.5 278.8 503.1 278.6 504.7 278.5 506.3 278.4 507.9 278.3 509.5 278.2 511.1 278.2 512.6 278.1 514.2 278.1 515.8 278.1 517.4 278.1 519.0 278.1 520.5 278.2 522.1 278.3 523.7 278.4 525.3 278.5 526.8 278.6 528.4 278.7 530.0 278.9 531.5 279.1 533.1 279.3 534.6 279.5 536.2 279.8 537.8 280.1 539.3 280.4 540.9 280.7 542.4 281.1 543.9 281.4 545.5 281.8 547.0 282.3 548.6 282.7 550.1 283.2 551.6 283.7 553.2 284.3 554.7 284.8 556.2 285.5 557.7 286.1 559.2 286.8 560.7 287.5 562.3 288.3 563.8 289.1 565.3 289.9 566.8 290.8 568.3 291.7 569.7 292.7 571.2 293.7 572.7 294.8 574.2 295.9 575.7 297.2 577.1 298.4 578.6 299.8 580.0 301.2 581.5 302.7 582.9 304.3 584.4 306.0 585.8 307.8 587.2 309.8 588.6 311.9 590.0 314.2 591.4 316.6 M618.8 332.2 620.3 331.6 621.8 330.9 623.3 330.2 624.8 329.6 626.3 328.9 627.8 328.2 629.3 327.6 630.8 326.9 632.3 326.2 633.8 325.6 635.3 324.9 636.8 324.2 638.3 323.6 639.8 322.9 641.3 322.2 642.8 321.6 644.3 320.9 645.7 320.2 647.2 319.6 648.7 318.9 650.2 318.2 M244.0 504.5 245.7 503.7 247.3 503.0 249.0 502.2 250.7 501.5 252.4 500.7 254.0 500.0 255.7 499.2 257.4 498.5 259.1 497.8 260.7 497.0 262.4 496.3 264.1 495.5 265.7 494.8 267.4 494.0 269.1 493.3 270.7 492.6 272.3 491.0 273.7 483.6 275.1 477.5 276.5 472.2 278.0 467.4 279.5 462.9 281.0 458.8 282.5 454.9 284.1 451.2 285.6 447.7 287.2 444.3 288.7 441.1 290.3 438.0 291.9 434.9 293.5 432.0 295.1 429.2 296.7 426.4 298.3 423.7 299.9 421.1 301.5 418.5 303.1 416.0 304.7 413.6 306.3 411.2 307.9 408.9 309.5 406.6 311.2 404.3 312.8 402.1 314.4 399.9 316.1 397.8 317.7 395.7 319.3 393.6 321.0 391.6 322.6 389.6 324.2 387.7 325.9 385.7 327.5 383.8 329.2 381.9 330.8 380.1 332.5 378.3 334.1 376.5 335.7 374.7 337.4 373.0 339.0 371.3 340.7 369.6 342.4 367.9 344.0 366.3 345.7 364.6 347.3 363.0 349.0 361.5 350.6 359.9 352.3 358.4 353.9 356.8 355.6 355.3 357.2 353.9 358.9 352.4 360.6 351.0 362.2 349.5 363.9 348.1 365.5 346.7 367.2 345.4 368.9 344.0 370.5 342.7 372.2 341.4 373.8 340.1 375.5 338.8 377.2 337.5 378.8 336.3 380.5 333.0 382.1 328.4 383.7 324.5 385.3 321.1 387.0 318.0 388.6 315.2 390.2 312.5 391.9 310.1 393.6 307.7 395.2 305.5 396.9 303.4 398.5 301.4 400.2 299.5 401.8 297.7 403.5 295.9 405.2 294.2 406.8 292.6 408.5 291.0 410.2 289.5 411.8 288.0 413.5 286.6 415.2 285.3 416.8 284.0 418.5 282.7 420.2 281.5 421.8 280.3 423.5 279.2 425.2 278.1 426.8 277.0 428.5 276.0 430.2 275.0 431.8 274.1 433.5 273.2 435.1 272.3 436.8 271.5 438.5 270.7 440.1 269.9 441.8 269.2 443.4 268.5 445.1 267.9 446.8 267.3 448.4 266.7 450.1 266.2 451.7 265.7 453.4 265.2 455.0 264.8 456.7 264.4 458.3 264.0 460.0 263.7 461.6 263.5 463.3 263.2 464.9 263.1 466.5 262.9 468.2 262.8 469.8 262.8 471.5 262.8 473.1 262.9 474.7 263.0 476.3 263.1 478.0 263.4 479.6 263.7 481.2 264.0 482.8 264.5 484.4 265.0 486.1 265.6 487.7 266.3 489.3 267.1 490.9 268.1 492.5 269.2 494.1 270.4 495.6 271.9 497.2 273.6 498.8 275.7 500.3 278.3 501.9 281.8 503.5 282.1 505.1 282.0 506.7 281.8 508.3 281.7 509.8 281.5 511.4 281.4 513.0 281.3 514.6 281.3 516.2 281.2 517.8 281.2 519.4 281.1 521.0 281.1 522.5 281.1 524.1 281.2 525.7 281.2 527.3 281.3 528.9 281.4 530.4 281.5 532.0 281.6 533.6 281.7 535.1 281.9 536.7 282.1 538.3 282.3 539.8 282.5 541.4 282.8 542.9 283.1 544.5 283.4 546.0 283.7 547.6 284.1 549.1 284.4 550.7 284.8 552.2 285.3 553.7 285.7 555.3 286.2 556.8 286.7 558.3 287.3 559.9 287.8 561.4 288.5 562.9 289.1 564.4 289.8 565.9 290.5 567.4 291.3 568.9 292.0 570.4 292.9 571.9 293.8 573.4 294.7 574.9 295.7 576.4 296.7 577.9 297.8 579.4 298.9 580.8 300.1 582.3 301.4 583.7 302.8 585.2 304.2 586.6 305.7 588.1 307.3 589.5 309.0 590.9 310.8 592.4 312.8 593.8 314.9 595.2 317.2 596.5 319.6 M623.9 335.2 625.4 334.6 626.9 333.9 628.4 333.2 629.9 332.6 631.4 331.9 632.9 331.2 634.4 330.5 635.9 329.9 637.4 329.2 638.9 328.5 640.4 327.9 641.9 327.2 643.4 326.5 644.9 325.9 646.4 325.2 647.9 324.5 649.4 323.9 650.9 323.2 652.4 322.5 653.9 321.9 655.4 321.2 M248.6 508.0 250.3 507.3 252.0 506.5 253.7 505.8 255.3 505.0 257.0 504.3 258.7 503.5 260.4 502.8 262.0 502.0 263.7 501.3 265.4 500.5 267.0 499.8 268.7 499.0 270.4 498.3 272.1 497.5 273.7 496.8 275.4 496.1 277.0 494.5 278.4 487.1 279.8 481.0 281.2 475.6 282.7 470.8 284.2 466.4 285.7 462.2 287.3 458.4 288.8 454.7 290.4 451.1 291.9 447.8 293.5 444.5 295.1 441.4 296.7 438.4 298.2 435.4 299.8 432.6 301.4 429.8 303.0 427.1 304.7 424.5 306.3 421.9 307.9 419.4 309.5 417.0 311.1 414.6 312.7 412.2 314.4 409.9 316.0 407.7 317.6 405.4 319.3 403.3 320.9 401.1 322.5 399.0 324.2 397.0 325.8 394.9 327.5 392.9 329.1 391.0 330.7 389.0 332.4 387.1 334.0 385.3 335.7 383.4 337.3 381.6 339.0 379.8 340.6 378.0 342.3 376.3 343.9 374.6 345.6 372.9 347.3 371.2 348.9 369.6 350.6 367.9 352.2 366.3 353.9 364.7 355.5 363.2 357.2 361.6 358.9 360.1 360.5 358.6 362.2 357.1 363.9 355.7 365.5 354.2 367.2 352.8 368.8 351.4 370.5 350.0 372.2 348.6 373.8 347.3 375.5 345.9 377.2 344.6 378.8 343.3 380.5 342.0 382.1 340.7 383.8 339.5 385.5 338.2 387.1 337.0 388.8 335.8 390.4 333.5 392.1 329.3 393.7 325.6 395.4 322.4 397.0 319.5 398.7 316.8 400.3 314.3 402.0 312.0 403.6 309.8 405.3 307.7 406.9 305.7 408.6 303.8 410.3 302.0 411.9 300.2 413.6 298.6 415.3 297.0 416.9 295.4 418.6 294.0 420.3 292.5 421.9 291.2 423.6 289.9 425.3 288.6 426.9 287.4 428.6 286.2 430.3 285.1 431.9 284.0 433.6 282.9 435.3 281.9 436.9 281.0 438.6 280.1 440.3 279.2 441.9 278.3 443.6 277.5 445.2 276.8 446.9 276.1 448.6 275.4 450.2 274.7 451.9 274.1 453.5 273.6 455.2 273.0 456.8 272.5 458.5 272.1 460.1 271.7 461.8 271.3 463.4 271.0 465.1 270.7 466.7 270.5 468.4 270.3 470.0 270.2 471.7 270.1 473.3 270.1 474.9 270.1 476.6 270.1 478.2 270.3 479.8 270.5 481.5 270.7 483.1 271.1 484.7 271.5 486.3 272.0 487.9 272.6 489.5 273.3 491.1 274.1 492.7 275.1 494.3 276.2 495.9 277.5 497.5 279.0 499.1 280.9 500.7 283.2 502.2 286.0 503.8 285.8 505.4 285.6 507.0 285.4 508.6 285.2 510.2 285.0 511.8 284.8 513.4 284.7 515.0 284.6 516.6 284.5 518.2 284.4 519.8 284.3 521.4 284.2 523.0 284.2 524.6 284.2 526.1 284.2 527.7 284.2 529.3 284.2 530.9 284.2 532.5 284.3 534.0 284.4 535.6 284.5 537.2 284.6 538.8 284.8 540.3 284.9 541.9 285.1 543.4 285.3 545.0 285.6 546.6 285.8 548.1 286.1 549.7 286.4 551.2 286.7 552.8 287.1 554.3 287.4 555.9 287.8 557.4 288.3 558.9 288.7 560.5 289.2 562.0 289.7 563.5 290.3 565.0 290.9 566.6 291.5 568.1 292.1 569.6 292.8 571.1 293.5 572.6 294.3 574.1 295.1 575.6 295.9 577.1 296.8 578.6 297.7 580.1 298.7 581.6 299.7 583.1 300.8 584.5 301.9 586.0 303.1 587.5 304.4 588.9 305.8 590.4 307.2 591.8 308.7 593.3 310.3 594.7 312.0 596.1 313.8 597.5 315.8 598.9 317.9 600.3 320.2 601.7 322.7 M629.1 338.2 630.6 337.6 632.1 336.9 633.6 336.2 635.1 335.6 636.6 334.9 638.1 334.2 639.6 333.5 641.1 332.9 642.6 332.2 644.1 331.5 645.6 330.9 647.1 330.2 648.6 329.5 650.1 328.8 651.6 328.2 653.1 327.5 654.6 326.8 656.1 326.2 657.6 325.5 659.1 324.8 660.6 324.2 M253.3 511.6 254.9 510.8 256.6 510.0 258.3 509.3 260.0 508.5 261.7 507.8 263.3 507.0 265.0 506.3 266.7 505.5 268.4 504.8 270.0 504.1 271.7 503.3 273.4 502.6 275.1 501.8 276.7 501.1 278.4 500.3 280.1 499.6 281.7 498.0 283.1 490.6 284.5 484.5 285.9 479.1 287.4 474.3 288.9 469.9 290.5 465.7 292.0 461.8 293.6 458.1 295.1 454.6 296.7 451.2 298.3 448.0 299.9 444.8 301.4 441.8 303.0 438.9 304.6 436.0 306.2 433.2 307.9 430.5 309.5 427.9 311.1 425.3 312.7 422.8 314.3 420.4 316.0 418.0 317.6 415.6 319.2 413.3 320.8 411.0 322.5 408.8 324.1 406.6 325.8 404.5 327.4 402.4 329.0 400.3 330.7 398.3 332.3 396.3 334.0 394.3 335.6 392.4 337.3 390.5 338.9 388.6 340.6 386.7 342.2 384.9 343.9 383.1 345.6 381.4 347.2 379.6 348.9 377.9 350.5 376.2 352.2 374.5 353.8 372.9 355.5 371.2 357.2 369.6 358.8 368.0 360.5 366.5 362.2 364.9 363.8 363.4 365.5 361.9 367.2 360.4 368.8 358.9 370.5 357.5 372.1 356.1 373.8 354.6 375.5 353.3 377.1 351.9 378.8 350.5 380.5 349.2 382.1 347.8 383.8 346.5 385.5 345.2 387.1 344.0 388.8 342.7 390.5 341.5 392.1 340.2 393.8 339.0 395.5 337.8 397.1 336.7 398.8 335.5 400.5 334.3 402.1 333.0 403.8 329.3 405.4 326.0 407.1 323.1 408.7 320.4 410.4 318.0 412.1 315.7 413.7 313.5 415.4 311.5 417.1 309.6 418.7 307.7 420.4 306.0 422.1 304.3 423.7 302.7 425.4 301.2 427.1 299.7 428.7 298.3 430.4 297.0 432.1 295.7 433.7 294.5 435.4 293.3 437.1 292.1 438.7 291.1 440.4 290.0 442.1 289.0 443.7 288.1 445.4 287.2 447.0 286.3 448.7 285.5 450.4 284.8 452.0 284.0 453.7 283.3 455.3 282.7 457.0 282.1 458.7 281.6 460.3 281.0 462.0 280.6 463.6 280.2 465.3 279.8 466.9 279.5 468.6 279.2 470.2 279.0 471.9 278.8 473.5 278.7 475.1 278.6 476.8 278.6 478.4 278.6 480.0 278.8 481.7 278.9 483.3 279.2 484.9 279.6 486.5 280.0 488.2 280.5 489.8 281.2 491.4 281.9 493.0 282.8 494.6 283.9 496.2 285.2 497.8 286.7 499.3 288.6 500.9 290.2 502.5 289.9 504.2 289.6 505.8 289.4 507.4 289.1 509.0 288.9 510.6 288.6 512.2 288.4 513.8 288.2 515.4 288.1 517.0 287.9 518.6 287.8 520.2 287.6 521.8 287.5 523.4 287.4 525.0 287.3 526.6 287.3 528.2 287.2 529.8 287.2 531.3 287.2 532.9 287.2 534.5 287.2 536.1 287.3 537.7 287.3 539.2 287.4 540.8 287.5 542.4 287.7 544.0 287.8 545.5 288.0 547.1 288.2 548.7 288.4 550.2 288.6 551.8 288.8 553.3 289.1 554.9 289.4 556.4 289.7 558.0 290.1 559.5 290.5 561.1 290.9 562.6 291.3 564.1 291.8 565.7 292.2 567.2 292.8 568.7 293.3 570.3 293.9 571.8 294.5 573.3 295.1 574.8 295.8 576.3 296.5 577.8 297.3 579.3 298.1 580.8 298.9 582.3 299.8 583.8 300.7 585.3 301.7 586.8 302.7 588.3 303.8 589.8 305.0 591.2 306.2 592.7 307.4 594.1 308.8 595.6 310.2 597.0 311.7 598.5 313.3 599.9 315.0 601.3 316.9 602.7 318.8 604.1 320.9 605.5 323.2 606.9 325.7 M634.2 341.3 635.7 340.6 637.3 339.9 638.8 339.2 640.3 338.6 641.8 337.9 643.3 337.2 644.8 336.5 646.3 335.9 647.8 335.2 649.3 334.5 650.8 333.9 652.3 333.2 653.8 332.5 655.3 331.8 656.8 331.2 658.3 330.5 659.8 329.8 661.3 329.2 662.8 328.5 664.3 327.8 665.8 327.1 M257.9 515.1 259.6 514.4 261.3 513.6 263.0 512.9 264.7 512.1 266.3 511.4 268.0 510.6 269.7 509.8 271.4 509.1 273.1 508.3 274.7 507.6 276.4 506.8 278.1 506.1 279.8 505.3 281.4 504.6 283.1 503.8 284.8 503.1 286.4 501.5 287.8 494.1 289.2 488.0 290.7 482.6 292.2 477.8 293.7 473.3 295.2 469.2 296.8 465.3 298.3 461.6 299.9 458.1 301.5 454.7 303.1 451.4 304.7 448.3 306.3 445.2 307.9 442.3 309.5 439.4 311.1 436.7 312.7 434.0 314.3 431.3 315.9 428.7 317.5 426.2 319.2 423.8 320.8 421.4 322.4 419.0 324.1 416.7 325.7 414.4 327.4 412.2 329.0 410.0 330.6 407.9 332.3 405.8 333.9 403.7 335.6 401.7 337.2 399.7 338.9 397.7 340.5 395.7 342.2 393.8 343.9 391.9 345.5 390.1 347.2 388.3 348.8 386.5 350.5 384.7 352.1 382.9 353.8 381.2 355.5 379.5 357.1 377.8 358.8 376.2 360.5 374.5 362.1 372.9 363.8 371.3 365.5 369.8 367.1 368.2 368.8 366.7 370.5 365.2 372.1 363.7 373.8 362.2 375.5 360.8 377.1 359.3 378.8 357.9 380.5 356.5 382.2 355.1 383.8 353.8 385.5 352.4 387.2 351.1 388.8 349.8 390.5 348.5 392.2 347.2 393.8 346.0 395.5 344.7 397.2 343.5 398.8 342.3 400.5 341.1 402.2 339.9 403.9 338.7 405.5 337.6 407.2 336.4 408.9 335.3 410.5 334.2 412.2 333.1 413.9 332.0 415.5 331.0 417.2 329.5 418.9 326.6 420.5 324.0 422.2 321.6 423.8 319.4 425.5 317.4 427.2 315.4 428.8 313.6 430.5 311.9 432.2 310.2 433.9 308.7 435.5 307.2 437.2 305.8 438.9 304.5 440.5 303.2 442.2 302.0 443.9 300.8 445.5 299.7 447.2 298.7 448.8 297.7 450.5 296.8 452.2 295.9 453.8 295.0 455.5 294.3 457.2 293.5 458.8 292.9 460.5 292.2 462.1 291.6 463.8 291.1 465.4 290.6 467.1 290.2 468.7 289.8 470.4 289.5 472.0 289.3 473.7 289.1 475.3 288.9 477.0 288.8 478.6 288.8 480.2 288.9 481.9 289.1 483.5 289.3 485.1 289.6 486.7 290.0 488.4 290.6 490.0 291.2 491.6 292.1 493.2 293.1 494.8 294.3 496.4 295.4 498.0 295.0 499.6 294.7 501.3 294.3 502.9 294.0 504.5 293.6 506.1 293.3 507.7 293.0 509.4 292.7 511.0 292.4 512.6 292.2 514.2 292.0 515.8 291.7 517.4 291.5 519.0 291.3 520.6 291.1 522.2 291.0 523.8 290.8 525.4 290.7 527.0 290.6 528.6 290.5 530.2 290.4 531.8 290.3 533.4 290.3 535.0 290.3 536.6 290.3 538.2 290.3 539.7 290.3 541.3 290.3 542.9 290.4 544.5 290.5 546.0 290.6 547.6 290.7 549.2 290.9 550.8 291.0 552.3 291.2 553.9 291.4 555.5 291.6 557.0 291.9 558.6 292.2 560.1 292.5 561.7 292.8 563.2 293.1 564.8 293.5 566.3 293.9 567.8 294.3 569.4 294.8 570.9 295.3 572.5 295.8 574.0 296.3 575.5 296.9 577.0 297.5 578.5 298.2 580.1 298.8 581.6 299.6 583.1 300.3 584.6 301.1 586.1 301.9 587.6 302.8 589.1 303.8 590.6 304.7 592.0 305.8 593.5 306.8 595.0 308.0 596.5 309.2 597.9 310.5 599.4 311.8 600.8 313.2 602.3 314.8 603.7 316.4 605.1 318.1 606.5 319.9 608.0 321.9 609.4 324.0 610.7 326.2 612.1 328.7 M639.4 344.3 641.0 343.6 642.5 342.9 644.0 342.3 645.5 341.6 647.0 340.9 648.5 340.2 650.0 339.6 651.5 338.9 653.0 338.2 654.5 337.5 656.0 336.9 657.5 336.2 659.0 335.5 660.6 334.8 662.1 334.2 663.6 333.5 665.1 332.8 666.6 332.2 668.1 331.5 669.6 330.8 671.1 330.1 M262.6 518.7 264.3 517.9 266.0 517.2 267.7 516.4 269.4 515.7 271.0 514.9 272.7 514.2 274.4 513.4 276.1 512.7 277.8 511.9 279.4 511.2 281.1 510.4 282.8 509.6 284.5 508.9 286.2 508.1 287.8 507.4 289.5 506.6 291.1 505.1 292.5 497.6 294.0 491.5 295.4 486.1 296.9 481.3 298.5 476.8 300.0 472.7 301.6 468.8 303.1 465.1 304.7 461.5 306.3 458.1 307.9 454.9 309.5 451.7 311.1 448.7 312.7 445.7 314.3 442.9 315.9 440.1 317.5 437.4 319.2 434.8 320.8 432.2 322.4 429.7 324.0 427.2 325.7 424.8 327.3 422.4 329.0 420.1 330.6 417.8 332.2 415.6 333.9 413.4 335.5 411.3 337.2 409.2 338.8 407.1 340.5 405.0 342.2 403.0 343.8 401.1 345.5 399.1 347.1 397.2 348.8 395.3 350.5 393.5 352.1 391.6 353.8 389.8 355.4 388.0 357.1 386.3 358.8 384.6 360.4 382.8 362.1 381.2 363.8 379.5 365.4 377.9 367.1 376.3 368.8 374.7 370.5 373.1 372.1 371.5 373.8 370.0 375.5 368.5 377.1 367.0 378.8 365.5 380.5 364.1 382.2 362.6 383.8 361.2 385.5 359.8 387.2 358.4 388.8 357.1 390.5 355.7 392.2 354.4 393.9 353.1 395.5 351.8 397.2 350.5 398.9 349.2 400.6 348.0 402.2 346.7 403.9 345.5 405.6 344.3 407.3 343.1 408.9 342.0 410.6 340.8 412.3 339.7 413.9 338.5 415.6 337.4 417.3 336.3 419.0 335.3 420.6 334.2 422.3 333.1 424.0 332.1 425.6 331.1 427.3 330.1 429.0 329.1 430.6 328.1 432.3 327.1 434.0 326.2 435.6 325.2 437.3 324.3 439.0 322.7 440.6 320.8 442.3 319.1 444.0 317.6 445.6 316.1 447.3 314.7 449.0 313.4 450.6 312.1 452.3 311.0 454.0 309.9 455.6 308.9 457.3 308.0 458.9 307.1 460.6 306.3 462.3 305.5 463.9 304.9 465.6 304.3 467.2 303.7 468.9 303.2 470.5 302.8 472.2 302.5 473.8 302.2 475.5 302.0 477.1 301.9 478.7 301.9 480.4 302.0 482.0 302.2 483.6 302.5 485.3 302.9 486.9 302.7 488.5 302.1 490.2 301.6 491.8 301.2 493.5 300.7 495.1 300.2 496.7 299.8 498.3 299.4 500.0 298.9 501.6 298.5 503.2 298.1 504.9 297.8 506.5 297.4 508.1 297.1 509.7 296.7 511.3 296.4 513.0 296.1 514.6 295.8 516.2 295.5 517.8 295.3 519.4 295.0 521.0 294.8 522.6 294.6 524.2 294.4 525.9 294.2 527.5 294.1 529.1 293.9 530.7 293.8 532.3 293.7 533.9 293.6 535.5 293.5 537.0 293.4 538.6 293.4 540.2 293.3 541.8 293.3 543.4 293.3 545.0 293.4 546.6 293.4 548.1 293.5 549.7 293.5 551.3 293.6 552.9 293.8 554.4 293.9 556.0 294.1 557.6 294.3 559.1 294.5 560.7 294.7 562.3 294.9 563.8 295.2 565.4 295.5 566.9 295.8 568.5 296.2 570.0 296.6 571.6 297.0 573.1 297.4 574.6 297.8 576.2 298.3 577.7 298.8 579.2 299.4 580.8 300.0 582.3 300.6 583.8 301.2 585.3 301.9 586.8 302.6 588.3 303.4 589.8 304.1 591.3 305.0 592.8 305.9 594.3 306.8 595.8 307.8 597.3 308.8 598.8 309.9 600.2 311.0 601.7 312.2 603.2 313.5 604.6 314.9 606.1 316.3 607.5 317.8 608.9 319.4 610.4 321.1 611.8 323.0 613.2 324.9 614.6 327.0 616.0 329.3 617.3 331.8 M644.7 347.3 646.2 346.7 647.7 346.0 649.2 345.3 650.7 344.6 652.2 343.9 653.7 343.3 655.2 342.6 656.8 341.9 658.3 341.2 659.8 340.6 661.3 339.9 662.8 339.2 664.3 338.5 665.8 337.9 667.3 337.2 668.8 336.5 670.3 335.8 671.8 335.2 673.3 334.5 674.8 333.8 676.3 333.1 M267.3 522.3 269.0 521.5 270.7 520.8 272.4 520.0 274.1 519.3 275.8 518.5 277.4 517.8 279.1 517.0 280.8 516.2 282.5 515.5 284.2 514.7 285.9 514.0 287.5 513.2 289.2 512.5 290.9 511.7 292.6 511.0 294.3 510.2 295.9 508.6 297.3 501.2 298.7 495.0 300.2 489.7 301.7 484.8 303.3 480.4 304.8 476.2 306.4 472.3 308.0 468.6 309.5 465.0 311.1 461.6 312.7 458.4 314.3 455.2 315.9 452.2 317.5 449.2 319.2 446.4 320.8 443.6 322.4 440.9 324.0 438.2 325.7 435.6 327.3 433.1 328.9 430.6 330.6 428.2 332.2 425.9 333.9 423.5 335.5 421.3 337.2 419.0 338.8 416.8 340.5 414.7 342.1 412.6 343.8 410.5 345.4 408.4 347.1 406.4 348.8 404.4 350.4 402.5 352.1 400.6 353.8 398.7 355.4 396.8 357.1 395.0 358.8 393.2 360.4 391.4 362.1 389.6 363.8 387.9 365.4 386.2 367.1 384.5 368.8 382.9 370.4 381.2 372.1 379.6 373.8 378.0 375.5 376.4 377.1 374.9 378.8 373.3 380.5 371.8 382.2 370.3 383.8 368.8 385.5 367.4 387.2 365.9 388.9 364.5 390.5 363.1 392.2 361.7 393.9 360.4 395.6 359.0 397.3 357.7 398.9 356.4 400.6 355.1 402.3 353.8 404.0 352.5 405.6 351.3 407.3 350.0 409.0 348.8 410.7 347.6 412.3 346.4 414.0 345.2 415.7 344.1 417.4 342.9 419.0 341.8 420.7 340.7 422.4 339.6 424.1 338.5 425.7 337.4 427.4 336.4 429.1 335.3 430.8 334.3 432.4 333.3 434.1 332.3 435.8 331.3 437.4 330.3 439.1 329.4 440.8 328.4 442.4 327.5 444.1 326.6 445.8 325.7 447.4 324.8 449.1 323.9 450.8 323.1 452.4 322.2 454.1 321.4 455.8 320.5 457.4 319.7 459.1 318.9 460.8 318.2 462.4 317.4 464.1 316.6 465.7 315.9 467.4 315.2 469.0 314.4 470.7 313.7 472.3 313.0 474.0 312.4 475.7 311.7 477.3 311.1 479.0 310.4 480.6 309.8 482.3 309.2 483.9 308.6 485.5 308.0 487.2 307.4 488.8 306.9 490.5 306.3 492.1 305.8 493.8 305.3 495.4 304.8 497.0 304.3 498.7 303.8 500.3 303.4 501.9 302.9 503.6 302.5 505.2 302.1 506.8 301.7 508.5 301.3 510.1 300.9 511.7 300.5 513.3 300.2 515.0 299.8 516.6 299.5 518.2 299.2 519.8 298.9 521.4 298.7 523.1 298.4 524.7 298.1 526.3 297.9 527.9 297.7 529.5 297.5 531.1 297.3 532.7 297.2 534.3 297.0 535.9 296.9 537.5 296.8 539.1 296.7 540.7 296.6 542.3 296.5 543.9 296.5 545.5 296.4 547.1 296.4 548.7 296.4 550.3 296.4 551.8 296.5 553.4 296.5 555.0 296.6 556.6 296.7 558.2 296.8 559.7 297.0 561.3 297.1 562.9 297.3 564.4 297.5 566.0 297.8 567.5 298.0 569.1 298.3 570.7 298.6 572.2 298.9 573.8 299.3 575.3 299.6 576.9 300.0 578.4 300.4 579.9 300.9 581.5 301.4 583.0 301.9 584.5 302.4 586.1 303.0 587.6 303.6 589.1 304.3 590.6 304.9 592.1 305.7 593.6 306.4 595.1 307.2 596.6 308.0 598.1 308.9 599.6 309.9 601.1 310.8 602.6 311.9 604.1 312.9 605.5 314.1 607.0 315.3 608.5 316.6 609.9 317.9 611.4 319.3 612.8 320.9 614.2 322.5 615.6 324.2 617.1 326.0 618.5 328.0 619.8 330.1 621.2 332.4 622.6 334.8 M649.9 350.4 651.4 349.7 652.9 349.0 654.5 348.4 656.0 347.7 657.5 347.0 659.0 346.3 660.5 345.6 662.0 345.0 663.5 344.3 665.0 343.6 666.5 342.9 668.1 342.2 669.6 341.6 671.1 340.9 672.6 340.2 674.1 339.5 675.6 338.9 677.1 338.2 678.6 337.5 680.1 336.8 681.6 336.2 M272.0 525.9 273.7 525.2 275.4 524.4 277.1 523.6 278.8 522.9 280.5 522.1 282.2 521.4 283.9 520.6 285.6 519.8 287.2 519.1 288.9 518.3 290.6 517.6 292.3 516.8 294.0 516.0 295.7 515.3 297.3 514.5 299.0 513.8 300.7 512.2 302.1 504.7 303.5 498.6 305.0 493.2 306.6 488.4 308.1 483.9 309.6 479.7 311.2 475.8 312.8 472.1 314.4 468.5 316.0 465.1 317.6 461.9 319.2 458.7 320.8 455.7 322.4 452.7 324.0 449.8 325.7 447.0 327.3 444.3 328.9 441.7 330.6 439.1 332.2 436.6 333.9 434.1 335.5 431.7 337.1 429.3 338.8 427.0 340.4 424.7 342.1 422.5 343.8 420.3 345.4 418.1 347.1 416.0 348.7 413.9 350.4 411.9 352.1 409.8 353.7 407.9 355.4 405.9 357.1 404.0 358.7 402.1 360.4 400.2 362.1 398.4 363.7 396.6 365.4 394.8 367.1 393.0 368.8 391.3 370.4 389.6 372.1 387.9 373.8 386.2 375.5 384.6 377.1 382.9 378.8 381.3 380.5 379.8 382.2 378.2 383.9 376.7 385.5 375.1 387.2 373.6 388.9 372.2 390.6 370.7 392.3 369.3 393.9 367.8 395.6 366.4 397.3 365.0 399.0 363.7 400.7 362.3 402.3 361.0 404.0 359.7 405.7 358.4 407.4 357.1 409.1 355.8 410.7 354.5 412.4 353.3 414.1 352.1 415.8 350.9 417.5 349.7 419.1 348.5 420.8 347.3 422.5 346.2 424.2 345.1 425.8 343.9 427.5 342.8 429.2 341.8 430.9 340.7 432.6 339.6 434.2 338.6 435.9 337.5 437.6 336.5 439.2 335.5 440.9 334.5 442.6 333.6 444.3 332.6 445.9 331.7 447.6 330.7 449.3 329.8 451.0 328.9 452.6 328.0 454.3 327.1 456.0 326.3 457.6 325.4 459.3 324.6 461.0 323.8 462.6 322.9 464.3 322.1 465.9 321.4 467.6 320.6 469.3 319.8 470.9 319.1 472.6 318.3 474.2 317.6 475.9 316.9 477.6 316.2 479.2 315.6 480.9 314.9 482.5 314.2 484.2 313.6 485.8 313.0 487.5 312.4 489.1 311.8 490.8 311.2 492.4 310.6 494.1 310.0 495.7 309.5 497.4 309.0 499.0 308.4 500.6 307.9 502.3 307.5 503.9 307.0 505.6 306.5 507.2 306.1 508.8 305.6 510.5 305.2 512.1 304.8 513.7 304.4 515.4 304.0 517.0 303.7 518.6 303.3 520.2 303.0 521.9 302.7 523.5 302.3 525.1 302.1 526.7 301.8 528.3 301.5 529.9 301.3 531.6 301.0 533.2 300.8 534.8 300.6 536.4 300.4 538.0 300.3 539.6 300.1 541.2 300.0 542.8 299.9 544.4 299.8 546.0 299.7 547.6 299.6 549.2 299.6 550.8 299.5 552.4 299.5 554.0 299.5 555.6 299.5 557.1 299.6 558.7 299.6 560.3 299.7 561.9 299.8 563.4 299.9 565.0 300.1 566.6 300.2 568.2 300.4 569.7 300.6 571.3 300.8 572.9 301.1 574.4 301.4 576.0 301.7 577.5 302.0 579.1 302.3 580.6 302.7 582.2 303.1 583.7 303.5 585.2 304.0 586.8 304.5 588.3 305.0 589.8 305.5 591.4 306.1 592.9 306.7 594.4 307.3 595.9 308.0 597.4 308.7 598.9 309.5 600.4 310.3 601.9 311.1 603.4 312.0 604.9 312.9 606.4 313.9 607.9 314.9 609.4 316.0 610.8 317.2 612.3 318.4 613.7 319.6 615.2 321.0 616.6 322.4 618.1 323.9 619.5 325.5 620.9 327.3 622.3 329.1 623.7 331.0 625.1 333.2 626.5 335.4 627.9 337.9 M655.2 353.5 656.7 352.8 658.2 352.1 659.7 351.4 661.2 350.7 662.8 350.1 664.3 349.4 665.8 348.7 667.3 348.0 668.8 347.3 670.3 346.6 671.8 346.0 673.3 345.3 674.9 344.6 676.4 343.9 677.9 343.2 679.4 342.6 680.9 341.9 682.4 341.2 683.9 340.5 685.4 339.9 686.9 339.2 M276.8 529.5 278.5 528.8 280.2 528.0 281.9 527.3 283.6 526.5 285.3 525.7 286.9 525.0 288.6 524.2 290.3 523.4 292.0 522.7 293.7 521.9 295.4 521.2 297.1 520.4 298.8 519.6 300.4 518.9 302.1 518.1 303.8 517.4 305.5 515.8 306.9 508.3 308.3 502.2 309.9 496.8 311.4 491.9 312.9 487.4 314.5 483.3 316.1 479.3 317.7 475.6 319.3 472.1 320.9 468.7 322.5 465.4 324.1 462.2 325.7 459.2 327.3 456.2 328.9 453.3 330.6 450.5 332.2 447.8 333.9 445.2 335.5 442.6 337.1 440.0 338.8 437.6 340.4 435.1 342.1 432.8 343.7 430.4 345.4 428.1 347.1 425.9 348.7 423.7 350.4 421.5 352.1 419.4 353.7 417.3 355.4 415.3 357.1 413.3 358.7 411.3 360.4 409.3 362.1 407.4 363.7 405.5 365.4 403.6 367.1 401.8 368.8 400.0 370.4 398.2 372.1 396.4 373.8 394.7 375.5 392.9 377.2 391.3 378.8 389.6 380.5 387.9 382.2 386.3 383.9 384.7 385.6 383.1 387.2 381.6 388.9 380.0 390.6 378.5 392.3 377.0 394.0 375.5 395.7 374.0 397.3 372.6 399.0 371.2 400.7 369.8 402.4 368.4 404.1 367.0 405.8 365.6 407.4 364.3 409.1 363.0 410.8 361.7 412.5 360.4 414.2 359.1 415.9 357.8 417.5 356.6 419.2 355.4 420.9 354.2 422.6 353.0 424.3 351.8 426.0 350.6 427.6 349.5 429.3 348.3 431.0 347.2 432.7 346.1 434.4 345.0 436.0 343.9 437.7 342.9 439.4 341.8 441.1 340.8 442.7 339.8 444.4 338.8 446.1 337.8 447.8 336.8 449.4 335.9 451.1 334.9 452.8 334.0 454.5 333.0 456.1 332.1 457.8 331.2 459.5 330.4 461.2 329.5 462.8 328.6 464.5 327.8 466.2 327.0 467.8 326.2 469.5 325.4 471.2 324.6 472.8 323.8 474.5 323.0 476.2 322.3 477.8 321.6 479.5 320.8 481.1 320.1 482.8 319.4 484.5 318.7 486.1 318.1 487.8 317.4 489.4 316.8 491.1 316.2 492.7 315.5 494.4 314.9 496.0 314.4 497.7 313.8 499.3 313.2 501.0 312.7 502.6 312.1 504.3 311.6 505.9 311.1 507.5 310.6 509.2 310.1 510.8 309.7 512.5 309.2 514.1 308.8 515.7 308.4 517.4 307.9 519.0 307.6 520.6 307.2 522.3 306.8 523.9 306.5 525.5 306.1 527.1 305.8 528.8 305.5 530.4 305.2 532.0 304.9 533.6 304.6 535.2 304.4 536.9 304.2 538.5 304.0 540.1 303.8 541.7 303.6 543.3 303.4 544.9 303.2 546.5 303.1 548.1 303.0 549.7 302.9 551.3 302.8 552.9 302.7 554.5 302.7 556.1 302.6 557.7 302.6 559.3 302.6 560.9 302.6 562.5 302.7 564.0 302.7 565.6 302.8 567.2 302.9 568.8 303.0 570.3 303.2 571.9 303.3 573.5 303.5 575.1 303.7 576.6 303.9 578.2 304.2 579.7 304.5 581.3 304.8 582.8 305.1 584.4 305.4 585.9 305.8 587.5 306.2 589.0 306.6 590.6 307.1 592.1 307.5 593.6 308.1 595.2 308.6 596.7 309.2 598.2 309.8 599.7 310.4 601.2 311.1 602.8 311.8 604.3 312.6 605.8 313.4 607.3 314.2 608.8 315.1 610.2 316.0 611.7 317.0 613.2 318.0 614.7 319.1 616.2 320.2 617.6 321.4 619.1 322.7 620.5 324.1 622.0 325.5 623.4 327.0 624.8 328.6 626.2 330.3 627.7 332.2 629.1 334.1 630.4 336.2 631.8 338.5 633.2 341.0 M658.9 357.2 660.5 356.6 662.0 355.9 663.5 355.2 665.0 354.5 666.5 353.8 668.1 353.1 669.6 352.4 671.1 351.8 672.6 351.1 674.1 350.4 675.6 349.7 677.1 349.0 678.7 348.3 680.2 347.7 681.7 347.0 683.2 346.3 684.7 345.6 686.2 344.9 687.7 344.3 689.2 343.6 690.7 342.9 692.2 342.2 M281.6 533.2 283.3 532.4 285.0 531.7 286.7 530.9 288.3 530.1 290.0 529.4 291.7 528.6 293.4 527.8 295.1 527.1 296.8 526.3 298.5 525.5 300.2 524.8 301.9 524.0 303.6 523.3 305.2 522.5 306.9 521.7 308.6 521.0 310.3 519.4 311.7 511.9 313.2 505.7 314.7 500.4 316.2 495.5 317.8 491.0 319.4 486.8 320.9 482.9 322.5 479.2 324.1 475.6 325.7 472.2 327.4 468.9 329.0 465.7 330.6 462.7 332.2 459.7 333.9 456.8 335.5 454.0 337.2 451.3 338.8 448.7 340.4 446.1 342.1 443.5 343.7 441.0 345.4 438.6 347.1 436.2 348.7 433.9 350.4 431.6 352.0 429.4 353.7 427.2 355.4 425.0 357.0 422.9 358.7 420.8 360.4 418.7 362.1 416.7 363.7 414.7 365.4 412.7 367.1 410.8 368.8 408.9 370.4 407.0 372.1 405.2 373.8 403.4 375.5 401.6 377.2 399.8 378.8 398.1 380.5 396.3 382.2 394.6 383.9 393.0 385.6 391.3 387.3 389.7 389.0 388.1 390.6 386.5 392.3 384.9 394.0 383.4 395.7 381.9 397.4 380.4 399.1 378.9 400.8 377.4 402.4 375.9 404.1 374.5 405.8 373.1 407.5 371.7 409.2 370.3 410.9 369.0 412.6 367.6 414.3 366.3 415.9 365.0 417.6 363.7 419.3 362.4 421.0 361.2 422.7 359.9 424.4 358.7 426.1 357.5 427.7 356.3 429.4 355.1 431.1 353.9 432.8 352.8 434.5 351.6 436.2 350.5 437.8 349.4 439.5 348.3 441.2 347.2 442.9 346.2 444.6 345.1 446.3 344.1 447.9 343.1 449.6 342.1 451.3 341.1 453.0 340.1 454.7 339.1 456.3 338.2 458.0 337.2 459.7 336.3 461.4 335.4 463.0 334.5 464.7 333.6 466.4 332.7 468.1 331.9 469.7 331.0 471.4 330.2 473.1 329.4 474.7 328.6 476.4 327.8 478.1 327.0 479.7 326.3 481.4 325.5 483.1 324.8 484.7 324.0 486.4 323.3 488.0 322.6 489.7 322.0 491.4 321.3 493.0 320.6 494.7 320.0 496.3 319.4 498.0 318.7 499.6 318.1 501.3 317.5 503.0 317.0 504.6 316.4 506.3 315.9 507.9 315.3 509.5 314.8 511.2 314.3 512.8 313.8 514.5 313.3 516.1 312.8 517.8 312.4 519.4 312.0 521.0 311.5 522.7 311.1 524.3 310.7 525.9 310.3 527.6 310.0 529.2 309.6 530.8 309.3 532.5 308.9 534.1 308.6 535.7 308.3 537.3 308.1 538.9 307.8 540.6 307.5 542.2 307.3 543.8 307.1 545.4 306.9 547.0 306.7 548.6 306.5 550.2 306.4 551.8 306.2 553.4 306.1 555.0 306.0 556.6 305.9 558.2 305.9 559.8 305.8 561.4 305.8 563.0 305.7 564.6 305.8 566.2 305.8 567.8 305.8 569.4 305.9 571.0 305.9 572.5 306.0 574.1 306.2 575.7 306.3 577.3 306.5 578.8 306.6 580.4 306.8 582.0 307.1 583.5 307.3 585.1 307.6 586.6 307.9 588.2 308.2 589.7 308.5 591.3 308.9 592.8 309.3 594.4 309.7 595.9 310.2 597.5 310.6 599.0 311.2 600.5 311.7 602.0 312.3 603.6 312.9 605.1 313.5 606.6 314.2 608.1 314.9 609.6 315.7 611.1 316.5 612.6 317.3 614.1 318.2 615.6 319.1 617.1 320.1 618.6 321.1 620.0 322.2 621.5 323.3 623.0 324.5 624.4 325.8 625.9 327.2 627.3 328.6 628.7 330.1 630.2 331.7 631.6 333.4 633.0 335.3 634.4 337.2 635.8 339.3 637.1 341.6 638.5 344.1 M662.7 361.0 664.2 360.3 665.8 359.6 667.3 359.0 668.8 358.3 670.3 357.6 671.9 356.9 673.4 356.2 674.9 355.5 676.4 354.8 677.9 354.2 679.4 353.5 681.0 352.8 682.5 352.1 684.0 351.4 685.5 350.7 687.0 350.0 688.5 349.4 690.0 348.7 691.6 348.0 693.1 347.3 694.6 346.6 696.1 346.0 697.6 345.3 M286.4 536.9 288.1 536.1 289.7 535.3 291.4 534.6 293.1 533.8 294.8 533.0 296.5 532.2 298.2 531.5 299.9 530.7 301.6 529.9 303.3 529.2 305.0 528.4 306.7 527.7 308.4 526.9 310.1 526.1 311.8 525.4 313.4 524.6 315.1 523.0 316.5 515.5 318.0 509.3 319.6 503.9 321.1 499.1 322.7 494.6 324.3 490.4 325.8 486.5 327.4 482.7 329.1 479.2 330.7 475.7 332.3 472.5 333.9 469.3 335.5 466.2 337.2 463.2 338.8 460.4 340.5 457.6 342.1 454.8 343.8 452.2 345.4 449.6 347.1 447.0 348.7 444.5 350.4 442.1 352.0 439.7 353.7 437.4 355.4 435.1 357.0 432.8 358.7 430.6 360.4 428.5 362.1 426.3 363.7 424.2 365.4 422.2 367.1 420.1 368.8 418.2 370.5 416.2 372.1 414.3 373.8 412.3 375.5 410.5 377.2 408.6 378.9 406.8 380.5 405.0 382.2 403.2 383.9 401.5 385.6 399.8 387.3 398.1 389.0 396.4 390.7 394.7 392.4 393.1 394.0 391.5 395.7 389.9 397.4 388.3 399.1 386.8 400.8 385.2 402.5 383.7 404.2 382.2 405.9 380.8 407.6 379.3 409.3 377.9 411.0 376.5 412.6 375.1 414.3 373.7 416.0 372.3 417.7 371.0 419.4 369.6 421.1 368.3 422.8 367.0 424.5 365.8 426.2 364.5 427.9 363.2 429.5 362.0 431.2 360.8 432.9 359.6 434.6 358.4 436.3 357.2 438.0 356.1 439.7 354.9 441.4 353.8 443.0 352.7 444.7 351.6 446.4 350.5 448.1 349.5 449.8 348.4 451.5 347.4 453.2 346.3 454.8 345.3 456.5 344.3 458.2 343.4 459.9 342.4 461.6 341.4 463.2 340.5 464.9 339.6 466.6 338.7 468.3 337.8 470.0 336.9 471.6 336.0 473.3 335.1 475.0 334.3 476.6 333.5 478.3 332.6 480.0 331.8 481.7 331.0 483.3 330.3 485.0 329.5 486.7 328.7 488.3 328.0 490.0 327.3 491.7 326.6 493.3 325.9 495.0 325.2 496.7 324.5 498.3 323.8 500.0 323.2 501.6 322.6 503.3 321.9 504.9 321.3 506.6 320.8 508.3 320.2 509.9 319.6 511.6 319.1 513.2 318.5 514.9 318.0 516.5 317.5 518.1 317.0 519.8 316.5 521.4 316.0 523.1 315.6 524.7 315.1 526.4 314.7 528.0 314.3 529.6 313.9 531.3 313.5 532.9 313.1 534.5 312.8 536.2 312.4 537.8 312.1 539.4 311.8 541.0 311.5 542.7 311.2 544.3 311.0 545.9 310.7 547.5 310.5 549.1 310.3 550.8 310.0 552.4 309.9 554.0 309.7 555.6 309.5 557.2 309.4 558.8 309.3 560.4 309.2 562.0 309.1 563.6 309.0 565.2 308.9 566.8 308.9 568.4 308.9 570.0 308.9 571.6 308.9 573.2 308.9 574.7 309.0 576.3 309.1 577.9 309.2 579.5 309.3 581.1 309.4 582.6 309.6 584.2 309.8 585.8 310.0 587.3 310.2 588.9 310.4 590.5 310.7 592.0 311.0 593.6 311.3 595.1 311.6 596.7 312.0 598.2 312.4 599.8 312.8 601.3 313.3 602.8 313.8 604.4 314.3 605.9 314.8 607.4 315.4 608.9 316.0 610.5 316.6 612.0 317.3 613.5 318.0 615.0 318.8 616.5 319.6 618.0 320.4 619.5 321.3 621.0 322.2 622.4 323.2 623.9 324.2 625.4 325.3 626.9 326.4 628.3 327.7 629.8 328.9 631.2 330.3 632.7 331.7 634.1 333.2 635.5 334.8 636.9 336.5 638.3 338.4 639.7 340.3 641.1 342.5 642.5 344.7 643.8 347.2 M665.0 365.5 666.5 364.8 668.0 364.1 669.6 363.4 671.1 362.8 672.6 362.1 674.1 361.4 675.7 360.7 677.2 360.0 678.7 359.3 680.2 358.6 681.8 357.9 683.3 357.2 684.8 356.6 686.3 355.9 687.8 355.2 689.3 354.5 690.9 353.8 692.4 353.1 693.9 352.4 695.4 351.8 696.9 351.1 698.4 350.4 699.9 349.7 701.5 349.0 703.0 348.3 M291.2 540.5 292.9 539.8 294.6 539.0 296.3 538.2 298.0 537.5 299.7 536.7 301.4 535.9 303.1 535.1 304.8 534.4 306.5 533.6 308.1 532.8 309.8 532.1 311.5 531.3 313.2 530.5 314.9 529.8 316.6 529.0 318.3 528.2 320.0 526.7 321.4 519.1 322.9 513.0 324.4 507.6 326.0 502.7 327.6 498.2 329.2 494.0 330.8 490.1 332.4 486.3 334.0 482.7 335.6 479.3 337.2 476.0 338.9 472.8 340.5 469.8 342.1 466.8 343.8 463.9 345.4 461.1 347.1 458.4 348.7 455.7 350.4 453.1 352.1 450.5 353.7 448.1 355.4 445.6 357.1 443.2 358.7 440.9 360.4 438.6 362.1 436.3 363.8 434.1 365.4 432.0 367.1 429.8 368.8 427.7 370.5 425.6 372.1 423.6 373.8 421.6 375.5 419.6 377.2 417.7 378.9 415.8 380.6 413.9 382.3 412.1 383.9 410.2 385.6 408.4 387.3 406.7 389.0 404.9 390.7 403.2 392.4 401.5 394.1 399.8 395.8 398.1 397.5 396.5 399.2 394.9 400.9 393.3 402.6 391.7 404.3 390.2 405.9 388.6 407.6 387.1 409.3 385.6 411.0 384.2 412.7 382.7 414.4 381.3 416.1 379.8 417.8 378.4 419.5 377.1 421.2 375.7 422.9 374.3 424.6 373.0 426.3 371.7 428.0 370.4 429.7 369.1 431.4 367.8 433.0 366.6 434.7 365.4 436.4 364.1 438.1 362.9 439.8 361.7 441.5 360.6 443.2 359.4 444.9 358.3 446.6 357.1 448.3 356.0 450.0 354.9 451.6 353.8 453.3 352.8 455.0 351.7 456.7 350.7 458.4 349.6 460.1 348.6 461.8 347.6 463.4 346.6 465.1 345.7 466.8 344.7 468.5 343.8 470.2 342.8 471.9 341.9 473.5 341.0 475.2 340.1 476.9 339.3 478.6 338.4 480.3 337.6 481.9 336.7 483.6 335.9 485.3 335.1 486.9 334.3 488.6 333.5 490.3 332.7 492.0 332.0 493.6 331.2 495.3 330.5 497.0 329.8 498.6 329.1 500.3 328.4 502.0 327.7 503.6 327.1 505.3 326.4 506.9 325.8 508.6 325.2 510.3 324.6 511.9 324.0 513.6 323.4 515.2 322.8 516.9 322.3 518.5 321.7 520.2 321.2 521.8 320.7 523.5 320.2 525.1 319.7 526.8 319.2 528.4 318.8 530.1 318.3 531.7 317.9 533.3 317.5 535.0 317.1 536.6 316.7 538.2 316.3 539.9 316.0 541.5 315.6 543.1 315.3 544.8 315.0 546.4 314.7 548.0 314.4 549.6 314.1 551.3 313.9 552.9 313.6 554.5 313.4 556.1 313.2 557.7 313.0 559.3 312.9 561.0 312.7 562.6 312.6 564.2 312.4 565.8 312.3 567.4 312.2 569.0 312.2 570.6 312.1 572.2 312.1 573.8 312.0 575.4 312.0 577.0 312.1 578.5 312.1 580.1 312.1 581.7 312.2 583.3 312.3 584.9 312.4 586.4 312.6 588.0 312.7 589.6 312.9 591.2 313.1 592.7 313.3 594.3 313.6 595.9 313.8 597.4 314.1 599.0 314.4 600.5 314.8 602.1 315.1 603.6 315.5 605.2 316.0 606.7 316.4 608.2 316.9 609.8 317.4 611.3 317.9 612.8 318.5 614.3 319.1 615.9 319.8 617.4 320.4 618.9 321.1 620.4 321.9 621.9 322.7 623.4 323.5 624.9 324.4 626.4 325.3 627.8 326.3 629.3 327.3 630.8 328.4 632.3 329.6 633.7 330.8 635.2 332.0 636.6 333.4 638.1 334.8 639.5 336.3 640.9 338.0 642.3 339.7 643.7 341.5 645.1 343.5 646.5 345.6 647.8 347.9 649.2 350.4 M668.8 369.3 670.3 368.6 671.9 368.0 673.4 367.3 674.9 366.6 676.5 365.9 678.0 365.2 679.5 364.5 681.0 363.8 682.6 363.1 684.1 362.4 685.6 361.7 687.1 361.0 688.6 360.4 690.2 359.7 691.7 359.0 693.2 358.3 694.7 357.6 696.2 356.9 697.8 356.2 699.3 355.5 700.8 354.8 702.3 354.2 703.8 353.5 705.3 352.8 706.8 352.1 708.4 351.4 M296.0 544.2 297.7 543.5 299.4 542.7 301.1 541.9 302.8 541.1 304.5 540.4 306.2 539.6 307.9 538.8 309.6 538.0 311.3 537.3 313.0 536.5 314.7 535.7 316.4 535.0 318.1 534.2 319.8 533.4 321.5 532.7 323.2 531.9 324.8 530.3 326.3 522.8 327.8 516.6 329.4 511.2 330.9 506.3 332.5 501.8 334.1 497.6 335.7 493.7 337.3 489.9 338.9 486.3 340.6 482.9 342.2 479.6 343.8 476.4 345.5 473.3 347.1 470.4 348.8 467.5 350.4 464.6 352.1 461.9 353.8 459.2 355.4 456.6 357.1 454.1 358.8 451.6 360.4 449.1 362.1 446.7 363.8 444.4 365.4 442.1 367.1 439.8 368.8 437.6 370.5 435.5 372.2 433.3 373.9 431.2 375.5 429.1 377.2 427.1 378.9 425.1 380.6 423.1 382.3 421.2 384.0 419.3 385.7 417.4 387.4 415.5 389.1 413.7 390.7 411.9 392.4 410.1 394.1 408.4 395.8 406.6 397.5 404.9 399.2 403.2 400.9 401.6 402.6 399.9 404.3 398.3 406.0 396.7 407.7 395.1 409.4 393.6 411.1 392.0 412.8 390.5 414.5 389.0 416.2 387.6 417.9 386.1 419.6 384.7 421.3 383.2 423.0 381.8 424.7 380.4 426.4 379.1 428.1 377.7 429.8 376.4 431.5 375.1 433.2 373.8 434.9 372.5 436.6 371.2 438.3 369.9 440.0 368.7 441.7 367.5 443.4 366.3 445.0 365.1 446.7 363.9 448.4 362.7 450.1 361.6 451.8 360.5 453.5 359.4 455.2 358.3 456.9 357.2 458.6 356.1 460.3 355.0 462.0 354.0 463.7 353.0 465.3 351.9 467.0 350.9 468.7 350.0 470.4 349.0 472.1 348.0 473.8 347.1 475.5 346.1 477.1 345.2 478.8 344.3 480.5 343.4 482.2 342.5 483.9 341.7 485.5 340.8 487.2 340.0 488.9 339.2 490.6 338.4 492.3 337.6 493.9 336.8 495.6 336.0 497.3 335.3 498.9 334.5 500.6 333.8 502.3 333.1 504.0 332.4 505.6 331.7 507.3 331.0 509.0 330.3 510.6 329.7 512.3 329.0 513.9 328.4 515.6 327.8 517.3 327.2 518.9 326.6 520.6 326.1 522.2 325.5 523.9 325.0 525.5 324.4 527.2 323.9 528.8 323.4 530.5 322.9 532.1 322.5 533.8 322.0 535.4 321.5 537.1 321.1 538.7 320.7 540.3 320.3 542.0 319.9 543.6 319.5 545.3 319.2 546.9 318.8 548.5 318.5 550.2 318.2 551.8 317.9 553.4 317.6 555.0 317.3 556.7 317.1 558.3 316.8 559.9 316.6 561.5 316.4 563.1 316.2 564.7 316.0 566.4 315.9 568.0 315.7 569.6 315.6 571.2 315.5 572.8 315.4 574.4 315.3 576.0 315.3 577.6 315.2 579.2 315.2 580.8 315.2 582.4 315.2 584.0 315.3 585.5 315.3 587.1 315.4 588.7 315.5 590.3 315.6 591.9 315.7 593.4 315.9 595.0 316.0 596.6 316.2 598.1 316.5 599.7 316.7 601.3 317.0 602.8 317.3 604.4 317.6 605.9 317.9 607.5 318.3 609.0 318.7 610.6 319.1 612.1 319.6 613.6 320.0 615.2 320.5 616.7 321.1 618.2 321.6 619.8 322.3 621.3 322.9 622.8 323.6 624.3 324.3 625.8 325.0 627.3 325.8 628.8 326.7 630.3 327.5 631.8 328.5 633.3 329.4 634.7 330.5 636.2 331.6 637.7 332.7 639.1 333.9 640.6 335.2 642.0 336.5 643.5 338.0 644.9 339.5 646.3 341.1 647.7 342.8 649.1 344.6 650.5 346.6 651.9 348.7 653.2 351.0 654.6 353.5 M671.1 373.9 672.6 373.2 674.2 372.5 675.7 371.8 677.2 371.1 678.8 370.4 680.3 369.7 681.8 369.0 683.4 368.3 684.9 367.6 686.4 366.9 687.9 366.2 689.5 365.5 691.0 364.9 692.5 364.2 694.0 363.5 695.6 362.8 697.1 362.1 698.6 361.4 700.1 360.7 701.6 360.0 703.2 359.3 704.7 358.6 706.2 357.9 707.7 357.3 709.2 356.6 710.7 355.9 712.3 355.2 713.8 354.5 M300.8 547.9 302.6 547.2 304.3 546.4 306.0 545.6 307.7 544.8 309.4 544.1 311.1 543.3 312.8 542.5 314.5 541.7 316.2 541.0 317.9 540.2 319.6 539.4 321.3 538.6 323.0 537.9 324.7 537.1 326.4 536.3 328.1 535.6 329.7 534.0 331.2 526.4 332.7 520.2 334.3 514.8 335.9 509.9 337.5 505.4 339.1 501.2 340.7 497.3 342.3 493.5 343.9 489.9 345.5 486.5 347.2 483.2 348.8 480.0 350.5 476.9 352.1 473.9 353.8 471.0 355.5 468.2 357.1 465.5 358.8 462.8 360.5 460.2 362.1 457.6 363.8 455.1 365.5 452.7 367.2 450.3 368.8 447.9 370.5 445.6 372.2 443.4 373.9 441.1 375.6 439.0 377.3 436.8 378.9 434.7 380.6 432.6 382.3 430.6 384.0 428.6 385.7 426.6 387.4 424.7 389.1 422.8 390.8 420.9 392.5 419.0 394.2 417.2 395.9 415.4 397.6 413.6 399.3 411.8 401.0 410.1 402.7 408.4 404.4 406.7 406.1 405.0 407.8 403.4 409.5 401.8 411.2 400.2 412.9 398.6 414.6 397.0 416.3 395.5 418.0 394.0 419.7 392.5 421.4 391.0 423.1 389.5 424.8 388.1 426.5 386.6 428.2 385.2 429.9 383.8 431.6 382.5 433.3 381.1 435.0 379.8 436.7 378.4 438.4 377.1 440.1 375.9 441.8 374.6 443.5 373.3 445.2 372.1 446.9 370.9 448.6 369.6 450.3 368.4 452.0 367.3 453.7 366.1 455.4 365.0 457.1 363.8 458.8 362.7 460.5 361.6 462.2 360.5 463.9 359.4 465.6 358.4 467.3 357.3 468.9 356.3 470.6 355.3 472.3 354.3 474.0 353.3 475.7 352.3 477.4 351.3 479.1 350.4 480.8 349.5 482.5 348.5 484.1 347.6 485.8 346.7 487.5 345.8 489.2 345.0 490.9 344.1 492.6 343.3 494.2 342.5 495.9 341.6 497.6 340.8 499.3 340.1 500.9 339.3 502.6 338.5 504.3 337.8 506.0 337.1 507.6 336.3 509.3 335.6 511.0 334.9 512.6 334.3 514.3 333.6 516.0 332.9 517.6 332.3 519.3 331.7 521.0 331.1 522.6 330.5 524.3 329.9 525.9 329.3 527.6 328.7 529.3 328.2 530.9 327.7 532.6 327.2 534.2 326.6 535.9 326.2 537.5 325.7 539.2 325.2 540.8 324.8 542.5 324.3 544.1 323.9 545.7 323.5 547.4 323.1 549.0 322.8 550.7 322.4 552.3 322.0 553.9 321.7 555.6 321.4 557.2 321.1 558.8 320.8 560.4 320.5 562.1 320.3 563.7 320.0 565.3 319.8 566.9 319.6 568.6 319.4 570.2 319.2 571.8 319.1 573.4 318.9 575.0 318.8 576.6 318.7 578.2 318.6 579.8 318.5 581.4 318.5 583.0 318.4 584.6 318.4 586.2 318.4 587.8 318.4 589.4 318.4 591.0 318.5 592.6 318.6 594.1 318.6 595.7 318.8 597.3 318.9 598.9 319.0 600.5 319.2 602.0 319.4 603.6 319.6 605.2 319.9 606.7 320.1 608.3 320.4 609.8 320.7 611.4 321.1 612.9 321.4 614.5 321.8 616.0 322.3 617.6 322.7 619.1 323.2 620.6 323.7 622.2 324.2 623.7 324.8 625.2 325.4 626.7 326.0 628.2 326.7 629.7 327.4 631.2 328.2 632.7 329.0 634.2 329.8 635.7 330.7 637.2 331.6 638.7 332.6 640.2 333.6 641.6 334.7 643.1 335.8 644.6 337.1 646.0 338.3 647.5 339.7 648.9 341.1 650.3 342.6 651.7 344.2 653.1 346.0 654.5 347.8 655.9 349.8 657.3 351.9 658.7 354.2 660.0 356.7 661.3 359.4 662.6 362.4 M673.4 378.4 675.0 377.7 676.5 377.0 678.0 376.3 679.6 375.6 681.1 374.9 682.6 374.2 684.2 373.6 685.7 372.9 687.2 372.2 688.8 371.5 690.3 370.8 691.8 370.1 693.3 369.4 694.9 368.7 696.4 368.0 697.9 367.3 699.4 366.6 701.0 365.9 702.5 365.2 704.0 364.5 705.5 363.8 707.1 363.1 708.6 362.4 710.1 361.7 711.6 361.1 713.1 360.4 714.7 359.7 716.2 359.0 717.7 358.3 719.2 357.6 M305.7 551.7 307.4 550.9 309.1 550.1 310.8 549.3 312.6 548.6 314.3 547.8 316.0 547.0 317.7 546.2 319.4 545.4 321.1 544.7 322.8 543.9 324.5 543.1 326.2 542.3 327.9 541.6 329.6 540.8 331.3 540.0 333.0 539.2 334.7 537.7 336.1 530.1 337.7 523.9 339.2 518.5 340.8 513.6 342.4 509.1 344.0 504.9 345.6 500.9 347.3 497.1 348.9 493.5 350.6 490.1 352.2 486.8 353.8 483.6 355.5 480.5 357.2 477.5 358.8 474.6 360.5 471.8 362.2 469.1 363.8 466.4 365.5 463.7 367.2 461.2 368.9 458.7 370.5 456.2 372.2 453.8 373.9 451.5 375.6 449.2 377.3 446.9 379.0 444.7 380.7 442.5 382.4 440.3 384.1 438.2 385.7 436.2 387.4 434.1 389.1 432.1 390.8 430.1 392.5 428.2 394.2 426.3 395.9 424.4 397.6 422.5 399.3 420.7 401.0 418.8 402.7 417.1 404.4 415.3 406.1 413.6 407.9 411.8 409.6 410.1 411.3 408.5 413.0 406.8 414.7 405.2 416.4 403.6 418.1 402.0 419.8 400.5 421.5 398.9 423.2 397.4 424.9 395.9 426.6 394.4 428.3 392.9 430.0 391.5 431.7 390.1 433.4 388.6 435.1 387.3 436.8 385.9 438.5 384.5 440.2 383.2 442.0 381.8 443.7 380.5 445.4 379.2 447.1 378.0 448.8 376.7 450.5 375.5 452.2 374.2 453.9 373.0 455.6 371.8 457.3 370.6 459.0 369.5 460.7 368.3 462.4 367.2 464.1 366.1 465.8 365.0 467.5 363.9 469.2 362.8 470.9 361.7 472.6 360.7 474.3 359.6 475.9 358.6 477.6 357.6 479.3 356.6 481.0 355.6 482.7 354.7 484.4 353.7 486.1 352.8 487.8 351.9 489.5 350.9 491.2 350.0 492.8 349.2 494.5 348.3 496.2 347.4 497.9 346.6 499.6 345.8 501.3 345.0 502.9 344.1 504.6 343.4 506.3 342.6 508.0 341.8 509.7 341.1 511.3 340.3 513.0 339.6 514.7 338.9 516.4 338.2 518.0 337.5 519.7 336.9 521.4 336.2 523.0 335.6 524.7 334.9 526.4 334.3 528.0 333.7 529.7 333.1 531.3 332.6 533.0 332.0 534.7 331.5 536.3 330.9 538.0 330.4 539.6 329.9 541.3 329.4 542.9 328.9 544.6 328.5 546.2 328.0 547.9 327.6 549.5 327.2 551.2 326.8 552.8 326.4 554.4 326.0 556.1 325.6 557.7 325.3 559.4 324.9 561.0 324.6 562.6 324.3 564.3 324.0 565.9 323.7 567.5 323.5 569.1 323.2 570.8 323.0 572.4 322.8 574.0 322.6 575.6 322.4 577.2 322.3 578.8 322.1 580.4 322.0 582.1 321.9 583.7 321.8 585.3 321.7 586.9 321.6 588.5 321.6 590.1 321.6 591.7 321.6 593.3 321.6 594.8 321.6 596.4 321.7 598.0 321.7 599.6 321.8 601.2 321.9 602.8 322.1 604.3 322.2 605.9 322.4 607.5 322.6 609.1 322.8 610.6 323.1 612.2 323.3 613.7 323.6 615.3 323.9 616.8 324.3 618.4 324.6 619.9 325.0 621.5 325.4 623.0 325.9 624.6 326.4 626.1 326.9 627.6 327.4 629.1 328.0 630.7 328.6 632.2 329.2 633.7 329.9 635.2 330.6 636.7 331.3 638.2 332.1 639.7 333.0 641.2 333.8 642.7 334.8 644.2 335.7 645.6 336.8 647.1 337.9 648.6 339.0 650.0 340.2 651.5 341.5 652.9 342.8 654.3 344.3 655.8 345.8 657.2 347.4 658.6 349.1 660.0 351.0 661.4 352.9 662.7 355.0 664.1 357.3 665.4 359.8 666.7 362.6 668.0 365.6 669.3 369.1 670.5 373.0 M674.2 383.7 675.7 383.0 677.3 382.3 678.8 381.6 680.4 380.9 681.9 380.2 683.4 379.5 685.0 378.8 686.5 378.1 688.0 377.4 689.6 376.7 691.1 376.0 692.6 375.3 694.2 374.6 695.7 373.9 697.2 373.2 698.8 372.5 700.3 371.8 701.8 371.1 703.4 370.4 704.9 369.7 706.4 369.0 707.9 368.3 709.5 367.7 711.0 367.0 712.5 366.3 714.0 365.6 715.6 364.9 717.1 364.2 718.6 363.5 720.1 362.8 721.6 362.1 723.2 361.4 724.7 360.7 M310.6 555.4 312.3 554.6 314.0 553.8 315.7 553.1 317.5 552.3 319.2 551.5 320.9 550.7 322.6 549.9 324.3 549.2 326.0 548.4 327.7 547.6 329.4 546.8 331.1 546.1 332.8 545.3 334.5 544.5 336.2 543.7 337.9 542.9 339.6 541.4 341.1 533.8 342.6 527.6 344.2 522.2 345.8 517.3 347.4 512.7 349.0 508.5 350.7 504.5 352.3 500.8 353.9 497.2 355.6 493.7 357.2 490.4 358.9 487.2 360.6 484.1 362.2 481.1 363.9 478.2 365.6 475.4 367.2 472.6 368.9 470.0 370.6 467.3 372.3 464.8 374.0 462.3 375.6 459.8 377.3 457.4 379.0 455.0 380.7 452.7 382.4 450.5 384.1 448.2 385.8 446.0 387.5 443.9 389.2 441.8 390.9 439.7 392.6 437.6 394.3 435.6 396.0 433.6 397.7 431.7 399.4 429.8 401.1 427.9 402.8 426.0 404.5 424.2 406.2 422.3 407.9 420.6 409.6 418.8 411.3 417.0 413.0 415.3 414.8 413.6 416.5 412.0 418.2 410.3 419.9 408.7 421.6 407.1 423.3 405.5 425.0 403.9 426.7 402.4 428.4 400.8 430.1 399.3 431.8 397.8 433.6 396.4 435.3 394.9 437.0 393.5 438.7 392.1 440.4 390.7 442.1 389.3 443.8 387.9 445.5 386.6 447.2 385.3 448.9 384.0 450.6 382.7 452.3 381.4 454.1 380.1 455.8 378.9 457.5 377.6 459.2 376.4 460.9 375.2 462.6 374.0 464.3 372.9 466.0 371.7 467.7 370.6 469.4 369.4 471.1 368.3 472.8 367.2 474.5 366.2 476.2 365.1 477.9 364.0 479.6 363.0 481.3 362.0 483.0 361.0 484.7 360.0 486.4 359.0 488.1 358.0 489.8 357.1 491.5 356.1 493.1 355.2 494.8 354.3 496.5 353.4 498.2 352.5 499.9 351.6 501.6 350.8 503.3 349.9 505.0 349.1 506.6 348.3 508.3 347.5 510.0 346.7 511.7 345.9 513.4 345.1 515.0 344.4 516.7 343.6 518.4 342.9 520.1 342.2 521.8 341.5 523.4 340.8 525.1 340.2 526.8 339.5 528.4 338.9 530.1 338.2 531.8 337.6 533.4 337.0 535.1 336.4 536.8 335.8 538.4 335.3 540.1 334.7 541.7 334.2 543.4 333.7 545.1 333.2 546.7 332.7 548.4 332.2 550.0 331.7 551.7 331.3 553.3 330.8 555.0 330.4 556.6 330.0 558.3 329.6 559.9 329.2 561.5 328.9 563.2 328.5 564.8 328.2 566.4 327.9 568.1 327.5 569.7 327.3 571.3 327.0 573.0 326.7 574.6 326.5 576.2 326.2 577.8 326.0 579.5 325.8 581.1 325.7 582.7 325.5 584.3 325.3 585.9 325.2 587.5 325.1 589.1 325.0 590.7 324.9 592.3 324.9 593.9 324.8 595.5 324.8 597.1 324.8 598.7 324.8 600.3 324.8 601.9 324.9 603.5 324.9 605.1 325.0 606.7 325.1 608.3 325.3 609.8 325.4 611.4 325.6 613.0 325.8 614.5 326.0 616.1 326.2 617.7 326.5 619.2 326.8 620.8 327.1 622.3 327.4 623.9 327.8 625.4 328.2 627.0 328.6 628.5 329.1 630.1 329.5 631.6 330.0 633.1 330.6 634.6 331.1 636.2 331.8 637.7 332.4 639.2 333.1 640.7 333.8 642.2 334.5 643.7 335.3 645.2 336.1 646.7 337.0 648.2 337.9 649.7 338.9 651.1 340.0 652.6 341.0 654.1 342.2 655.5 343.4 657.0 344.7 658.4 346.0 659.8 347.4 661.2 349.0 662.7 350.6 664.1 352.3 665.5 354.1 666.8 356.1 668.2 358.2 669.6 360.5 670.9 363.0 672.2 365.8 673.5 368.8 674.7 372.2 675.9 376.2 677.1 381.0 678.1 387.1 679.6 386.9 681.2 386.2 682.7 385.5 684.3 384.8 685.8 384.1 687.3 383.4 688.9 382.7 690.4 382.0 691.9 381.3 693.5 380.6 695.0 379.9 696.6 379.2 698.1 378.5 699.6 377.8 701.2 377.1 702.7 376.4 704.2 375.7 705.8 375.0 707.3 374.3 708.8 373.6 710.3 372.9 711.9 372.2 713.4 371.5 714.9 370.8 716.5 370.1 718.0 369.4 719.5 368.7 721.0 368.0 722.6 367.3 724.1 366.6 725.6 365.9 727.1 365.2 728.6 364.5 730.2 363.8 M315.5 559.2 317.2 558.4 319.0 557.6 320.7 556.8 322.4 556.0 324.1 555.3 325.8 554.5 327.5 553.7 329.2 552.9 330.9 552.1 332.6 551.3 334.4 550.6 336.1 549.8 337.8 549.0 339.5 548.2 341.2 547.4 342.9 546.7 344.6 545.1 346.1 537.5 347.6 531.3 349.2 525.8 350.8 520.9 352.4 516.4 354.1 512.2 355.7 508.2 357.3 504.4 359.0 500.8 360.6 497.4 362.3 494.1 364.0 490.9 365.6 487.8 367.3 484.8 369.0 481.9 370.6 479.0 372.3 476.3 374.0 473.6 375.7 470.9 377.4 468.4 379.1 465.9 380.8 463.4 382.5 461.0 384.2 458.6 385.8 456.3 387.5 454.0 389.2 451.8 390.9 449.6 392.6 447.5 394.3 445.3 396.1 443.2 397.8 441.2 399.5 439.2 401.2 437.2 402.9 435.2 404.6 433.3 406.3 431.4 408.0 429.5 409.7 427.7 411.4 425.9 413.1 424.1 414.8 422.3 416.6 420.5 418.3 418.8 420.0 417.1 421.7 415.5 423.4 413.8 425.1 412.2 426.8 410.6 428.5 409.0 430.3 407.4 432.0 405.8 433.7 404.3 435.4 402.8 437.1 401.3 438.8 399.8 440.5 398.4 442.2 396.9 444.0 395.5 445.7 394.1 447.4 392.7 449.1 391.4 450.8 390.0 452.5 388.7 454.2 387.4 455.9 386.1 457.7 384.8 459.4 383.5 461.1 382.3 462.8 381.0 464.5 379.8 466.2 378.6 467.9 377.4 469.6 376.3 471.3 375.1 473.0 374.0 474.7 372.8 476.4 371.7 478.1 370.6 479.8 369.5 481.5 368.5 483.2 367.4 484.9 366.4 486.6 365.3 488.3 364.3 490.0 363.3 491.7 362.3 493.4 361.4 495.1 360.4 496.8 359.5 498.5 358.5 500.2 357.6 501.9 356.7 503.6 355.8 505.3 355.0 507.0 354.1 508.7 353.3 510.4 352.4 512.0 351.6 513.7 350.8 515.4 350.0 517.1 349.2 518.8 348.5 520.5 347.7 522.1 347.0 523.8 346.2 525.5 345.5 527.2 344.8 528.9 344.1 530.5 343.5 532.2 342.8 533.9 342.2 535.5 341.5 537.2 340.9 538.9 340.3 540.5 339.7 542.2 339.1 543.9 338.6 545.5 338.0 547.2 337.5 548.9 336.9 550.5 336.4 552.2 335.9 553.8 335.5 555.5 335.0 557.1 334.5 558.8 334.1 560.4 333.7 562.1 333.3 563.7 332.9 565.4 332.5 567.0 332.1 568.6 331.8 570.3 331.4 571.9 331.1 573.6 330.8 575.2 330.5 576.8 330.2 578.5 330.0 580.1 329.7 581.7 329.5 583.3 329.3 584.9 329.1 586.6 328.9 588.2 328.7 589.8 328.6 591.4 328.4 593.0 328.3 594.6 328.2 596.2 328.1 597.8 328.1 599.4 328.0 601.0 328.0 602.6 328.0 604.2 328.0 605.8 328.0 607.4 328.1 609.0 328.2 610.6 328.2 612.2 328.3 613.8 328.5 615.3 328.6 616.9 328.8 618.5 329.0 620.1 329.2 621.6 329.4 623.2 329.7 624.7 330.0 626.3 330.3 627.9 330.6 629.4 331.0 630.9 331.4 632.5 331.8 634.0 332.3 635.6 332.7 637.1 333.2 638.6 333.8 640.2 334.3 641.7 334.9 643.2 335.6 644.7 336.3 646.2 337.0 647.7 337.7 649.2 338.5 650.7 339.3 652.2 340.2 653.7 341.1 655.2 342.1 656.6 343.1 658.1 344.2 659.6 345.4 661.0 346.6 662.5 347.9 663.9 349.2 665.3 350.6 666.7 352.2 668.2 353.8 669.6 355.5 671.0 357.3 672.3 359.3 673.7 361.4 675.0 363.7 676.4 366.2 677.7 369.0 679.0 372.0 680.2 375.5 681.4 379.4 682.5 384.2 683.6 390.4 685.1 390.1 686.6 389.4 688.2 388.7 689.7 388.0 691.2 387.3 692.8 386.6 694.3 385.9 695.9 385.2 697.4 384.5 698.9 383.8 700.5 383.1 702.0 382.4 703.6 381.7 705.1 381.0 706.6 380.3 708.2 379.6 709.7 378.9 711.2 378.2 712.8 377.5 714.3 376.8 715.8 376.1 717.4 375.4 718.9 374.7 720.4 374.0 721.9 373.3 723.5 372.6 725.0 371.9 726.5 371.2 728.0 370.5 729.6 369.8 731.1 369.1 732.6 368.4 734.1 367.7 735.7 367.0 M320.5 562.9 322.2 562.2 323.9 561.4 325.6 560.6 327.3 559.8 329.1 559.0 330.8 558.2 332.5 557.4 334.2 556.7 335.9 555.9 337.6 555.1 339.3 554.3 341.0 553.5 342.7 552.7 344.4 552.0 346.2 551.2 347.9 550.4 349.5 548.8 351.1 541.2 352.6 535.0 354.2 529.6 355.8 524.6 357.5 520.1 359.1 515.9 360.7 511.9 362.4 508.1 364.0 504.5 365.7 501.0 367.4 497.7 369.0 494.5 370.7 491.4 372.4 488.4 374.1 485.5 375.8 482.7 377.4 479.9 379.1 477.2 380.8 474.6 382.5 472.0 384.2 469.5 385.9 467.0 387.6 464.6 389.3 462.2 391.0 459.9 392.7 457.6 394.4 455.4 396.1 453.2 397.8 451.0 399.5 448.9 401.2 446.8 402.9 444.8 404.7 442.7 406.4 440.7 408.1 438.8 409.8 436.8 411.5 434.9 413.2 433.1 414.9 431.2 416.7 429.4 418.4 427.6 420.1 425.8 421.8 424.1 423.5 422.3 425.2 420.6 426.9 419.0 428.7 417.3 430.4 415.7 432.1 414.1 433.8 412.5 435.5 410.9 437.2 409.3 439.0 407.8 440.7 406.3 442.4 404.8 444.1 403.3 445.8 401.9 447.5 400.4 449.3 399.0 451.0 397.6 452.7 396.2 454.4 394.8 456.1 393.5 457.8 392.1 459.6 390.8 461.3 389.5 463.0 388.2 464.7 387.0 466.4 385.7 468.1 384.5 469.8 383.3 471.5 382.0 473.3 380.9 475.0 379.7 476.7 378.5 478.4 377.4 480.1 376.2 481.8 375.1 483.5 374.0 485.2 372.9 486.9 371.9 488.6 370.8 490.3 369.8 492.0 368.7 493.7 367.7 495.4 366.7 497.1 365.7 498.8 364.8 500.5 363.8 502.2 362.8 503.9 361.9 505.6 361.0 507.3 360.1 509.0 359.2 510.7 358.3 512.4 357.5 514.1 356.6 515.8 355.8 517.5 354.9 519.2 354.1 520.8 353.3 522.5 352.6 524.2 351.8 525.9 351.0 527.6 350.3 529.3 349.6 530.9 348.8 532.6 348.1 534.3 347.5 536.0 346.8 537.7 346.1 539.3 345.5 541.0 344.8 542.7 344.2 544.3 343.6 546.0 343.0 547.7 342.4 549.3 341.9 551.0 341.3 552.7 340.8 554.3 340.2 556.0 339.7 557.7 339.2 559.3 338.8 561.0 338.3 562.6 337.8 564.3 337.4 565.9 337.0 567.6 336.5 569.2 336.1 570.9 335.8 572.5 335.4 574.1 335.0 575.8 334.7 577.4 334.4 579.1 334.1 580.7 333.8 582.3 333.5 584.0 333.2 585.6 333.0 587.2 332.7 588.8 332.5 590.5 332.3 592.1 332.1 593.7 332.0 595.3 331.8 596.9 331.7 598.5 331.6 600.2 331.5 601.8 331.4 603.4 331.3 605.0 331.3 606.6 331.2 608.2 331.2 609.8 331.2 611.4 331.3 613.0 331.3 614.5 331.4 616.1 331.5 617.7 331.6 619.3 331.7 620.9 331.9 622.4 332.0 624.0 332.2 625.6 332.4 627.2 332.7 628.7 332.9 630.3 333.2 631.8 333.5 633.4 333.9 634.9 334.2 636.5 334.6 638.0 335.0 639.6 335.5 641.1 335.9 642.6 336.4 644.2 337.0 645.7 337.5 647.2 338.2 648.7 338.8 650.2 339.5 651.8 340.2 653.3 340.9 654.8 341.7 656.2 342.5 657.7 343.4 659.2 344.3 660.7 345.3 662.2 346.3 663.6 347.4 665.1 348.6 666.5 349.8 668.0 351.1 669.4 352.4 670.9 353.8 672.3 355.4 673.7 357.0 675.1 358.7 676.5 360.5 677.8 362.5 679.2 364.6 680.5 366.9 681.9 369.4 683.2 372.2 684.4 375.2 685.7 378.7 686.9 382.6 688.0 387.4 689.0 393.6 690.5 393.4 692.1 392.7 693.6 391.9 695.2 391.2 696.7 390.5 698.3 389.8 699.8 389.1 701.3 388.4 702.9 387.7 704.4 387.0 706.0 386.3 707.5 385.6 709.0 384.9 710.6 384.2 712.1 383.5 713.7 382.8 715.2 382.1 716.7 381.4 718.3 380.7 719.8 380.0 721.3 379.2 722.9 378.5 724.4 377.8 725.9 377.1 727.5 376.4 729.0 375.7 730.5 375.0 732.0 374.3 733.6 373.6 735.1 372.9 736.6 372.2 738.1 371.5 739.7 370.8 741.2 370.1 M325.4 566.7 327.2 566.0 328.9 565.2 330.6 564.4 332.3 563.6 334.0 562.8 335.7 562.0 337.5 561.2 339.2 560.4 340.9 559.6 342.6 558.9 344.3 558.1 346.0 557.3 347.7 556.5 349.4 555.7 351.2 554.9 352.9 554.1 354.6 553.4 356.3 552.6 358.0 551.8 359.7 551.0 361.4 550.2 363.1 549.4 364.8 548.7 366.5 547.9 368.1 544.8 369.7 537.6 371.3 531.7 372.9 526.5 374.6 521.8 376.2 517.5 377.9 513.4 379.5 509.6 381.2 505.9 382.9 502.5 384.6 499.1 386.2 496.0 387.9 492.9 389.6 489.9 391.3 487.0 393.0 484.2 394.7 481.5 396.4 478.8 398.1 476.2 399.8 473.7 M463.1 405.7 464.8 404.4 466.5 403.0 468.2 401.7 469.9 400.4 471.7 399.1 473.4 397.8 475.1 396.5 476.8 395.3 478.5 394.0 480.2 392.8 481.9 391.6 483.6 390.4 485.3 389.3 487.0 388.1 488.7 387.0 490.4 385.9 492.1 384.8 493.8 383.7 495.5 382.6 497.3 381.6 499.0 380.5 500.7 379.5 502.4 378.5 504.1 377.5 505.7 376.5 507.4 375.5 509.1 374.6 510.8 373.7 512.5 372.7 514.2 371.8 515.9 371.0 517.6 370.1 519.3 369.2 521.0 368.4 522.7 367.5 524.4 366.7 526.0 365.9 527.7 365.1 529.4 364.4 531.1 363.6 532.8 362.8 534.5 362.1 536.1 361.4 537.8 360.7 539.5 360.0 541.2 359.3 542.8 358.7 544.5 358.0 546.2 357.4 547.8 356.8 549.5 356.2 551.2 355.6 552.8 355.0 554.5 354.5 556.2 353.9 557.8 353.4 559.5 352.9 561.1 352.4 562.8 351.9 564.4 351.5 566.1 351.0 567.7 350.6 569.4 350.1 571.0 349.7 572.7 349.4 574.3 349.0 576.0 348.6 577.6 348.3 579.2 348.0 580.9 347.6 582.5 347.3 584.1 347.1 585.8 346.8 587.4 346.6 589.0 346.3 590.7 346.1 592.3 345.9 593.9 345.8 595.5 345.6 597.1 345.5 598.7 345.4 600.4 345.3 602.0 345.2 603.6 345.1 605.2 345.1 606.8 345.0 608.4 345.0 610.0 345.1 611.6 345.1 613.2 345.2 614.7 345.2 616.3 345.3 617.9 345.5 619.5 345.6 621.1 345.8 622.6 346.0 624.2 346.2 625.8 346.4 627.3 346.7 628.9 347.0 630.5 347.3 632.0 347.7 633.6 348.1 635.1 348.5 636.7 348.9 638.2 349.4 639.7 349.9 641.3 350.4 642.8 351.0 644.3 351.6 645.8 352.3 647.3 353.0 648.9 353.7 650.4 354.5 651.9 355.3 653.4 356.2 654.8 357.1 M665.1 365.3 666.5 366.8 667.9 368.4 669.3 370.1 670.7 371.9 672.1 373.9 673.5 376.1 674.8 378.4 676.2 381.0 677.5 383.8 678.7 387.1 680.0 390.8 681.1 395.3 682.2 401.0 683.6 402.3 685.2 401.6 686.7 400.9 688.3 400.2 689.8 399.4 691.4 398.7 692.9 398.0 694.5 397.3 696.0 396.6 697.6 395.9 699.1 395.2 700.7 394.5 702.2 393.8 703.8 393.1 705.3 392.3 706.8 391.6 708.4 390.9 709.9 390.2 711.5 389.5 713.0 388.8 714.6 388.1 716.1 387.4 717.6 386.7 719.2 386.0 720.7 385.3 722.2 384.6 723.8 383.9 725.3 383.2 726.9 382.4 728.4 381.7 729.9 381.0 731.5 380.3 733.0 379.6 734.5 378.9 736.1 378.2 737.6 377.5 739.1 376.8 740.6 376.1 742.2 375.4 743.7 374.7 745.2 374.0 746.8 373.3 M330.4 570.6 332.1 569.8 333.9 569.0 335.6 568.2 337.3 567.4 339.0 566.6 340.7 565.8 342.5 565.0 344.2 564.2 345.9 563.4 347.6 562.6 349.3 561.9 351.0 561.1 352.8 560.3 354.5 559.5 356.2 558.7 357.9 557.9 359.6 557.1 361.3 556.3 363.0 555.6 364.7 554.8 366.4 554.0 368.1 553.2 369.8 552.4 371.5 551.6 373.2 550.9 374.9 550.1 376.7 549.3 378.4 548.5 380.1 547.7 381.8 546.9 383.5 546.2 385.1 545.4 386.8 544.6 388.5 543.8 390.2 543.0 391.9 542.3 393.6 539.4 395.2 532.4 396.9 526.6 398.5 521.6 400.2 517.1 401.8 513.0 403.5 509.1 405.2 505.5 406.9 502.0 408.6 498.7 410.2 495.6 411.9 492.5 413.6 489.6 415.3 486.8 417.0 484.1 418.7 481.4 420.4 478.9 422.1 476.4 423.8 473.9 425.5 471.6 427.2 469.2 428.9 467.0 430.6 464.7 432.4 462.6 434.1 460.5 435.8 458.4 437.5 456.3 439.2 454.3 440.9 452.4 442.6 450.4 444.3 448.5 446.0 446.7 447.7 444.9 449.5 443.1 451.2 441.3 452.9 439.6 454.6 437.9 456.3 436.2 458.0 434.5 459.7 432.9 461.4 431.3 463.1 429.7 464.8 428.2 466.6 426.7 468.3 425.2 470.0 423.7 471.7 422.2 473.4 420.8 475.1 419.4 476.8 418.0 478.5 416.6 480.2 415.3 481.9 414.0 483.6 412.6 485.3 411.4 487.0 410.1 488.8 408.8 490.5 407.6 492.2 406.4 493.9 405.2 495.6 404.0 497.3 402.9 499.0 401.8 500.7 400.6 502.4 399.5 504.1 398.5 505.8 397.4 507.4 396.3 509.1 395.3 510.8 394.3 512.5 393.3 514.2 392.3 515.9 391.4 517.6 390.4 519.3 389.5 521.0 388.6 522.7 387.7 524.4 386.8 526.0 385.9 527.7 385.1 529.4 384.3 531.1 383.5 532.8 382.7 534.4 381.9 536.1 381.1 537.8 380.4 539.5 379.6 541.1 378.9 542.8 378.2 544.5 377.5 546.2 376.9 547.8 376.2 549.5 375.6 551.2 375.0 552.8 374.4 554.5 373.8 556.1 373.2 557.8 372.7 559.5 372.1 561.1 371.6 562.8 371.1 564.4 370.6 566.1 370.2 567.7 369.7 569.4 369.3 571.0 368.9 572.6 368.5 574.3 368.1 575.9 367.7 577.6 367.4 579.2 367.1 580.8 366.8 582.5 366.5 584.1 366.2 585.7 366.0 587.3 365.7 589.0 365.5 590.6 365.3 592.2 365.2 593.8 365.0 595.4 364.9 597.1 364.8 598.7 364.7 600.3 364.6 601.9 364.6 603.5 364.6 605.1 364.6 606.7 364.6 608.3 364.7 609.8 364.7 611.4 364.8 613.0 365.0 614.6 365.1 616.2 365.3 617.8 365.5 619.3 365.7 620.9 366.0 622.5 366.3 624.0 366.6 625.6 367.0 627.1 367.4 628.7 367.8 630.2 368.3 631.8 368.8 633.3 369.3 634.8 369.9 636.4 370.5 637.9 371.2 639.4 371.9 640.9 372.7 642.4 373.5 643.9 374.4 645.4 375.4 646.9 376.4 648.4 377.4 649.9 378.6 651.3 379.8 652.8 381.1 654.3 382.6 655.7 384.1 657.1 385.8 658.5 387.5 659.9 389.5 661.3 391.7 662.7 394.0 664.0 396.7 665.3 399.7 666.6 403.3 667.8 407.5 668.9 413.2 670.4 414.2 671.9 413.5 673.5 412.7 675.1 412.0 676.6 411.3 678.2 410.6 679.8 409.9 681.3 409.2 682.9 408.4 684.4 407.7 686.0 407.0 687.5 406.3 689.1 405.6 690.7 404.9 692.2 404.1 693.8 403.4 695.3 402.7 696.9 402.0 698.4 401.3 700.0 400.6 701.5 399.9 703.1 399.1 704.6 398.4 706.2 397.7 707.7 397.0 709.3 396.3 710.8 395.6 712.4 394.9 713.9 394.2 715.5 393.5 717.0 392.7 718.5 392.0 720.1 391.3 721.6 390.6 723.2 389.9 724.7 389.2 726.3 388.5 727.8 387.8 729.3 387.1 730.9 386.4 732.4 385.7 733.9 384.9 735.5 384.2 737.0 383.5 738.6 382.8 740.1 382.1 741.6 381.4 743.1 380.7 744.7 380.0 746.2 379.3 747.7 378.6 749.3 377.9 750.8 377.2 752.3 376.5 M335.4 574.4 337.1 573.6 338.9 572.8 340.6 572.0 342.3 571.2 344.0 570.4 345.8 569.6 347.5 568.8 349.2 568.0 350.9 567.2 352.6 566.4 354.4 565.7 356.1 564.9 357.8 564.1 359.5 563.3 361.2 562.5 362.9 561.7 364.6 560.9 366.4 560.1 368.1 559.3 369.8 558.5 371.5 557.8 373.2 557.0 374.9 556.2 376.6 555.4 378.3 554.6 380.0 553.8 381.7 553.0 383.4 552.3 385.1 551.5 386.8 550.7 388.5 549.9 390.2 549.1 391.9 548.3 393.6 547.6 395.3 546.8 397.0 546.0 398.7 545.2 400.4 544.4 402.1 543.6 403.8 542.9 405.5 542.1 407.2 541.3 408.9 540.5 410.6 539.7 412.3 539.0 414.0 538.2 415.6 537.4 417.3 536.6 419.0 535.9 420.7 535.1 422.4 528.9 424.0 522.9 425.7 517.9 427.4 513.4 429.1 509.4 430.8 505.6 432.5 502.1 434.2 498.9 435.9 495.7 437.6 492.7 439.3 489.9 441.0 487.1 442.7 484.5 444.4 481.9 446.1 479.4 447.8 477.0 449.5 474.7 451.2 472.4 452.9 470.2 454.6 468.1 456.3 466.0 458.0 463.9 459.7 461.9 461.4 459.9 463.1 458.0 464.8 456.1 466.6 454.3 468.3 452.5 470.0 450.8 471.7 449.0 473.4 447.3 475.1 445.7 476.8 444.0 478.5 442.5 480.2 440.9 481.9 439.3 483.6 437.8 485.3 436.4 487.0 434.9 488.7 433.5 490.4 432.1 492.1 430.7 493.8 429.3 495.5 428.0 497.2 426.7 498.9 425.4 500.6 424.2 502.3 422.9 504.0 421.7 505.7 420.5 507.4 419.3 509.1 418.2 510.8 417.1 512.5 416.0 514.2 414.9 515.9 413.8 517.6 412.8 519.2 411.7 520.9 410.7 522.6 409.8 524.3 408.8 526.0 407.9 527.7 406.9 529.3 406.0 531.0 405.1 532.7 404.3 534.4 403.4 536.1 402.6 537.7 401.8 539.4 401.0 541.1 400.2 542.7 399.5 544.4 398.8 546.1 398.0 547.7 397.3 549.4 396.7 551.1 396.0 552.7 395.4 554.4 394.8 556.1 394.2 557.7 393.6 559.4 393.0 561.0 392.5 562.7 392.0 564.3 391.5 566.0 391.0 567.6 390.5 569.3 390.1 570.9 389.7 572.5 389.3 574.2 388.9 575.8 388.6 577.4 388.2 579.1 387.9 580.7 387.6 582.3 387.4 584.0 387.1 585.6 386.9 587.2 386.7 588.8 386.6 590.4 386.4 592.0 386.3 593.7 386.2 595.3 386.1 596.9 386.1 598.5 386.0 600.1 386.1 601.7 386.1 603.3 386.2 604.9 386.3 606.4 386.4 608.0 386.5 609.6 386.7 611.2 387.0 612.8 387.2 614.3 387.5 615.9 387.8 617.4 388.2 619.0 388.6 620.6 389.1 622.1 389.6 623.7 390.1 625.2 390.7 626.7 391.4 628.3 392.1 629.8 392.9 631.3 393.7 632.8 394.6 634.3 395.6 635.8 396.7 637.3 397.8 638.8 399.1 640.2 400.4 641.7 401.9 643.1 403.5 644.6 405.3 646.0 407.3 647.4 409.6 648.8 412.2 650.1 415.1 651.4 418.7 652.6 423.2 653.9 427.6 655.4 426.9 657.0 426.2 658.6 425.5 660.2 424.7 661.7 424.0 663.3 423.3 664.9 422.6 666.5 421.8 668.0 421.1 669.6 420.4 671.2 419.7 672.7 418.9 674.3 418.2 675.9 417.5 677.4 416.8 679.0 416.1 680.6 415.3 682.1 414.6 683.7 413.9 685.3 413.2 686.8 412.5 688.4 411.7 689.9 411.0 691.5 410.3 693.1 409.6 694.6 408.9 696.2 408.1 697.7 407.4 699.3 406.7 700.9 406.0 702.4 405.3 704.0 404.6 705.5 403.8 707.1 403.1 708.6 402.4 710.2 401.7 711.7 401.0 713.3 400.3 714.8 399.6 716.4 398.8 717.9 398.1 719.5 397.4 721.0 396.7 722.6 396.0 724.1 395.3 725.7 394.6 727.2 393.9 728.7 393.1 730.3 392.4 731.8 391.7 733.4 391.0 734.9 390.3 736.4 389.6 738.0 388.9 739.5 388.2 741.1 387.5 742.6 386.8 744.1 386.0 745.7 385.3 747.2 384.6 748.7 383.9 750.3 383.2 751.8 382.5 753.3 381.8 754.9 381.1 756.4 380.4 757.9 379.7 M340.4 578.2 362.9 567.9 385.1 557.6 407.2 547.4 429.2 537.2 451.1 527.1 472.8 517.1 494.4 507.1 515.9 497.2 537.2 487.4 558.4 477.6 579.5 467.9 600.4 458.2 621.2 448.6 641.9 439.0 662.5 429.5 683.0 420.1 703.3 410.7 723.5 401.4 743.6 392.1 763.6 382.9 M345.5 582.1 367.9 571.7 390.2 561.4 412.4 551.1 434.4 541.0 456.3 530.8 478.1 520.8 499.7 510.8 521.2 500.8 542.5 490.9 563.8 481.1 584.9 471.4 605.8 461.7 626.7 452.0 647.4 442.4 668.0 432.9 688.5 423.4 708.9 414.0 729.1 404.7 749.2 395.4 769.2 386.1 M350.6 586.0 373.0 575.6 395.4 565.2 417.6 554.9 439.6 544.7 461.6 534.5 483.3 524.4 505.0 514.4 526.5 504.4 547.9 494.5 569.2 484.7 590.3 474.9 611.3 465.1 632.2 455.5 652.9 445.9 673.6 436.3 694.1 426.8 714.4 417.4 734.7 408.0 754.8 398.6 774.9 389.4 M355.7 589.9 378.2 579.4 400.5 569.0 422.8 558.7 444.9 548.5 466.8 538.3 488.6 528.1 510.3 518.1 531.9 508.1 553.3 498.1 574.6 488.2 595.7 478.4 616.8 468.6 637.7 458.9 658.5 449.3 679.1 439.7 699.7 430.2 720.1 420.7 740.4 411.3 760.5 401.9 780.6 392.6 M360.8 593.8 383.3 583.3 405.7 572.9 428.0 562.5 450.1 552.2 472.1 542.0 494.0 531.8 515.7 521.7 537.3 511.7 558.7 501.7 580.0 491.8 601.2 481.9 622.3 472.1 643.2 462.4 664.0 452.7 684.7 443.1 705.3 433.5 725.7 424.0 746.0 414.6 766.2 405.2 786.3 395.9" stroke="#ffff00" stroke-width="1" fill="none" shape-rendering="crispEdges"/>
<polygon points="514.7,258.9 520.2,262.1 525.8,265.4 531.5,268.6 537.1,271.9 542.8,275.2 548.5,278.5 554.2,281.8 559.9,285.1 565.7,288.4 571.5,291.8 577.4,295.2 583.2,298.6 589.1,302.0 595.0,305.4 601.0,308.8 606.9,312.3 612.9,315.8 619.0,319.2 625.0,322.8 631.1,326.3 637.2,329.8 643.4,333.4 649.5,336.9 656.7,341.0 662.9,344.6 669.2,348.3 675.4,351.9 681.8,355.6 688.1,359.3 681.5,371.0 675.3,367.0 669.2,363.1 663.0,359.1 656.9,355.2 650.9,351.3 643.9,346.9 637.9,343.0 632.0,339.2 626.0,335.3 620.1,331.5 614.2,327.7 608.3,323.9 602.5,320.1 596.7,316.4 590.9,312.6 585.2,308.9 579.5,305.2 573.8,301.5 568.1,297.8 562.5,294.2 556.9,290.5 551.3,286.9 545.7,283.3 540.2,279.7 534.7,276.1 529.2,272.6 523.8,269.0 518.4,265.5 513.0,262.0" fill="#ffff00" fill-opacity="0.55"/>
<path d="M46.5 191.5 L94 388" stroke="#fff" stroke-width="1"/>
<path d="M327 382 L331 398" stroke="#fff" stroke-width="1" fill="none"/><path d="M331 398 L365 597" stroke="#ffff60" stroke-width="1" fill="none"/>
</g></svg>
<div class="t" style="left:4px;top:137.8px;font-size:12px;color:#e6e6e6;">[<span style="display:inline-block;width:8.6px;text-align:center">−</span>][Custom View][Realistic]</div>
<svg class="a" style="left:1500px;top:170px;" width="50" height="110" viewBox="0 0 50 110"><path d="M20 17 V13" stroke="#7070ff" stroke-width="1"/><path d="M31 73 L50 61" stroke="#e06060" stroke-width="1"/><path d="M31 92 L44 97.5" stroke="#50e050" stroke-width="1"/></svg>
<div class="a" style="left:677px;top:187px;width:854px;height:550px;background:#f0f0f0;border:1px solid #55a8e2;box-sizing:border-box;"></div>
<div class="a" style="left:678px;top:188px;width:852px;height:22px;background:#ffffff;"></div>
<div class="t" style="left:684.5px;top:194.5px;font-size:8.35px;color:#111;font-weight:400;transform-origin:0 0;">CIM-Tech Router-CIM Control Panel</div>
<svg class="a" style="left:1514px;top:193px;" width="11" height="11" viewBox="0 0 11 11"><path d="M1.5 1.5 L9.5 9.5 M9.5 1.5 L1.5 9.5" stroke="#1a1a1a" stroke-width="1.05"/></svg>
<div class="t" style="left:684.0px;top:216.9px;font-size:8.3px;color:#000000;font-weight:400;transform:scaleX(0.916);transform-origin:0 0;">Description</div>
<div class="a" style="left:729px;top:215px;width:797px;height:14px;background:#ffffff;border:1px solid #8a8a8a;box-sizing:border-box;"></div>
<div class="a" style="left:680px;top:241px;width:848px;height:438px;background:transparent;border:1px solid #dcdcdc;box-sizing:border-box;"></div>
<div class="a" style="left:687px;top:251px;width:159px;height:422px;background:transparent;border:1px solid #dadada;box-sizing:border-box;"></div>
<div class="t" style="left:693.0px;top:247.1px;font-size:8.3px;color:#000000;font-weight:400;transform:scaleX(0.916);transform-origin:0 0;background:#f0f0f0;padding:0 2px;margin-left:-2px;">Tool Information</div>
<div class="t" style="left:694.0px;top:260.7px;font-size:8.3px;color:#000000;font-weight:400;transform:scaleX(0.916);transform-origin:0 0;">BALL-MILL_500</div>
<div class="a" style="left:693px;top:274px;width:146px;height:15px;background:#e1e1e1;border:1px solid #adadad;box-sizing:border-box;"></div>
<div class="t" style="left:616.0px;width:300px;text-align:center;top:277.6px;font-size:8.3px;color:#000000;font-weight:400;transform:scaleX(0.916);transform-origin:150px 0;">Tools</div>
<div class="a" style="left:693px;top:299px;width:147px;height:45px;background:transparent;border:1px solid #dadada;box-sizing:border-box;"></div>
<div class="t" style="left:699.5px;top:295.1px;font-size:8.3px;color:#000000;font-weight:400;transform:scaleX(0.916);transform-origin:0 0;background:#f0f0f0;padding:0 2px;margin-left:-2px;">Tool Number / Comment</div>
<div class="a" style="left:697px;top:306px;width:139px;height:15px;background:#ffffff;border:1px solid #8a8a8a;box-sizing:border-box;"></div>
<div class="t" style="left:699.5px;top:308.8px;font-size:8.3px;color:#000000;font-weight:400;transform:scaleX(0.916);transform-origin:0 0;">&quot;1&quot;</div>
<svg class="a" style="left:825px;top:312px;" width="8" height="5" viewBox="0 0 8 5"><path d="M0.8 0.8 L4 3.8 L7.2 0.8" fill="none" stroke="#333" stroke-width="0.9"/></svg>
<div class="a" style="left:697px;top:325px;width:139px;height:15px;background:#ffffff;border:1px solid #8a8a8a;box-sizing:border-box;"></div>
<div class="t" style="left:699.5px;top:327.8px;font-size:8.3px;color:#000000;font-weight:400;transform:scaleX(0.916);transform-origin:0 0;">&quot;BALL END MILL .5 DIA.&quot;</div>
<div class="t" style="left:696.3px;top:354.8px;font-size:8.3px;color:#000000;font-weight:400;transform:scaleX(0.916);transform-origin:0 0;">CRC Offset</div>
<div class="a" style="left:768px;top:353px;width:70px;height:13px;background:#ffffff;border:1px solid #8a8a8a;box-sizing:border-box;"></div>
<div class="t" style="left:770.5px;top:355.8px;font-size:8.3px;color:#000000;font-weight:400;transform:scaleX(0.916);transform-origin:0 0;">autocrc</div>
<div class="t" style="left:696.3px;top:375.1px;font-size:8.3px;color:#000000;font-weight:400;transform:scaleX(0.916);transform-origin:0 0;">Spindle Direction</div>
<div class="a" style="left:768px;top:373px;width:70px;height:14px;background:#ffffff;border:1px solid #8a8a8a;box-sizing:border-box;"></div>
<div class="t" style="left:770.5px;top:375.8px;font-size:8.3px;color:#000000;font-weight:400;transform:scaleX(0.916);transform-origin:0 0;">CW</div>
<div class="t" style="left:696.3px;top:395.4px;font-size:8.3px;color:#000000;font-weight:400;transform:scaleX(0.916);transform-origin:0 0;">Tool Diameter</div>
<div class="a" style="left:768px;top:394px;width:70px;height:13px;background:#ffffff;border:1px solid #8a8a8a;box-sizing:border-box;"></div>
<div class="t" style="left:770.5px;top:396.8px;font-size:8.3px;color:#000000;font-weight:400;transform:scaleX(0.916);transform-origin:0 0;">0.50000</div>
<div class="t" style="left:696.3px;top:415.8px;font-size:8.3px;color:#000000;font-weight:400;transform:scaleX(0.916);transform-origin:0 0;">Tool Radius</div>
<div class="a" style="left:768px;top:414px;width:70px;height:14px;background:#ffffff;border:1px solid #8a8a8a;box-sizing:border-box;"></div>
<div class="t" style="left:770.5px;top:416.8px;font-size:8.3px;color:#000000;font-weight:400;transform:scaleX(0.916);transform-origin:0 0;">0.25000</div>
<div class="t" style="left:696.3px;top:436.1px;font-size:8.3px;color:#000000;font-weight:400;transform:scaleX(0.916);transform-origin:0 0;">Tool Length</div>
<div class="a" style="left:768px;top:434px;width:70px;height:14px;background:#ffffff;border:1px solid #8a8a8a;box-sizing:border-box;"></div>
<div class="t" style="left:770.5px;top:436.8px;font-size:8.3px;color:#000000;font-weight:400;transform:scaleX(0.916);transform-origin:0 0;">4.00000</div>
<div class="t" style="left:696.3px;top:456.4px;font-size:8.3px;color:#000000;font-weight:400;transform:scaleX(0.916);transform-origin:0 0;">4 Axis Safe</div>
<div class="a" style="left:768px;top:455px;width:70px;height:13px;background:#ffffff;border:1px solid #8a8a8a;box-sizing:border-box;"></div>
<div class="t" style="left:696.3px;top:476.4px;font-size:8.3px;color:#000000;font-weight:400;transform:scaleX(0.916);transform-origin:0 0;">Tool Type</div>
<div class="a" style="left:768px;top:475px;width:69px;height:13px;background:#ffffff;border:1px solid #8a8a8a;box-sizing:border-box;"></div>
<div class="t" style="left:770.5px;top:477.8px;font-size:8.3px;color:#000000;font-weight:400;transform:scaleX(0.916);transform-origin:0 0;">22</div>
<div class="t" style="left:696.3px;top:496.4px;font-size:8.3px;color:#000000;font-weight:400;transform:scaleX(0.916);transform-origin:0 0;">Category</div>
<div class="a" style="left:768px;top:495px;width:70px;height:13px;background:#ffffff;border:1px solid #8a8a8a;box-sizing:border-box;"></div>
<div class="t" style="left:696.3px;top:517.1px;font-size:8.3px;color:#000000;font-weight:400;transform:scaleX(0.916);transform-origin:0 0;">Vertical Offset</div>
<div class="a" style="left:768px;top:515px;width:70px;height:14px;background:#ffffff;border:1px solid #8a8a8a;box-sizing:border-box;"></div>
<div class="t" style="left:696.3px;top:537.4px;font-size:8.3px;color:#000000;font-weight:400;transform:scaleX(0.916);transform-origin:0 0;">Horizontal Offset</div>
<div class="a" style="left:768px;top:536px;width:70px;height:13px;background:#ffffff;border:1px solid #8a8a8a;box-sizing:border-box;"></div>
<div class="t" style="left:696.3px;top:561.0px;font-size:8.3px;color:#000000;font-weight:400;transform:scaleX(0.916);transform-origin:0 0;">Cutter Bridge</div>
<div class="a" style="left:768px;top:559px;width:70px;height:14px;background:#ffffff;border:1px solid #8a8a8a;box-sizing:border-box;"></div>
<div class="a" style="left:692px;top:589px;width:148px;height:35px;background:transparent;border:1px solid #dadada;box-sizing:border-box;"></div>
<div class="t" style="left:698.7px;top:585.1px;font-size:8.3px;color:#000000;font-weight:400;transform:scaleX(0.916);transform-origin:0 0;background:#f0f0f0;padding:0 2px;margin-left:-2px;">Aggregate Offset</div>
<svg class="a" style="left:696px;top:604px;" width="10" height="10" viewBox="0 0 10 10"><circle cx="5" cy="5" r="4.4" fill="#fff" stroke="#333333" stroke-width="0.9"/></svg>
<div class="t" style="left:708.7px;top:605.3px;font-size:8.3px;color:#000000;font-weight:400;transform:scaleX(0.916);transform-origin:0 0;">Spindle</div>
<svg class="a" style="left:768px;top:604px;" width="10" height="10" viewBox="0 0 10 10"><circle cx="5" cy="5" r="4.4" fill="#fff" stroke="#333333" stroke-width="0.9"/><circle cx="5" cy="5" r="2.2" fill="#1a1a1a"/></svg>
<div class="t" style="left:780.2px;top:605.3px;font-size:8.3px;color:#000000;font-weight:400;transform:scaleX(0.916);transform-origin:0 0;">Collet</div>
<div class="a" style="left:692px;top:633px;width:148px;height:33px;background:transparent;border:1px solid #dadada;box-sizing:border-box;"></div>
<div class="t" style="left:698.7px;top:629.1px;font-size:8.3px;color:#000000;font-weight:400;transform:scaleX(0.916);transform-origin:0 0;background:#f0f0f0;padding:0 2px;margin-left:-2px;">Cutter Compensation</div>
<svg class="a" style="left:696px;top:647px;" width="10" height="10" viewBox="0 0 10 10"><circle cx="5" cy="5" r="4.4" fill="#fff" stroke="#333333" stroke-width="0.9"/></svg>
<div class="t" style="left:708.7px;top:647.8px;font-size:8.3px;color:#000000;font-weight:400;transform:scaleX(0.916);transform-origin:0 0;">Yes</div>
<svg class="a" style="left:744px;top:647px;" width="10" height="10" viewBox="0 0 10 10"><circle cx="5" cy="5" r="4.4" fill="#fff" stroke="#333333" stroke-width="0.9"/><circle cx="5" cy="5" r="2.2" fill="#1a1a1a"/></svg>
<div class="t" style="left:756.5px;top:647.8px;font-size:8.3px;color:#000000;font-weight:400;transform:scaleX(0.916);transform-origin:0 0;">No</div>
<svg class="a" style="left:791px;top:647px;" width="10" height="10" viewBox="0 0 10 10"><circle cx="5" cy="5" r="4.4" fill="#fff" stroke="#333333" stroke-width="0.9"/></svg>
<div class="t" style="left:804.0px;top:647.8px;font-size:8.3px;color:#000000;font-weight:400;transform:scaleX(0.916);transform-origin:0 0;">Both</div>
<div class="a" style="left:851px;top:251px;width:224px;height:422px;background:transparent;border:1px solid #dadada;box-sizing:border-box;"></div>
<div class="t" style="left:856.0px;top:247.1px;font-size:8.3px;color:#000000;font-weight:400;transform:scaleX(0.916);transform-origin:0 0;background:#f0f0f0;padding:0 2px;margin-left:-2px;">Cycle Information</div>
<div class="a" style="left:858px;top:264px;width:207px;height:15px;background:#e1e1e1;border:1px solid #adadad;box-sizing:border-box;"></div>
<div class="t" style="left:811.5px;width:300px;text-align:center;top:267.6px;font-size:8.3px;color:#000000;font-weight:400;transform:scaleX(0.916);transform-origin:150px 0;">Stock Settings</div>
<div class="a" style="left:858px;top:284px;width:207px;height:15px;background:#e1e1e1;border:1px solid #adadad;box-sizing:border-box;"></div>
<div class="t" style="left:811.5px;width:300px;text-align:center;top:287.6px;font-size:8.3px;color:#000000;font-weight:400;transform:scaleX(0.916);transform-origin:150px 0;">Slice Settings</div>
<div class="a" style="left:858px;top:305px;width:207px;height:14px;background:#e1e1e1;border:1px solid #adadad;box-sizing:border-box;"></div>
<div class="t" style="left:811.5px;width:300px;text-align:center;top:308.1px;font-size:8.3px;color:#000000;font-weight:400;transform:scaleX(0.916);transform-origin:150px 0;">Rough Parameters</div>
<div class="a" style="left:858px;top:325px;width:207px;height:14px;background:#e1e1e1;border:1px solid #adadad;box-sizing:border-box;"></div>
<div class="t" style="left:811.5px;width:300px;text-align:center;top:328.1px;font-size:8.3px;color:#000000;font-weight:400;transform:scaleX(0.916);transform-origin:150px 0;">Containment</div>
<div class="a" style="left:858px;top:345px;width:207px;height:14px;background:#e1e1e1;border:1px solid #adadad;box-sizing:border-box;"></div>
<div class="t" style="left:811.5px;width:300px;text-align:center;top:348.1px;font-size:8.3px;color:#000000;font-weight:400;transform:scaleX(0.916);transform-origin:150px 0;">Recut Settings</div>
<div class="a" style="left:858px;top:365px;width:207px;height:15px;background:#e1e1e1;border:1px solid #adadad;box-sizing:border-box;"></div>
<div class="t" style="left:811.5px;width:300px;text-align:center;top:368.6px;font-size:8.3px;color:#000000;font-weight:400;transform:scaleX(0.916);transform-origin:150px 0;">Lead Settings</div>
<div class="t" style="left:860.8px;top:388.0px;font-size:8.3px;color:#000000;font-weight:400;transform:scaleX(0.916);transform-origin:0 0;">Material Z Location:</div>
<div class="a" style="left:964px;top:387px;width:100px;height:14px;background:#ffffff;border:1px solid #8a8a8a;box-sizing:border-box;"></div>
<div class="a" style="left:1080px;top:251px;width:175px;height:422px;background:transparent;border:1px solid #dadada;box-sizing:border-box;"></div>
<div class="t" style="left:1085.6px;top:247.1px;font-size:8.3px;color:#000000;font-weight:400;transform:scaleX(0.916);transform-origin:0 0;background:#f0f0f0;padding:0 2px;margin-left:-2px;">Status Information</div>
<div class="t" style="left:1088.7px;top:265.5px;font-size:8.3px;color:#000000;font-weight:400;transform:scaleX(0.916);transform-origin:0 0;">Safety Plane</div>
<div class="a" style="left:1177px;top:264px;width:70px;height:14px;background:#ffffff;border:1px solid #8a8a8a;box-sizing:border-box;"></div>
<div class="t" style="left:1179.5px;top:266.8px;font-size:8.3px;color:#000000;font-weight:400;transform:scaleX(0.916);transform-origin:0 0;">&#x27;0.25000</div>
<div class="t" style="left:1088.7px;top:283.9px;font-size:8.3px;color:#000000;font-weight:400;transform:scaleX(0.916);transform-origin:0 0;">Depth Per Pass</div>
<div class="a" style="left:1177px;top:283px;width:70px;height:13px;background:#ffffff;border:1px solid #8a8a8a;box-sizing:border-box;"></div>
<div class="t" style="left:1179.5px;top:285.8px;font-size:8.3px;color:#000000;font-weight:400;transform:scaleX(0.916);transform-origin:0 0;">1.00000</div>
<div class="t" style="left:1088.7px;top:302.4px;font-size:8.3px;color:#000000;font-weight:400;transform:scaleX(0.916);transform-origin:0 0;">Total Cut Depth</div>
<div class="a" style="left:1177px;top:301px;width:70px;height:14px;background:#ffffff;border:1px solid #8a8a8a;box-sizing:border-box;"></div>
<div class="t" style="left:1179.5px;top:303.8px;font-size:8.3px;color:#000000;font-weight:400;transform:scaleX(0.916);transform-origin:0 0;">1.00000</div>
<div class="a" style="left:1086px;top:327px;width:163px;height:113px;background:transparent;border:1px solid #dadada;box-sizing:border-box;"></div>
<div class="t" style="left:1091.4px;top:323.1px;font-size:8.3px;color:#000000;font-weight:400;transform:scaleX(0.916);transform-origin:0 0;background:#f0f0f0;padding:0 2px;margin-left:-2px;">Feedrate/Spindle Speed</div>
<div class="t" style="left:1093.0px;top:341.4px;font-size:8.3px;color:#000000;font-weight:400;transform:scaleX(0.916);transform-origin:0 0;">Feedrate</div>
<div class="a" style="left:1177px;top:338px;width:54px;height:14px;background:#ffffff;border:1px solid #8a8a8a;box-sizing:border-box;"></div>
<div class="t" style="left:1179.5px;top:340.8px;font-size:8.3px;color:#000000;font-weight:400;transform:scaleX(0.916);transform-origin:0 0;">1000.00000</div>
<div class="t" style="left:1093.0px;top:361.7px;font-size:8.3px;color:#000000;font-weight:400;transform:scaleX(0.916);transform-origin:0 0;">Spindle Speed</div>
<div class="a" style="left:1177px;top:359px;width:54px;height:13px;background:#ffffff;border:1px solid #8a8a8a;box-sizing:border-box;"></div>
<div class="t" style="left:1179.5px;top:361.8px;font-size:8.3px;color:#000000;font-weight:400;transform:scaleX(0.916);transform-origin:0 0;">18000.00000</div>
<div class="t" style="left:1093.0px;top:382.0px;font-size:8.3px;color:#000000;font-weight:400;transform:scaleX(0.916);transform-origin:0 0;">Surface FPM</div>
<div class="a" style="left:1177px;top:379px;width:54px;height:13px;background:#ffffff;border:1px solid #8a8a8a;box-sizing:border-box;"></div>
<div class="t" style="left:1179.5px;top:381.8px;font-size:8.3px;color:#000000;font-weight:400;transform:scaleX(0.916);transform-origin:0 0;">NONE</div>
<div class="t" style="left:1093.0px;top:402.4px;font-size:8.3px;color:#000000;font-weight:400;transform:scaleX(0.916);transform-origin:0 0;">Units Per Revolution</div>
<div class="a" style="left:1177px;top:399px;width:54px;height:14px;background:#ffffff;border:1px solid #8a8a8a;box-sizing:border-box;"></div>
<div class="t" style="left:1179.5px;top:401.8px;font-size:8.3px;color:#000000;font-weight:400;transform:scaleX(0.916);transform-origin:0 0;">NONE</div>
<div class="a" style="left:1090px;top:422px;width:154px;height:15px;background:#e1e1e1;border:1px solid #adadad;box-sizing:border-box;"></div>
<div class="t" style="left:1017.0px;width:300px;text-align:center;top:425.6px;font-size:8.3px;color:#000000;font-weight:400;transform:scaleX(0.916);transform-origin:150px 0;">Calculate</div>
<div class="t" style="left:1088.9px;top:449.4px;font-size:8.3px;color:#000000;font-weight:400;transform:scaleX(0.916);transform-origin:0 0;">Before Codes</div>
<div class="a" style="left:1177px;top:448px;width:56px;height:13px;background:#ffffff;border:1px solid #8a8a8a;box-sizing:border-box;"></div>
<div class="t" style="left:1088.9px;top:468.2px;font-size:8.3px;color:#000000;font-weight:400;transform:scaleX(0.916);transform-origin:0 0;">After Codes</div>
<div class="a" style="left:1177px;top:466px;width:56px;height:14px;background:#ffffff;border:1px solid #8a8a8a;box-sizing:border-box;"></div>
<div class="t" style="left:1088.9px;top:487.3px;font-size:8.3px;color:#000000;font-weight:400;transform:scaleX(0.916);transform-origin:0 0;">Oscillation Amount</div>
<div class="a" style="left:1177px;top:485px;width:56px;height:14px;background:#ffffff;border:1px solid #8a8a8a;box-sizing:border-box;"></div>
<div class="t" style="left:1179.5px;top:487.8px;font-size:8.3px;color:#000000;font-weight:400;transform:scaleX(0.916);transform-origin:0 0;">0.00000</div>
<div class="t" style="left:1088.9px;top:506.5px;font-size:8.3px;color:#000000;font-weight:400;transform:scaleX(0.916);transform-origin:0 0;">Sort By Rank #</div>
<div class="a" style="left:1177px;top:505px;width:56px;height:13px;background:#ffffff;border:1px solid #8a8a8a;box-sizing:border-box;"></div>
<div class="a" style="left:1085px;top:527px;width:164px;height:119px;background:#000;border:1px solid #d0d0d0;box-sizing:border-box;"></div>
<svg class="a" style="left:1086px;top:528px;" width="162" height="100" viewBox="0 0 162 100"><polygon points="24.0,61.0 80.8,96.8 80.8,99.0 24.0,63.2" fill="#1570c8"/><polygon points="80.8,96.8 135.8,60.8 135.8,63.0 80.8,99.0" fill="#1a86e0"/><polygon points="24.0,61.0 80.8,96.8 135.8,60.8 79.0,25.0" fill="#2aa8f8"/><defs><linearGradient id="mg" x1="0" y1="0" x2="1" y2="0.2"><stop offset="0" stop-color="#0f5ccc"/><stop offset="0.55" stop-color="#2288ee"/><stop offset="1" stop-color="#3cb4ff"/></linearGradient></defs><polygon points="122.3,59.4 78.3,88.2 37.5,62.4 37.5,60.8 37.7,59.3 38.0,57.9 38.5,56.6 39.0,55.4 39.7,54.3 40.5,53.3 41.4,52.5 42.4,51.9 86.4,23.1 87.4,22.5 88.6,22.2 89.9,21.9 91.2,21.9 92.6,21.9 94.1,22.2 95.6,22.5 97.1,23.1 98.7,23.7 100.3,24.6 101.9,25.5 103.5,26.6 105.1,27.8 106.7,29.1 108.2,30.5 109.7,32.0 111.2,33.6 112.6,35.3 113.9,37.1 115.2,38.9 116.4,40.8 117.4,42.7 118.4,44.6 119.3,46.5 120.1,48.4 120.8,50.4 121.3,52.3 121.8,54.1 122.1,55.9 122.3,57.7" fill="url(#mg)"/><polygon points="37.5,62.4 37.6,60.3 37.9,58.3 38.5,56.6 39.2,55.0 40.2,53.6 41.4,52.5 42.7,51.7 44.2,51.1 45.9,50.7 47.7,50.7 49.6,50.9 51.6,51.3 53.6,52.1 55.8,53.1 57.9,54.3 60.0,55.8 62.2,57.4 64.2,59.3 66.2,61.4 68.1,63.6 69.9,65.9 71.6,68.3 73.1,70.8 74.4,73.4 75.6,76.0 76.6,78.5 77.3,81.1 77.9,83.5 78.2,85.9 78.3,88.2" fill="#0b56b8"/><ellipse cx="83.7" cy="32.3" rx="6" ry="5" fill="#1e7ee0"/><circle cx="82.2" cy="31.3" r="1.5" fill="#90e8ff"/><path d="M26.7,55.6 L35.7,61.3 L35.7,61.3 L35.9,59.1 L36.2,57.0 L36.8,55.1 L37.7,53.4 L38.7,52.0 L40.0,50.8 L41.4,49.9 L43.1,49.2 L44.9,48.9 L46.8,48.8 L48.9,49.1 L51.1,49.6 L53.3,50.4 L55.6,51.5 L57.9,52.8 L60.2,54.4 L62.5,56.2 L64.7,58.2 L66.9,60.4 L69.0,62.8 L70.9,65.3 L72.7,67.9 L74.4,70.6 L75.8,73.4 L77.1,76.1 L78.1,78.9 L79.0,81.6 L79.6,84.3 L79.9,86.8 L80.1,89.3 L80.1,89.3 L88.0,94.3 L92.9,91.1 L84.9,86.1 L84.9,86.1 L84.8,83.6 L84.5,81.1 L83.9,78.4 L83.0,75.7 L82.0,72.9 L80.7,70.2 L79.3,67.4 L77.6,64.7 L75.8,62.1 L73.9,59.6 L71.8,57.2 L69.6,55.0 L67.4,53.0 L65.1,51.2 L62.8,49.6 L60.5,48.3 L58.2,47.2 L55.9,46.4 L53.8,45.9 L51.7,45.6 L49.8,45.7 L48.0,46.0 L46.3,46.7 L44.9,47.6 L43.6,48.8 L42.6,50.2 L41.7,51.9 L41.1,53.8 L40.8,55.9 L40.6,58.1 L40.6,58.1 L31.5,52.4 L36.4,49.2 L45.5,54.9 L45.5,54.9 L45.6,52.7 L46.0,50.6 L46.6,48.7 L47.4,47.0 L48.5,45.6 L49.8,44.4 L51.2,43.5 L52.9,42.8 L54.7,42.5 L56.6,42.4 L58.7,42.7 L60.8,43.2 L63.1,44.0 L65.4,45.1 L67.7,46.4 L70.0,48.0 L72.3,49.8 L74.5,51.8 L76.7,54.0 L78.8,56.4 L80.7,58.9 L82.5,61.5 L84.1,64.2 L85.6,67.0 L86.9,69.7 L87.9,72.5 L88.7,75.2 L89.3,77.9 L89.7,80.4 L89.8,82.9 L89.8,82.9 L97.8,87.9 L102.7,84.7 L94.7,79.7 L94.7,79.7 L94.6,77.2 L94.2,74.7 L93.6,72.0 L92.8,69.3 L91.8,66.5 L90.5,63.8 L89.0,61.0 L87.4,58.3 L85.6,55.7 L83.6,53.2 L81.6,50.8 L79.4,48.6 L77.2,46.6 L74.9,44.8 L72.6,43.2 L70.3,41.9 L68.0,40.8 L65.7,40.0 L63.6,39.5 L61.5,39.2 L59.5,39.3 L57.7,39.6 L56.1,40.3 L54.6,41.2 L53.4,42.4 L52.3,43.8 L51.5,45.5 L50.9,47.4 L50.5,49.5 L50.4,51.7 L50.4,51.7 L41.3,46.0 L46.2,42.8 L55.3,48.5 L55.3,48.5 L55.4,46.3 L55.8,44.2 L56.4,42.3 L57.2,40.6 L58.3,39.2 L59.5,38.0 L61.0,37.1 L62.6,36.4 L64.4,36.1 L66.4,36.0 L68.4,36.3 L70.6,36.8 L72.8,37.6 L75.1,38.7 L77.5,40.0 L79.8,41.6 L82.1,43.4 L84.3,45.4 L86.5,47.6 L88.5,50.0 L90.5,52.5 L92.3,55.1 L93.9,57.8 L95.4,60.6 L96.6,63.3 L97.7,66.1 L98.5,68.8 L99.1,71.5 L99.5,74.0 L99.6,76.5 L99.6,76.5 L107.6,81.5 L112.4,78.3 L104.5,73.3 L104.5,73.3 L104.4,70.8 L104.0,68.3 L103.4,65.6 L102.6,62.9 L101.5,60.1 L100.3,57.4 L98.8,54.6 L97.2,51.9 L95.4,49.3 L93.4,46.8 L91.4,44.4 L89.2,42.2 L87.0,40.2 L84.7,38.4 L82.3,36.8 L80.0,35.5 L77.7,34.4 L75.5,33.6 L73.3,33.1 L71.3,32.8 L69.3,32.9 L67.5,33.2 L65.9,33.9 L64.4,34.8 L63.2,36.0 L62.1,37.4 L61.3,39.1 L60.7,41.0 L60.3,43.1 L60.2,45.3 L60.2,45.3 L51.1,39.6 L56.0,36.4 L65.1,42.1 L65.1,42.1 L65.2,39.9 L65.6,37.8 L66.2,35.9 L67.0,34.2 L68.0,32.8 L69.3,31.6 L70.8,30.7 L72.4,30.0 L74.2,29.7 L76.2,29.6 L78.2,29.9 L80.4,30.4 L82.6,31.2 L84.9,32.3 L87.2,33.6 L89.5,35.2 L91.8,37.0 L94.1,39.0 L96.2,41.2 L98.3,43.6 L100.3,46.1 L102.1,48.7 L103.7,51.4 L105.2,54.2 L106.4,56.9 L107.5,59.7 L108.3,62.4 L108.9,65.1 L109.3,67.6 L109.4,70.1 L109.4,70.1 L117.3,75.1 L122.2,71.9 L114.3,66.9 L114.3,66.9 L114.2,64.4 L113.8,61.9 L113.2,59.2 L112.4,56.5 L111.3,53.7 L110.0,51.0 L108.6,48.2 L106.9,45.5 L105.1,42.9 L103.2,40.4 L101.1,38.0 L99.0,35.8 L96.7,33.8 L94.4,32.0 L92.1,30.4 L89.8,29.1 L87.5,28.0 L85.3,27.2 L83.1,26.7 L81.0,26.4 L79.1,26.5 L77.3,26.8 L75.7,27.5 L74.2,28.4 L72.9,29.6 L71.9,31.0 L71.1,32.7 L70.5,34.6 L70.1,36.7 L70.0,38.9 L70.0,38.9 L60.9,33.2 L65.8,30.0 L74.9,35.7 L74.9,35.7 L75.0,33.5 L75.3,31.4 L75.9,29.5 L76.8,27.8 L77.8,26.4 L79.1,25.2 L80.5,24.3 L82.2,23.6 L84.0,23.3 L85.9,23.2 L88.0,23.5 L90.2,24.0 L92.4,24.8 L94.7,25.9 L97.0,27.2 L99.3,28.8 L101.6,30.6 L103.9,32.6 L106.0,34.8 L108.1,37.2 L110.0,39.7 L111.8,42.3 L113.5,45.0 L114.9,47.8 L116.2,50.5 L117.2,53.3 L118.1,56.0 L118.7,58.7 L119.0,61.2 L119.2,63.7 L119.2,63.7 L127.1,68.7 L132.0,65.5 L124.1,60.5 L124.1,60.5 L123.9,58.0 L123.6,55.5 L123.0,52.8 L122.1,50.1 L121.1,47.3 L119.8,44.6 L118.4,41.8 L116.7,39.1 L114.9,36.5 L113.0,34.0 L110.9,31.6 L108.7,29.4 L106.5,27.4 L104.2,25.6 L101.9,24.0 L99.6,22.7 L97.3,21.6 L95.1,20.8 L92.9,20.3 L90.8,20.0 L88.9,20.1 L87.1,20.4 L85.4,21.1 L84.0,22.0 L82.7,23.2 L81.7,24.6 L80.8,26.3 L80.2,28.2 L79.9,30.3 L79.7,32.5 L79.7,32.5 L70.7,26.8" stroke="#e8dc28" stroke-width="0.9" fill="none"/><path d="M76.5,1 V25" stroke="#e8dc28" stroke-width="0.9"/></svg>
<div class="a" style="left:1086px;top:628px;width:162px;height:17px;background:#3a3a3a;"></div>
<div class="t" style="left:1017.0px;width:300px;text-align:center;top:631.9px;font-size:9.6px;color:#ffffff;font-weight:700;transform-origin:150px 0;">NURBS XZ</div>
<div class="a" style="left:1087px;top:650px;width:161px;height:16px;background:#e1e1e1;border:1px solid #adadad;box-sizing:border-box;"></div>
<div class="t" style="left:1017.5px;width:300px;text-align:center;top:654.1px;font-size:8.3px;color:#000000;font-weight:400;transform:scaleX(0.916);transform-origin:150px 0;">Reset Cycle Settings to Default</div>
<div class="a" style="left:1260px;top:251px;width:241px;height:422px;background:transparent;border:1px solid #dadada;box-sizing:border-box;"></div>
<div class="t" style="left:1265.2px;top:247.1px;font-size:8.3px;color:#000000;font-weight:400;transform:scaleX(0.916);transform-origin:0 0;background:#f0f0f0;padding:0 2px;margin-left:-2px;">Knowledge / Settings</div>
<div class="a" style="left:1266px;top:267px;width:229px;height:100px;background:transparent;border:1px solid #dadada;box-sizing:border-box;"></div>
<div class="t" style="left:1271.6px;top:263.1px;font-size:8.3px;color:#000000;font-weight:400;transform:scaleX(0.916);transform-origin:0 0;background:#f0f0f0;padding:0 2px;margin-left:-2px;">Knowledge</div>
<div class="t" style="left:1271.6px;top:274.5px;font-size:8.3px;color:#000000;font-weight:400;transform:scaleX(0.916);transform-origin:0 0;">Select Knowledge</div>
<div class="a" style="left:1274px;top:287px;width:215px;height:15px;background:#e1e1e1;border:1px solid #adadad;box-sizing:border-box;"></div>
<div class="t" style="left:1276.5px;top:291.0px;font-size:8.3px;color:#000000;font-weight:400;transform:scaleX(0.916);transform-origin:0 0;">CURRENT</div>
<svg class="a" style="left:1478px;top:292px;" width="8" height="5" viewBox="0 0 8 5"><path d="M0.8 0.8 L4 3.8 L7.2 0.8" fill="none" stroke="#333" stroke-width="0.9"/></svg>
<div class="a" style="left:1275px;top:311px;width:104px;height:12px;background:#e1e1e1;border:1px solid #adadad;box-sizing:border-box;"></div>
<div class="t" style="left:1177.0px;width:300px;text-align:center;top:313.1px;font-size:8.3px;color:#000000;font-weight:400;transform:scaleX(0.916);transform-origin:150px 0;">DOIT Edit</div>
<div class="a" style="left:1384px;top:311px;width:104px;height:12px;background:#e1e1e1;border:1px solid #adadad;box-sizing:border-box;"></div>
<div class="t" style="left:1286.0px;width:300px;text-align:center;top:313.1px;font-size:8.3px;color:#000000;font-weight:400;transform:scaleX(0.916);transform-origin:150px 0;">Edit</div>
<div class="a" style="left:1275px;top:329px;width:104px;height:13px;background:#e1e1e1;border:1px solid #adadad;box-sizing:border-box;"></div>
<div class="t" style="left:1177.0px;width:300px;text-align:center;top:331.6px;font-size:8.3px;color:#000000;font-weight:400;transform:scaleX(0.916);transform-origin:150px 0;">Retrieve</div>
<div class="a" style="left:1384px;top:329px;width:104px;height:13px;background:#e1e1e1;border:1px solid #adadad;box-sizing:border-box;"></div>
<div class="t" style="left:1286.0px;width:300px;text-align:center;top:331.6px;font-size:8.3px;color:#000000;font-weight:400;transform:scaleX(0.916);transform-origin:150px 0;">Save</div>
<div class="a" style="left:1275px;top:348px;width:104px;height:12px;background:#e1e1e1;border:1px solid #adadad;box-sizing:border-box;"></div>
<div class="t" style="left:1177.0px;width:300px;text-align:center;top:350.1px;font-size:8.3px;color:#000000;font-weight:400;transform:scaleX(0.916);transform-origin:150px 0;">Import</div>
<div class="a" style="left:1384px;top:348px;width:104px;height:12px;background:#e1e1e1;border:1px solid #adadad;box-sizing:border-box;"></div>
<div class="t" style="left:1286.0px;width:300px;text-align:center;top:350.1px;font-size:8.3px;color:#000000;font-weight:400;transform:scaleX(0.916);transform-origin:150px 0;">Export</div>
<div class="a" style="left:1268px;top:378px;width:86px;height:118px;background:transparent;border:1px solid #dedede;box-sizing:border-box;"></div>
<div class="t" style="left:1273.7px;top:374.6px;font-size:8.3px;color:#a2a2a2;font-weight:400;transform:scaleX(0.916);transform-origin:0 0;background:#f0f0f0;padding:0 2px;margin-left:-2px;">Tabbing</div>
<svg class="a" style="left:1271px;top:389px;" width="10" height="10" viewBox="0 0 10 10"><circle cx="5" cy="5" r="4.4" fill="#fff" stroke="#bcbcbc" stroke-width="0.9"/><circle cx="5" cy="5" r="2.2" fill="#a8a8a8"/></svg>
<div class="t" style="left:1283.5px;top:389.6px;font-size:8.3px;color:#a2a2a2;font-weight:400;transform:scaleX(0.916);transform-origin:0 0;">No</div>
<svg class="a" style="left:1271px;top:411px;" width="10" height="10" viewBox="0 0 10 10"><circle cx="5" cy="5" r="4.4" fill="#fff" stroke="#bcbcbc" stroke-width="0.9"/></svg>
<div class="t" style="left:1283.5px;top:411.5px;font-size:8.3px;color:#a2a2a2;font-weight:400;transform:scaleX(0.916);transform-origin:0 0;">Yes</div>
<svg class="a" style="left:1271px;top:432px;" width="10" height="10" viewBox="0 0 10 10"><circle cx="5" cy="5" r="4.4" fill="#fff" stroke="#bcbcbc" stroke-width="0.9"/></svg>
<div class="t" style="left:1283.5px;top:432.9px;font-size:8.3px;color:#a2a2a2;font-weight:400;transform:scaleX(0.916);transform-origin:0 0;">Auto</div>
<svg class="a" style="left:1271px;top:454px;" width="10" height="10" viewBox="0 0 10 10"><circle cx="5" cy="5" r="4.4" fill="#fff" stroke="#bcbcbc" stroke-width="0.9"/></svg>
<div class="t" style="left:1283.5px;top:454.6px;font-size:8.3px;color:#a2a2a2;font-weight:400;transform:scaleX(0.916);transform-origin:0 0;">Tab At Start</div>
<svg class="a" style="left:1271px;top:476px;" width="10" height="10" viewBox="0 0 10 10"><circle cx="5" cy="5" r="4.4" fill="#fff" stroke="#bcbcbc" stroke-width="0.9"/></svg>
<div class="t" style="left:1283.5px;top:476.5px;font-size:8.3px;color:#a2a2a2;font-weight:400;transform:scaleX(0.916);transform-origin:0 0;">Tab By Distance</div>
<div class="a" style="left:1360px;top:378px;width:133px;height:118px;background:transparent;border:1px solid #dedede;box-sizing:border-box;"></div>
<div class="t" style="left:1365.8px;top:374.6px;font-size:8.3px;color:#a2a2a2;font-weight:400;transform:scaleX(0.916);transform-origin:0 0;background:#f0f0f0;padding:0 2px;margin-left:-2px;">Tabbing Parameters</div>
<div class="t" style="left:1365.8px;top:389.2px;font-size:8.3px;color:#000000;font-weight:400;transform:scaleX(0.916);transform-origin:0 0;">Quantity</div>
<div class="a" style="left:1435px;top:387px;width:54px;height:14px;background:#f0f0f0;border:1px solid #cfcfcf;box-sizing:border-box;"></div>
<div class="t" style="left:1437.5px;top:389.8px;font-size:8.3px;color:#6d6d6d;font-weight:400;transform:scaleX(0.916);transform-origin:0 0;">NONE</div>
<div class="t" style="left:1365.8px;top:411.1px;font-size:8.3px;color:#000000;font-weight:400;transform:scaleX(0.916);transform-origin:0 0;">Length</div>
<div class="a" style="left:1435px;top:409px;width:54px;height:14px;background:#f0f0f0;border:1px solid #cfcfcf;box-sizing:border-box;"></div>
<div class="t" style="left:1437.5px;top:411.8px;font-size:8.3px;color:#6d6d6d;font-weight:400;transform:scaleX(0.916);transform-origin:0 0;">NONE</div>
<div class="t" style="left:1365.8px;top:432.4px;font-size:8.3px;color:#000000;font-weight:400;transform:scaleX(0.916);transform-origin:0 0;">Height</div>
<div class="a" style="left:1435px;top:430px;width:54px;height:14px;background:#f0f0f0;border:1px solid #cfcfcf;box-sizing:border-box;"></div>
<div class="t" style="left:1437.5px;top:432.8px;font-size:8.3px;color:#6d6d6d;font-weight:400;transform:scaleX(0.916);transform-origin:0 0;">NONE</div>
<div class="t" style="left:1365.8px;top:454.2px;font-size:8.3px;color:#000000;font-weight:400;transform:scaleX(0.916);transform-origin:0 0;">Distance</div>
<div class="a" style="left:1435px;top:452px;width:54px;height:14px;background:#f0f0f0;border:1px solid #cfcfcf;box-sizing:border-box;"></div>
<div class="t" style="left:1437.5px;top:454.8px;font-size:8.3px;color:#6d6d6d;font-weight:400;transform:scaleX(0.916);transform-origin:0 0;">NONE</div>
<div class="t" style="left:1365.8px;top:476.1px;font-size:8.3px;color:#000000;font-weight:400;transform:scaleX(0.916);transform-origin:0 0;">Minimum Radius</div>
<div class="a" style="left:1435px;top:474px;width:54px;height:14px;background:#f0f0f0;border:1px solid #cfcfcf;box-sizing:border-box;"></div>
<div class="t" style="left:1437.5px;top:476.8px;font-size:8.3px;color:#6d6d6d;font-weight:400;transform:scaleX(0.916);transform-origin:0 0;">0.00000</div>
<svg class="a" style="left:1267px;top:507px;" width="10" height="10" viewBox="0 0 10 10"><rect x="0.5" y="0.5" width="9" height="9" fill="#fff" stroke="#333" stroke-width="0.9"/><path d="M2 5.2 L4 7.5 L8.2 2.2" fill="none" stroke="#222" stroke-width="1"/></svg>
<div class="t" style="left:1287.2px;top:506.5px;font-size:8.3px;color:#000000;font-weight:400;transform:scaleX(0.916);transform-origin:0 0;">Acc-n-Dec</div>
<svg class="a" style="left:1267px;top:525px;" width="10" height="10" viewBox="0 0 10 10"><rect x="0.5" y="0.5" width="9" height="9" fill="#fff" stroke="#333" stroke-width="0.9"/></svg>
<div class="t" style="left:1287.2px;top:525.2px;font-size:8.3px;color:#000000;font-weight:400;transform:scaleX(0.916);transform-origin:0 0;">Metric</div>
<svg class="a" style="left:1267px;top:544px;" width="10" height="10" viewBox="0 0 10 10"><rect x="0.5" y="0.5" width="9" height="9" fill="#fff" stroke="#333" stroke-width="0.9"/></svg>
<div class="t" style="left:1287.2px;top:544.3px;font-size:8.3px;color:#000000;font-weight:400;transform:scaleX(0.916);transform-origin:0 0;">Inline</div>
<svg class="a" style="left:1267px;top:564px;" width="10" height="10" viewBox="0 0 10 10"><rect x="0.5" y="0.5" width="9" height="9" fill="#fff" stroke="#333" stroke-width="0.9"/></svg>
<div class="t" style="left:1287.2px;top:564.3px;font-size:8.3px;color:#000000;font-weight:400;transform:scaleX(0.916);transform-origin:0 0;">Plane Detect</div>
<div class="t" style="left:1268.6px;top:589.6px;font-size:8.3px;color:#000000;font-weight:400;transform:scaleX(0.916);transform-origin:0 0;">DOIT File</div>
<div class="a" style="left:1313px;top:586px;width:156px;height:14px;background:#ffffff;border:1px solid #8a8a8a;box-sizing:border-box;"></div>
<div class="t" style="left:1315.5px;top:588.8px;font-size:8.3px;color:#000000;font-weight:400;transform:scaleX(0.916);transform-origin:0 0;">doitinfo.dat</div>
<div class="a" style="left:1474px;top:588px;width:18px;height:12px;background:#e6e6e6;border:1px solid #c4c4c4;box-sizing:border-box;"></div>
<div class="t" style="left:1332.8px;width:300px;text-align:center;top:589.5px;font-size:8.3px;color:#777;font-weight:400;transform-origin:150px 0;">...</div>
<svg class="a" style="left:698px;top:690px;filter:drop-shadow(0.7px 0.7px 0.4px rgba(0,0,0,0.55));" width="24" height="23" viewBox="0 0 24 23"><rect x="8" y="8" width="13" height="13" fill="none" stroke="#9c9c9c" stroke-width="2.2"/><rect x="2" y="2" width="13" height="12" fill="none" stroke="#22e0ee" stroke-width="2.2"/></svg>
<div class="t" style="left:560.0px;width:300px;text-align:center;top:712.9px;font-size:8.4px;color:#000000;font-weight:400;transform:scaleX(0.92);transform-origin:150px 0;">Geoshape</div>
<svg class="a" style="left:756px;top:690px;filter:drop-shadow(0.7px 0.7px 0.4px rgba(0,0,0,0.55));" width="25" height="23" viewBox="0 0 25 23"><g fill="none" stroke="#e8141e" stroke-width="1.9"><rect x="2" y="2" width="7" height="7"/><path d="M13 1.5 H22 V8 H18 V11 H13 Z"/><path d="M2 15 H9 V21.5 H2 Z"/><path d="M9 21.5 L17 14 L23 21.5 Z M9 21.5 H23"/></g><path d="M7.5 11 V21" stroke="#2ee82e" stroke-width="1.6"/></svg>
<div class="t" style="left:618.5px;width:300px;text-align:center;top:712.9px;font-size:8.4px;color:#000000;font-weight:400;transform:scaleX(0.92);transform-origin:150px 0;">Group</div>
<svg class="a" style="left:816px;top:690px;filter:drop-shadow(0.7px 0.7px 0.4px rgba(0,0,0,0.55));" width="24" height="23" viewBox="0 0 24 23"><rect x="2.5" y="2.5" width="19" height="15" fill="none" stroke="#22e0ee" stroke-width="2.2"/><path d="M8 14 L14 20 M14 14 L8 20" stroke="#e81ee0" stroke-width="2"/></svg>
<div class="t" style="left:677.5px;width:300px;text-align:center;top:712.9px;font-size:8.4px;color:#000000;font-weight:400;transform:scaleX(0.92);transform-origin:150px 0;">Start Point</div>
<svg class="a" style="left:873px;top:689px;filter:drop-shadow(0.7px 0.7px 0.4px rgba(0,0,0,0.55));" width="24" height="25" viewBox="0 0 24 25"><defs><linearGradient id="cg2" x1="0" x2="1"><stop offset="0" stop-color="#444"/><stop offset="0.4" stop-color="#bbb"/><stop offset="1" stop-color="#222"/></linearGradient></defs><path d="M5 2 H20 V6 Q20 8 17 8.5 H15 V21 L12.5 22 L10.5 21 V8.5 H8 Q5 8 5 6 Z" fill="url(#cg2)"/><path d="M10.5 11 L15 9 M10.5 14 L15 12 M10.5 17 L15 15" stroke="#222" stroke-width="1"/><path d="M2 21.5 H11" stroke="#3cd23c" stroke-width="1.5"/></svg>
<div class="t" style="left:736.0px;width:300px;text-align:center;top:712.9px;font-size:8.4px;color:#000000;font-weight:400;transform:scaleX(0.92);transform-origin:150px 0;">Cut</div>
<svg class="a" style="left:933px;top:689px;filter:drop-shadow(0.7px 0.7px 0.4px rgba(0,0,0,0.55));" width="24" height="24" viewBox="0 0 24 24"><g fill="none" stroke="#3aa6e4" stroke-width="1.7"><rect x="2" y="2" width="7" height="7"/><circle cx="17" cy="5.5" r="4"/><circle cx="5.5" cy="18" r="4"/><rect x="13.5" y="14" width="7.5" height="7.5"/></g><path d="M5.5 4 V18 M17 4 V18 M5.5 18 L17 5.5" stroke="#fff" stroke-width="0.8" stroke-dasharray="1.5 1"/></svg>
<div class="t" style="left:794.2px;width:300px;text-align:center;top:712.9px;font-size:8.4px;color:#000000;font-weight:400;transform:scaleX(0.92);transform-origin:150px 0;">Sequence</div>
<svg class="a" style="left:992px;top:689px;filter:drop-shadow(0.7px 0.7px 0.4px rgba(0,0,0,0.55));" width="24" height="24" viewBox="0 0 24 24"><g fill="none" stroke="#3aa6e4" stroke-width="1.7"><rect x="2" y="2" width="7" height="7"/><circle cx="17" cy="5.5" r="4"/><circle cx="5.5" cy="18" r="4"/><rect x="13.5" y="14" width="7.5" height="7.5"/></g><path d="M5.5 4 V18 M17 4 V18 M5.5 18 L17 5.5" stroke="#fff" stroke-width="0.8" stroke-dasharray="1.5 1"/><path d="M17 10 Q15 4.5 10 6.5 L9 4 L4 8.5 L10 11.5 L9.5 9 Q13 8 14.5 12 Z" fill="#e02a2a"/></svg>
<div class="t" style="left:854.2px;width:300px;text-align:center;top:712.9px;font-size:8.4px;color:#000000;font-weight:400;transform:scaleX(0.92);transform-origin:150px 0;">Seq. Undo</div>
<svg class="a" style="left:1052px;top:689px;filter:drop-shadow(0.7px 0.7px 0.4px rgba(0,0,0,0.55));" width="24" height="25" viewBox="0 0 24 25"><path d="M3 2 H14 L19 7 V22 H3 Z" fill="#f8f8f8" stroke="#888" stroke-width="1"/><path d="M14 2 V7 H19" fill="#ddd" stroke="#888" stroke-width="0.8"/><path d="M5 8h6M5 11h8M5 14h6" stroke="#aaa" stroke-width="0.8"/><path d="M8 21 L19 9 L22 12 L11 23 L7.5 23.5 Z" fill="#f0a030" stroke="#704010" stroke-width="0.5"/><path d="M19 9 L20.5 7.5 L23.5 10.5 L22 12 Z" fill="#e070c0"/></svg>
<div class="t" style="left:913.0px;width:300px;text-align:center;top:712.9px;font-size:8.4px;color:#000000;font-weight:400;transform:scaleX(0.92);transform-origin:150px 0;">Edit Code</div>
<svg class="a" style="left:1109px;top:689px;filter:drop-shadow(0.7px 0.7px 0.4px rgba(0,0,0,0.55));" width="25" height="25" viewBox="0 0 25 25"><circle cx="12" cy="12" r="8.5" fill="none" stroke="#3aa6e4" stroke-width="2.4"/><path d="M9 1 L14 3 L9 5.5 Z M23 9 L21 14 L18.5 9 Z M15 23 L10 21 L15 18.5 Z M1 15 L3 10 L5.5 15 Z" fill="#3aa6e4"/><path d="M6 19 L16 7 L19 9.5 L9 21 L5.5 21.5 Z" fill="#f0a030" stroke="#704010" stroke-width="0.5"/><path d="M16 7 L17.5 5.5 L20.5 8 L19 9.5 Z" fill="#e070c0"/></svg>
<div class="t" style="left:971.3px;width:300px;text-align:center;top:712.9px;font-size:8.4px;color:#000000;font-weight:400;transform:scaleX(0.92);transform-origin:150px 0;">Mod Cycle</div>
<svg class="a" style="left:1169px;top:689px;filter:drop-shadow(0.7px 0.7px 0.4px rgba(0,0,0,0.55));" width="25" height="25" viewBox="0 0 25 25"><path d="M1 2 H21 V4.5 H1 Z" fill="#777"/><path d="M8.5 4.5 H13.5 V20 L11 22 L8.5 20 Z" fill="#bbb"/><path d="M8.5 8 L13.5 5.5 M8.5 11.5 L13.5 9 M8.5 15 L13.5 12.5 M8.5 18.5 L13.5 16" stroke="#333" stroke-width="1.1"/><path d="M9 21 L19 10 L22 12.5 L12 23 L8.5 23.5 Z" fill="#f0a030" stroke="#704010" stroke-width="0.5"/><path d="M19 10 L20.5 8.5 L23.5 11 L22 12.5 Z" fill="#e070c0"/></svg>
<div class="t" style="left:1030.0px;width:300px;text-align:center;top:712.9px;font-size:8.4px;color:#000000;font-weight:400;transform:scaleX(0.92);transform-origin:150px 0;">Mod Tool</div>
<svg class="a" style="left:1226px;top:690px;filter:drop-shadow(0.7px 0.7px 0.4px rgba(0,0,0,0.55));" width="26" height="23" viewBox="0 0 26 23"><polygon points="14.0,7.5 11.8,9.3 12.1,12.1 9.3,11.8 7.5,14.0 5.7,11.8 2.9,12.1 3.2,9.3 1.0,7.5 3.2,5.7 2.9,2.9 5.7,3.2 7.5,1.0 9.3,3.2 12.1,2.9 11.8,5.7" fill="#9a9a9a" stroke="#666" stroke-width="0.6"/><circle cx="7.5" cy="7.5" r="2.3" fill="#eee"/><polygon points="23.5,14.5 21.3,16.3 21.6,19.1 18.8,18.8 17.0,21.0 15.2,18.8 12.4,19.1 12.7,16.3 10.5,14.5 12.7,12.7 12.4,9.9 15.2,10.2 17.0,8.0 18.8,10.2 21.6,9.9 21.3,12.7" fill="#9a9a9a" stroke="#666" stroke-width="0.6"/><circle cx="17" cy="14.5" r="2.3" fill="#eee"/></svg>
<div class="t" style="left:1089.0px;width:300px;text-align:center;top:712.9px;font-size:8.4px;color:#000000;font-weight:400;transform:scaleX(0.92);transform-origin:150px 0;">NCVars</div>
<div class="a" style="left:1397px;top:687px;width:58px;height:43px;background:#e1e1e1;border:1px solid #adadad;box-sizing:border-box;"></div>
<svg class="a" style="left:1402px;top:699px;filter:drop-shadow(0.7px 0.7px 0.4px rgba(0,0,0,0.55));" width="24" height="20" viewBox="0 0 24 20"><path d="M2 10 L8 16 L21 3" fill="none" stroke="#167016" stroke-width="5.5"/><path d="M2 10 L8 16 L21 3" fill="none" stroke="#2ec52e" stroke-width="3.8"/></svg>
<div class="t" style="left:1427.7px;top:703.8px;font-size:8.7px;color:#000000;font-weight:400;transform:scaleX(0.92);transform-origin:0 0;">OK</div>
<div class="a" style="left:1460px;top:687px;width:65px;height:43px;background:#e1e1e1;border:1px solid #adadad;box-sizing:border-box;"></div>
<svg class="a" style="left:1467px;top:698px;filter:drop-shadow(0.7px 0.7px 0.4px rgba(0,0,0,0.55));" width="22" height="22" viewBox="0 0 22 22"><path d="M3 3 L18 18 M18 3 L3 18" stroke="#e00a0a" stroke-width="4.2"/></svg>
<div class="t" style="left:1489.7px;top:704.1px;font-size:8.7px;color:#000000;font-weight:400;transform:scaleX(0.92);transform-origin:0 0;">Close</div>
</body></html>
